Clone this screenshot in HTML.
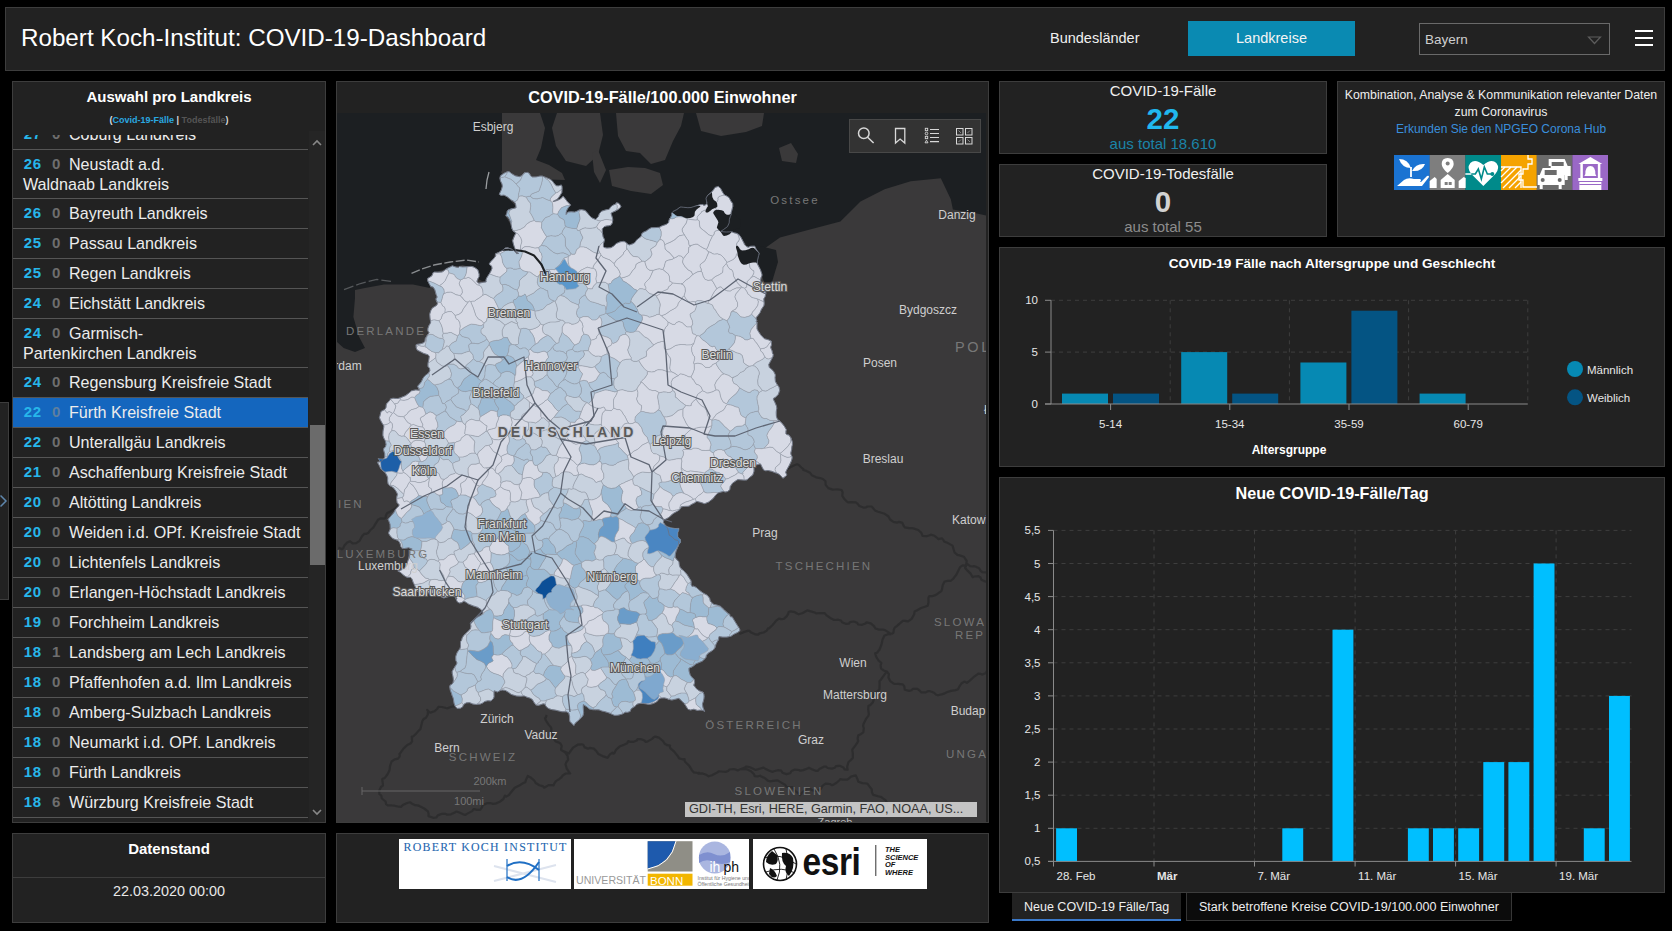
<!DOCTYPE html>
<html><head><meta charset="utf-8">
<style>
*{margin:0;padding:0;box-sizing:border-box}
html,body{width:1672px;height:931px;overflow:hidden;background:#000;font-family:"Liberation Sans",sans-serif;color:#e6e6e6}
.p{position:absolute;background:#222;border:1px solid #3d3d3d}
.a{position:absolute;white-space:nowrap}
.t{position:absolute;left:0;right:0;text-align:center;white-space:nowrap}
/* list */
#list{position:absolute;left:13px;top:134.5px;width:296px;height:687.5px;overflow:hidden}
.row{position:absolute;left:0;width:295px;border-bottom:1px solid #555;height:30px}
.row .n{position:absolute;left:10.8px;top:5.3px;font-weight:bold;color:#27b6ea;font-size:15px;letter-spacing:0.7px}
.row .d{position:absolute;left:39px;top:5.3px;font-weight:bold;color:#6e6e6e;font-size:15px}
.row .nm{position:absolute;left:56px;top:4.8px;color:#ececec;font-size:16.1px;line-height:19px;white-space:nowrap}
</style></head><body>

<!-- header -->
<div class="p" style="left:5px;top:7px;width:1660px;height:64px"></div>
<div class="a" style="left:21px;top:24px;font-size:24.2px;color:#fff">Robert Koch-Institut: COVID-19-Dashboard</div>
<div class="a" style="left:1050px;top:30px;font-size:14.5px;color:#f0f0f0">Bundesländer</div>
<div class="a" style="left:1188px;top:21px;width:167px;height:35px;background:#0a8ab2"></div>
<div class="a" style="left:1188px;top:30px;width:167px;text-align:center;font-size:14.5px;color:#f4f4f4">Landkreise</div>
<div class="a" style="left:1419px;top:23px;width:191px;height:32px;border:1px solid #6a6a6a"></div>
<div class="a" style="left:1425px;top:32px;font-size:13.5px;color:#cfcfcf">Bayern</div>
<svg class="a" style="left:1586px;top:35px" width="17" height="11"><path d="M2.5 2 L14.5 2 L8.5 8.5 Z" fill="none" stroke="#5c5c5c" stroke-width="1.2"/></svg>
<div class="a" style="left:1635px;top:30.2px;width:18px;height:2.2px;background:#fff"></div>
<div class="a" style="left:1635px;top:37.2px;width:18px;height:2.2px;background:#fff"></div>
<div class="a" style="left:1635px;top:44.2px;width:18px;height:2.2px;background:#fff"></div>

<!-- side stub -->
<div class="p" style="left:-1px;top:402px;width:10px;height:198px"></div>
<svg class="a" style="left:0;top:494px" width="8" height="14"><path d="M0.5 1.5 L6 7 L0.5 12.5" fill="none" stroke="#5f87ad" stroke-width="1.5"/></svg>
<!-- left list panel -->
<div class="p" style="left:12px;top:81px;width:314px;height:742px"></div>
<div class="t" style="left:12px;width:314px;top:88px;font-size:15px;font-weight:bold;color:#fff;right:auto">Auswahl pro Landkreis</div>
<div class="t" style="left:12px;width:314px;top:114.5px;font-size:9px;font-weight:bold;color:#ddd;right:auto">(<span style="color:#2aa9e0">Covid-19-Fälle</span> | <span style="color:#555">Todesfälle</span>)</div>
<div id="list">
<div class="row" style="top:-14.5px;height:30px"><div class="n">27</div><div class="d">0</div><div class="nm">Coburg Landkreis</div></div>
<div class="row" style="top:15.5px;height:49px"><div class="n">26</div><div class="d">0</div><div class="nm">Neustadt a.d.</div><div class="nm" style="left:10px;top:25px">Waldnaab Landkreis</div></div>
<div class="row" style="top:64.5px;height:30px"><div class="n">26</div><div class="d">0</div><div class="nm">Bayreuth Landkreis</div></div>
<div class="row" style="top:94.5px;height:30px"><div class="n">25</div><div class="d">0</div><div class="nm">Passau Landkreis</div></div>
<div class="row" style="top:124.5px;height:30px"><div class="n">25</div><div class="d">0</div><div class="nm">Regen Landkreis</div></div>
<div class="row" style="top:154.5px;height:30px"><div class="n">24</div><div class="d">0</div><div class="nm">Eichstätt Landkreis</div></div>
<div class="row" style="top:184.5px;height:49px"><div class="n">24</div><div class="d">0</div><div class="nm">Garmisch-</div><div class="nm" style="left:10px;top:25px">Partenkirchen Landkreis</div></div>
<div class="row" style="top:233.5px;height:30px"><div class="n">24</div><div class="d">0</div><div class="nm">Regensburg Kreisfreie Stadt</div></div>
<div class="row" style="top:263.5px;height:30px;background:#1466be"><div class="n">22</div><div class="d" style="color:#5e7f9f">0</div><div class="nm">Fürth Kreisfreie Stadt</div></div>
<div class="row" style="top:293.5px;height:30px"><div class="n">22</div><div class="d">0</div><div class="nm">Unterallgäu Landkreis</div></div>
<div class="row" style="top:323.5px;height:30px"><div class="n">21</div><div class="d">0</div><div class="nm">Aschaffenburg Kreisfreie Stadt</div></div>
<div class="row" style="top:353.5px;height:30px"><div class="n">20</div><div class="d">0</div><div class="nm">Altötting Landkreis</div></div>
<div class="row" style="top:383.5px;height:30px"><div class="n">20</div><div class="d">0</div><div class="nm">Weiden i.d. OPf. Kreisfreie Stadt</div></div>
<div class="row" style="top:413.5px;height:30px"><div class="n">20</div><div class="d">0</div><div class="nm">Lichtenfels Landkreis</div></div>
<div class="row" style="top:443.5px;height:30px"><div class="n">20</div><div class="d">0</div><div class="nm">Erlangen-Höchstadt Landkreis</div></div>
<div class="row" style="top:473.5px;height:30px"><div class="n">19</div><div class="d">0</div><div class="nm">Forchheim Landkreis</div></div>
<div class="row" style="top:503.5px;height:30px"><div class="n">18</div><div class="d">1</div><div class="nm">Landsberg am Lech Landkreis</div></div>
<div class="row" style="top:533.5px;height:30px"><div class="n">18</div><div class="d">0</div><div class="nm">Pfaffenhofen a.d. Ilm Landkreis</div></div>
<div class="row" style="top:563.5px;height:30px"><div class="n">18</div><div class="d">0</div><div class="nm">Amberg-Sulzbach Landkreis</div></div>
<div class="row" style="top:593.5px;height:30px"><div class="n">18</div><div class="d">0</div><div class="nm">Neumarkt i.d. OPf. Landkreis</div></div>
<div class="row" style="top:623.5px;height:30px"><div class="n">18</div><div class="d">0</div><div class="nm">Fürth Landkreis</div></div>
<div class="row" style="top:653.5px;height:30px"><div class="n">18</div><div class="d">6</div><div class="nm">Würzburg Kreisfreie Stadt</div></div>
<div class="row" style="top:683.5px;height:30px"><div class="n">18</div><div class="d">0</div><div class="nm">Kitzingen Landkreis</div></div>
</div>
<!-- scrollbar -->
<div class="a" style="left:309px;top:131px;width:16px;height:691px;background:#252525"></div>
<div class="a" style="left:310px;top:425px;width:15px;height:140px;background:#6b6b6b"></div>
<svg class="a" style="left:312px;top:139px" width="10" height="8"><path d="M1 6 L5 2 L9 6" fill="none" stroke="#888" stroke-width="1.6"/></svg>
<svg class="a" style="left:312px;top:808px" width="10" height="8"><path d="M1 2 L5 6 L9 2" fill="none" stroke="#888" stroke-width="1.6"/></svg>

<!-- datenstand -->
<div class="p" style="left:12px;top:833px;width:314px;height:90px"></div>
<div class="a" style="left:13px;top:877px;width:312px;height:1px;background:#3d3d3d"></div>
<div class="t" style="left:12px;width:314px;right:auto;top:840px;font-size:15px;font-weight:bold;color:#fff">Datenstand</div>
<div class="t" style="left:12px;width:314px;right:auto;top:882.5px;font-size:14.4px;color:#e8e8e8">22.03.2020 00:00</div>

<!-- map panel -->
<div class="p" style="left:336px;top:81px;width:653px;height:742px"></div>
<div class="t" style="left:336px;width:653px;right:auto;top:87.5px;font-size:16.3px;font-weight:bold;color:#fff">COVID-19-Fälle/100.000 Einwohner</div>
<div class="a" style="left:337px;top:113px;width:649px;height:709px;overflow:hidden;background:#3a393a">
<svg width="649" height="709" viewBox="337 113 649 709" style="display:block">
<rect x="337" y="113" width="649" height="709" fill="#3a393a"/>
<polygon points="337.0,113.0 502.0,113.0 502.0,171.0 501.0,172.0 503.0,175.0 501.0,191.6 509.5,199.8 515.6,206.0 505.4,216.0 515.6,232.4 511.5,240.6 519.7,250.8 505.4,250.8 495.0,252.9 491.0,271.2 487.0,283.5 479.0,279.4 476.8,269.0 462.5,265.0 446.0,269.0 432.0,273.0 429.8,288.0 413.0,284.5 384.0,284.5 365.0,288.0 355.0,290.0 355.0,298.0 353.4,317.0 359.0,336.7 365.0,348.0 355.0,352.0 343.7,348.0 337.0,342.0" fill="#1c1f22"/>
<polygon points="540.0,113.0 986.0,113.0 986.0,215.4 977.0,213.4 952.9,209.4 950.8,199.3 940.8,178.3 910.7,181.3 884.6,189.3 860.5,201.4 840.4,221.4 810.0,229.5 780.0,237.5 760.0,251.6 756.0,248.0 745.0,243.0 700.0,275.0 600.0,275.0 547.7,179.5 565.0,180.0 562.0,173.0 549.0,165.0 536.0,160.0 541.0,148.0 545.0,128.0" fill="#1c1f22"/>
<polyline points="411.5,273.3 421.7,269 434,265 450.3,262 466.6,260 478.9,262" fill="none" stroke="#8a8d90" stroke-width="1.4" stroke-dasharray="9,2.5"/>
<polyline points="344,289.6 360.5,283.5 376.8,279.4 391,281.4" fill="none" stroke="#55585b" stroke-width="1.3" stroke-dasharray="10,3"/>
<polyline points="489,172 487,180 486,189" fill="none" stroke="#9a9da0" stroke-width="1.3"/>
<polygon points="557.0,113.0 600.0,113.0 603.0,135.0 598.0,155.0 586.0,166.0 566.0,161.0 556.0,146.0 552.0,128.0" fill="#3a393a"/>
<polygon points="616.0,113.0 684.0,113.0 681.0,126.0 673.0,141.0 665.0,160.0 651.0,164.0 640.0,153.0 626.0,151.0 618.0,136.0" fill="#3a393a"/>
<polygon points="609.0,170.0 628.0,167.0 645.0,168.0 660.0,173.0 663.0,185.0 651.0,194.0 631.0,191.0 612.0,186.0" fill="#3a393a"/>
<polygon points="696.0,113.0 764.0,113.0 762.0,126.0 746.0,132.0 721.0,136.0 701.0,131.0" fill="#3a393a"/>
<polygon points="779.0,148.0 791.0,143.0 798.0,154.0 796.0,163.0 782.0,161.0" fill="#3a393a"/>
<polygon points="592.0,153.0 598.0,150.0 606.0,170.0 600.0,183.0 594.0,172.0" fill="#3a393a"/>
<polygon points="745.0,243.0 760.0,246.0 776.0,250.0 778.0,262.0 772.0,282.0 764.0,282.0 758.0,264.0" fill="#1c1f22"/>
<g fill="none" stroke="#2b2b2c" stroke-width="2.2" stroke-linejoin="round" opacity="0.8">
<polyline points="781.5,468.7 785.2,470.0 786.8,469.6 789.8,467.5 794.4,465.2 797.0,464.3 798.5,464.7 801.4,467.5 803.4,469.2 803.3,470.0 806.4,470.9 810.1,472.8 811.9,475.3 816.1,477.3 820.1,478.1 820.7,478.2 822.9,479.0 825.5,481.3 825.6,484.8 828.3,488.1 832.7,489.6 834.7,489.5 837.6,489.3 841.6,490.0 842.6,492.3 842.3,495.8 844.6,499.3 847.0,501.6 848.0,502.3 851.2,502.1 855.8,502.3 857.7,503.8 859.4,506.0 863.9,507.7 865.8,507.5 867.4,506.5 871.6,506.5 873.3,508.3 874.9,510.4 878.0,511.7 879.6,512.1 880.6,512.5 884.7,513.8 888.5,516.5 890.1,519.5 893.4,521.8 897.1,522.6 897.7,522.2 899.0,521.9 902.4,522.9 903.3,525.1 904.6,527.3 908.9,528.2 911.4,528.2 913.4,528.4 918.2,530.0 921.4,532.9 922.5,535.8 926.6,536.2 929.7,535.2 930.7,534.6 934.6,535.8 937.3,538.0 938.2,539.1 942.1,538.4 943.5,540.1 944.0,541.5 948.0,543.1 952.5,545.6 953.5,549.0 954.5,552.3 956.8,554.3 957.4,554.9 958.9,555.1 963.8,556.7 966.7,560.9 966.1,565.4 965.1,568.0 967.0,570.1 970.6,573.6 972.5,577.1 974.2,576.5 978.5,576.2 980.5,577.5 981.4,579.8 985.1,581.5 987.1,581.6"/>
<polyline points="739.3,633.2 740.7,633.6 743.1,632.4 747.5,630.9 749.4,630.9 751.2,632.6 755.6,634.4 758.2,634.6 759.5,633.4 763.6,632.5 766.8,630.6 767.7,628.9 767.8,628.6 769.3,628.1 772.6,625.0 776.2,620.6 778.9,618.6 781.1,619.1 783.8,618.9 786.6,616.4 788.2,613.8 788.7,612.0 790.5,611.3 794.9,612.2 797.5,613.8 798.8,614.3 802.8,613.0 806.2,611.0 807.3,610.4 810.7,611.4 814.7,612.5 816.2,613.4 820.1,613.0 824.7,613.2 826.3,615.1 830.2,617.9 834.1,619.9 834.9,620.0 838.1,619.7 841.0,620.5 842.0,622.2 845.7,623.8 849.0,623.6 850.0,622.1 853.8,621.5 857.1,622.7 858.2,624.5 862.1,624.8 865.5,623.5 866.6,622.4 870.8,623.3 874.0,626.1 875.4,628.5 879.1,629.6 883.5,629.7 885.0,630.1 887.4,631.6 891.2,634.1"/>
<polyline points="891.2,634.1 893.4,632.7 893.8,629.9 894.7,627.7 897.1,625.9 900.2,623.2 902.8,620.9 905.0,620.9 908.1,621.3 911.6,618.9 914.1,614.5 914.6,611.6 914.9,611.3 916.8,610.5 920.6,608.2 924.9,606.8 927.7,605.8 928.5,602.4 928.4,597.9 929.3,596.1 932.1,596.2 936.0,594.9 939.5,592.4 941.4,591.1 942.0,589.4 942.7,585.3 944.6,581.5 947.6,580.9 950.9,580.8 953.5,578.5 955.1,576.2 956.3,574.8 957.8,571.7 960.0,567.2 962.7,565.3 965.2,565.6 967.5,564.2 970.2,566.1 973.3,566.5 973.7,566.1 975.4,566.5 979.1,568.2 980.4,570.6 982.3,572.2 986.8,572.3"/>
<polyline points="891.2,634.1 887.8,634.2 884.3,635.8 882.4,640.0 882.0,642.4 881.4,644.7 879.6,649.5 877.0,652.7 875.2,653.4 876.2,656.7 878.5,660.5 880.7,662.3 881.3,663.0 880.6,665.4 881.1,668.7 883.8,670.5 886.8,671.6 888.9,673.9 888.4,677.5 890.2,681.1 893.4,683.4 894.9,684.0 898.0,683.8 902.7,684.3 904.3,686.4 904.8,689.8 909.2,690.9 911.5,690.2 913.0,688.8 917.4,688.8 919.7,690.6 921.2,692.4 925.7,692.4 927.9,691.2 929.5,691.0 934.0,692.7 936.2,694.8 937.9,695.3 942.5,694.1 944.7,693.4 946.7,692.2 951.0,690.9 955.6,690.1 958.1,689.3 959.2,686.9 961.4,683.5 964.3,681.6 965.9,682.2 966.9,682.8 969.8,680.6 974.6,676.3 978.4,673.6 980.3,673.8 982.4,674.6 985.6,673.2 987.8,669.9"/>
<polyline points="886.8,671.6 884.1,675.2 881.0,679.5 879.5,681.3 879.6,684.6 879.4,689.4 877.5,691.3 874.7,693.0 873.0,696.8 873.3,698.5 873.9,699.0 872.9,702.3 870.4,705.1 868.4,706.1 868.2,709.6 868.9,714.1 868.3,715.9 865.9,719.2 863.5,724.0 863.1,726.0 863.8,728.2 863.3,732.4 860.8,734.2 858.3,735.3 857.6,738.9 858.2,741.1 857.8,741.8 855.5,745.3 853.0,748.7 852.2,749.9 852.8,753.1 852.9,757.7 851.1,759.8 848.4,762.2 847.1,767.0 847.6,769.7 844.6,769.3 843.4,767.4 839.7,765.8 836.0,766.1 834.9,767.7 831.8,768.6 827.6,768.0 826.2,766.7 823.8,766.7 819.4,768.9 817.6,770.9 815.7,770.8 811.3,769.0 809.0,767.8 807.5,768.5 803.2,770.1 800.3,770.7 799.0,770.0 794.9,769.6 791.5,771.0 790.2,773.2 786.5,774.1 782.5,772.7 781.3,770.7 777.8,770.2 773.8,771.3 772.5,771.9 768.9,770.5 764.8,768.4 763.5,767.6 759.7,768.7 755.7,769.9 754.3,769.3 750.4,767.4 746.4,766.5 745.0,767.5 741.0,769.1 737.6,770.5 736.6,769.9 733.7,769.0 729.6,769.5 728.1,771.0 725.7,771.9 721.1,771.5 718.7,771.4 716.7,772.8 712.0,775.2 708.6,776.3 706.8,775.1 702.6,773.4 698.4,773.7 699.1,772.8 697.8,773.0 693.9,772.4 691.7,769.9 689.3,765.9 685.3,762.0 684.0,759.6 684.7,759.1 682.5,759.3 679.2,758.4 677.4,755.6 674.2,751.6 670.2,748.1 669.8,746.1 670.0,745.6 667.3,745.2 664.7,743.8 663.0,741.0 658.9,737.6 655.2,736.6 654.1,737.0 651.8,739.1 647.7,741.4 645.8,742.0 644.5,740.6 640.7,739.1 637.6,739.1 636.7,740.6 633.7,741.8 629.8,741.8 628.3,741.1 627.2,743.3 624.0,744.8 619.5,746.6 615.9,750.0 614.3,753.2 613.7,753.6 612.5,752.7 610.1,754.1 607.5,757.8 606.3,757.4 603.4,756.4 598.4,754.1 596.3,751.0 593.8,748.6 589.7,747.9 588.8,748.4 588.0,748.6 584.7,747.4 583.3,744.8 581.5,744.3 577.7,744.7 573.1,747.6 570.2,751.5 569.0,753.5 567.4,752.8 564.7,751.9 567.6,755.8 568.1,759.9 566.6,761.8 565.5,764.1 566.7,768.5 568.9,771.9 570.1,773.4 565.8,773.5 563.0,775.2 561.2,777.5 558.8,779.3 555.9,781.2 554.1,783.8 553.6,785.4 552.3,785.2 548.6,785.1 544.1,787.7 543.6,787.0 543.2,786.4 539.4,785.2 535.7,783.0 534.1,780.3 531.1,777.8 527.8,776.0 525.8,780.3 525.3,782.3 524.5,782.6 522.4,783.6 519.4,785.5 516.7,786.7 514.5,788.0 511.9,791.2 508.8,795.1 506.2,796.6 505.0,795.7 504.7,796.1 503.4,799.0 499.7,801.8 495.4,803.7 493.1,803.9 490.9,803.2 486.9,803.2 483.0,805.1 481.6,807.9 480.2,809.8 477.1,809.9 474.3,809.1 473.6,809.2 472.2,811.1 467.8,813.4 465.1,815.0 463.7,814.4 459.4,812.5 456.2,811.5 454.8,812.6 450.9,814.3 447.1,814.7 445.7,813.9 442.1,813.8 437.8,815.4 436.3,817.5 433.2,817.8 428.5,816.1 428.6,814.0 427.9,811.3 424.2,808.5 420.2,806.5 419.0,805.8 419.2,805.6"/>
<polyline points="456.7,706.9 454.8,706.2 450.1,707.2 447.5,708.3 446.0,708.0 442.0,707.0 438.5,706.8 437.3,708.7 434.5,711.3 430.4,712.6 428.8,711.7 427.2,709.9 428.0,711.0 427.8,714.5 426.0,717.7 423.7,718.9 422.3,721.3 421.1,726.2 420.4,729.2 418.7,730.6 415.9,733.9 413.1,736.5 411.8,736.5 411.9,737.7 412.1,741.3 410.5,743.5 407.2,745.1 403.3,748.8 400.4,752.9 399.4,754.0 399.7,754.2 399.7,756.3 398.0,758.6 394.7,759.4 391.6,761.5 390.0,766.2 389.7,769.4 389.2,771.0 387.4,774.5 384.6,778.1 382.5,778.7 382.2,779.8 382.8,783.1 383.0,785.5 381.1,786.8 379.2,790.8 379.4,794.2 381.1,795.3 381.9,798.5 385.6,801.5 386.1,804.2 387.7,805.4 391.2,805.4 392.2,805.5 394.5,805.7 399.0,806.7 401.2,806.8 402.8,805.1 407.1,803.0 410.3,802.3 411.6,803.5 415.2,805.2 419.2,805.6"/>
<polyline points="546.6,715.0 545.9,717.4 545.0,718.3 545.9,720.5 548.6,724.6 551.0,727.4 551.4,729.1 551.2,731.7 552.4,735.7 554.3,739.5 555.8,741.5 557.6,742.1 560.2,743.3 561.8,746.0 561.1,748.7 561.2,750.1 564.7,751.9"/>
<polyline points="741.0,769.1 745.4,769.0 746.9,769.3 751.0,771.3 754.1,774.2 754.7,776.2 758.1,776.3 760.2,775.7 760.9,776.2 765.1,778.3 767.7,780.6 769.7,781.3 774.9,780.7 777.7,780.4 780.1,781.9 785.0,784.7 786.6,786.8 788.4,787.3 792.2,787.1 792.9,788.1 794.8,790.7 798.8,793.7 800.0,795.1 802.7,791.9 807.3,788.9 809.9,788.5 812.0,790.1 816.7,790.9 820.8,789.0 822.5,785.8 825.6,783.7 830.0,784.0 831.8,785.2 833.1,784.9 836.6,782.7 839.4,780.2 840.2,779.2 842.8,779.6 846.9,779.7 848.9,778.5 851.0,776.6 855.7,775.3 857.4,778.9 858.3,781.7 862.3,783.1 866.8,783.5 867.8,784.2 869.2,786.1 871.7,789.2 872.0,792.4 873.3,794.9 878.1,796.3 881.4,797.1 882.6,798.1 885.4,800.1 887.1,802.9 886.6,805.8 889.0,808.1 893.4,809.6"/>
<polyline points="400.1,505.6 398.6,506.0 395.1,508.6 390.5,511.4 387.0,513.2 385.9,515.4 385.6,517.8 383.9,518.7 380.8,518.3 378.0,519.8 375.3,524.1 373.2,527.7 371.6,529.0 370.2,530.3 368.5,532.7 366.5,533.8 364.3,533.8 362.0,536.2 359.6,540.8 356.2,543.2 352.5,543.4 351.0,542.0 350.1,541.2 347.2,542.6 344.2,545.8 343.1,548.5 341.9,549.1 338.4,547.8"/>
</g>
<g stroke="#9aa1ae" stroke-width="0.55">
<polygon points="578.8,474.8 578.6,474.6 575.4,475.6 573.3,475.2 571.9,473.5 568.9,471.9 564.4,471.7 561.0,473.0 558.9,475.1 555.9,476.4 554.4,477.5 553.0,478.0 552.8,479.3 552.1,482.3 552.1,485.5 553.8,487.3 556.4,487.8 559.2,488.5 562.4,489.2 565.8,489.3 568.4,489.1 569.0,488.5 569.4,488.9 571.7,489.3 573.2,488.8 573.0,486.7 574.6,482.6 577.1,478.0 578.8,474.8" fill="#c8d2df"/>
<polygon points="581.7,443.0 578.3,443.6 575.9,444.2 572.9,443.0 569.0,439.9 566.1,437.1 565.9,437.4 565.4,438.4 563.5,441.5 560.2,445.6 558.1,449.9 557.1,453.3 555.7,455.4 557.0,456.0 558.5,457.2 561.2,458.0 562.9,458.1 565.2,457.9 569.1,458.6 573.3,461.1 576.1,464.1 577.5,465.2 578.9,464.2 581.0,461.9 581.7,457.7 580.8,453.0 579.4,450.2 579.2,448.7 580.3,446.1 581.7,443.0" fill="#d7dae5"/>
<polygon points="458.9,457.0 456.2,454.3 454.4,452.8 453.9,450.5 454.2,446.5 454.7,442.9 454.1,442.3 452.0,442.8 448.5,443.1 446.1,447.0 444.4,449.4 441.7,450.6 438.7,451.3 437.8,452.6 438.6,455.0 441.4,458.5 443.7,459.9 446.2,459.4 448.5,459.7 450.0,461.1 451.0,462.3 452.5,463.5 455.8,461.8 459.3,460.8 459.9,459.4 458.9,457.0" fill="#b3c7da"/>
<polygon points="713.6,204.5 713.5,204.6 711.2,206.8 708.9,208.7 704.5,210.2 701.7,211.6 700.9,213.1 698.7,215.0 697.0,217.3 697.3,219.8 698.8,220.5 699.3,221.0 699.4,224.0 699.9,227.3 701.7,229.0 704.7,231.3 708.7,234.8 712.5,236.2 714.3,234.0 714.3,232.2 715.8,230.9 718.5,230.4 719.9,230.3 721.2,229.9 724.8,228.8 724.9,228.8 725.2,225.2 725.0,220.6 723.6,218.0 721.1,215.6 718.4,211.8 716.5,209.2 715.4,208.6 714.7,207.0 713.6,204.5" fill="#d7dae5"/>
<polygon points="660.7,514.3 662.2,511.7 663.0,508.8 661.5,506.6 658.9,506.6 655.7,506.3 652.5,504.4 649.0,505.6 647.0,505.7 646.6,505.5 644.0,505.9 641.6,507.5 641.4,512.1 640.5,515.1 640.1,516.8 641.4,519.8 643.9,523.1 645.7,524.2 646.8,524.8 650.0,524.6 652.6,523.0 653.7,520.1 656.8,516.9 660.7,514.3" fill="#b3c7da"/>
<polygon points="384.4,469.6 385.7,468.5 387.8,465.5 389.3,461.7 389.1,458.9 387.4,456.7 384.8,457.0 383.2,459.6 381.4,461.1 380.1,461.8 377.4,462.2 379.2,465.4 381.0,469.2 383.0,470.7 383.1,470.3 384.4,469.6" fill="#c8d2df"/>
<polygon points="460.4,295.6 455.9,294.6 453.2,293.0 451.0,292.0 447.4,292.2 444.1,293.5 442.8,295.4 442.0,298.8 440.8,302.4 442.6,305.9 444.4,307.1 445.1,309.1 444.9,311.9 444.9,312.7 448.8,311.6 451.6,311.7 453.2,313.2 455.1,315.5 458.8,314.4 461.8,312.2 463.4,308.8 466.0,305.2 468.3,302.0 466.2,301.7 464.0,300.0 462.3,297.6 461.2,296.8 460.4,295.6" fill="#d7dae5"/>
<polygon points="579.6,418.0 579.6,416.8 580.2,415.0 581.2,412.2 580.4,411.3 578.5,411.1 575.9,411.2 573.4,409.7 570.9,406.4 567.8,403.7 565.1,405.3 562.1,407.4 560.6,409.5 558.9,411.1 556.3,414.1 553.9,417.3 557.1,417.4 561.2,417.1 565.2,418.7 568.2,420.9 570.2,422.3 571.8,422.3 574.8,422.4 575.5,421.9 576.4,420.2 579.6,418.0" fill="#b3c7da"/>
<polygon points="579.2,537.0 583.5,536.8 588.4,538.8 591.9,542.1 594.1,543.9 595.5,542.7 597.6,540.8 598.8,538.4 598.4,534.1 599.7,529.4 602.0,526.7 603.7,525.5 603.5,523.3 602.1,519.6 599.4,519.3 595.4,520.5 591.4,520.8 589.2,521.5 587.8,521.1 584.8,520.5 582.9,520.7 582.9,522.3 583.8,524.7 582.9,527.4 580.7,531.6 579.0,535.4 579.2,537.0" fill="#9dbbd4"/>
<polygon points="640.9,411.5 637.7,414.1 635.2,417.0 634.8,419.7 635.2,422.1 638.1,423.3 640.3,426.2 641.3,427.4 641.7,428.2 642.7,431.8 644.7,435.0 647.1,437.2 648.6,441.8 649.2,443.5 650.0,444.6 652.6,442.4 655.3,440.0 655.8,437.7 657.1,436.0 660.3,435.0 662.5,434.2 662.9,430.1 664.6,426.8 666.2,424.5 666.2,421.8 665.0,418.8 664.1,416.9 663.0,415.6 662.1,414.0 660.9,411.6 659.5,410.0 657.9,410.1 655.9,411.8 653.9,412.9 650.0,413.0 645.8,412.3 643.4,411.5 640.9,411.5" fill="#b3c7da"/>
<polygon points="517.2,289.9 514.2,289.0 511.7,287.6 508.7,285.6 505.1,284.3 502.2,284.7 502.9,287.9 502.7,290.8 499.7,293.1 496.5,295.0 494.9,296.8 493.5,298.5 494.8,300.7 496.7,304.4 498.4,308.3 499.4,310.2 501.7,308.6 503.8,306.0 508.1,303.6 511.7,302.3 513.4,302.5 513.3,300.4 514.4,299.6 515.6,299.4 516.7,298.4 518.6,296.0 518.4,292.6 517.2,289.9" fill="#b3c7da"/>
<polygon points="549.7,629.9 545.4,631.5 542.9,633.6 539.2,635.5 534.3,636.3 531.6,635.9 529.5,635.1 529.1,638.6 529.7,641.3 530.6,643.5 534.0,646.6 537.2,650.3 539.6,651.9 541.0,651.9 541.5,652.7 541.9,654.5 542.9,654.1 544.7,654.0 547.4,652.0 549.6,649.9 550.9,647.9 552.4,646.3 551.8,643.3 550.4,642.1 549.1,639.7 549.1,635.9 550.2,633.3 551.1,631.0 549.7,629.9" fill="#d7dae5"/>
<polygon points="745.1,424.1 747.2,427.6 748.0,429.1 747.8,431.8 747.9,434.7 749.2,435.5 751.5,436.4 753.6,439.5 754.2,442.0 753.5,443.5 753.8,445.2 755.4,448.6 759.2,448.6 761.9,448.7 763.9,448.3 766.2,446.0 768.6,443.2 769.0,440.5 767.7,438.0 766.9,435.2 768.6,431.5 771.9,427.2 774.1,423.5 774.1,421.5 773.2,420.6 770.2,420.4 768.3,419.4 766.6,418.5 764.4,418.5 761.9,417.5 759.8,414.4 758.2,411.1 755.3,411.5 750.3,412.9 747.2,415.3 745.8,417.9 745.5,420.9 745.1,424.1" fill="#b3c7da"/>
<polygon points="550.5,200.8 546.6,199.5 543.9,198.1 542.5,197.5 540.6,198.0 537.1,198.8 533.1,198.5 530.3,196.3 528.8,196.3 526.0,197.0 528.4,201.0 530.3,203.1 530.7,206.2 530.1,210.1 529.7,212.2 530.6,213.5 532.5,216.8 534.2,220.5 535.9,221.7 538.8,221.8 541.9,222.3 543.9,219.6 545.4,217.7 548.3,216.7 550.0,216.1 550.4,215.3 553.2,213.8 552.7,211.3 553.0,207.2 552.4,202.7 550.5,200.8" fill="#b3c7da"/>
<polygon points="723.2,319.1 719.9,316.8 717.1,312.9 715.3,309.7 714.3,308.9 713.6,307.7 712.5,305.1 710.4,303.9 707.7,303.2 706.2,302.7 704.5,301.6 701.0,300.6 697.3,300.6 695.3,301.8 696.3,306.6 694.9,310.7 691.9,312.8 689.9,314.1 690.4,316.6 692.2,320.4 692.7,324.1 691.0,326.9 691.7,328.8 692.1,332.0 693.0,334.0 694.6,334.3 696.8,335.8 699.0,335.9 700.0,336.7 700.0,335.6 702.5,334.0 705.0,331.9 706.5,329.4 710.1,326.7 714.6,324.3 716.9,322.4 718.6,321.1 721.6,320.1 723.2,319.1" fill="#c8d2df"/>
<polygon points="706.5,249.6 708.1,246.4 709.6,242.3 711.2,238.8 712.5,236.2 708.7,234.8 704.7,231.3 701.7,229.0 699.9,227.3 699.4,224.0 699.3,221.0 698.8,220.5 697.3,219.8 695.2,219.9 691.8,219.6 688.4,219.0 686.0,218.1 686.0,217.9 687.2,219.6 686.2,223.1 683.7,226.6 682.0,229.1 682.4,231.6 684.4,234.9 686.7,238.6 688.0,240.3 688.6,241.8 688.8,244.3 689.5,245.9 691.3,245.5 695.0,244.3 697.4,244.3 699.5,245.8 702.9,247.9 706.5,249.6" fill="#d7dae5"/>
<polygon points="711.6,279.9 713.7,277.9 715.7,276.4 719.3,274.7 722.6,272.6 723.0,270.0 723.0,267.5 724.7,265.3 726.4,263.6 726.6,262.7 727.1,262.2 726.2,261.1 724.1,258.1 720.9,254.9 717.5,253.7 714.6,254.0 712.7,253.7 711.1,252.5 708.9,251.7 708.3,253.1 707.3,255.4 706.2,258.3 704.7,260.9 702.1,263.0 700.0,264.7 700.0,266.7 701.2,269.0 701.1,271.2 702.1,272.4 702.5,273.7 703.2,276.4 705.1,279.4 708.1,280.5 711.6,279.9" fill="#d7dae5"/>
<polygon points="572.4,280.3 574.5,279.4 576.4,277.4 576.8,273.8 574.2,270.3 571.4,268.3 569.2,265.7 568.2,261.4 568.2,257.9 568.4,256.4 564.1,258.1 562.0,261.1 559.9,264.6 556.5,267.6 555.2,269.3 554.7,269.6 551.7,269.4 549.0,269.7 551.0,273.4 552.8,276.7 554.4,278.3 555.9,280.2 557.7,282.8 559.7,283.9 561.9,283.8 564.3,285.5 564.9,282.9 567.1,281.2 569.0,280.6 569.8,280.5 572.4,280.3" fill="#d7dae5"/>
<polygon points="424.3,514.2 422.9,517.0 420.9,520.0 418.6,522.8 418.2,525.1 418.7,526.5 419.2,528.5 418.1,529.5 416.1,531.9 414.9,535.1 415.3,537.4 418.5,538.9 422.0,541.4 426.6,541.4 428.9,540.4 431.0,539.3 434.5,538.9 434.0,537.6 433.6,535.0 434.3,532.1 436.1,529.8 438.1,527.5 438.9,524.4 435.4,520.3 431.5,518.0 428.0,517.4 425.5,516.1 424.3,514.2" fill="#b3c7da"/>
<polygon points="560.2,295.5 562.1,294.3 564.3,292.7 565.1,289.6 564.3,285.5 561.9,283.8 559.7,283.9 557.7,282.8 555.9,280.2 554.4,278.3 552.8,276.7 551.0,273.4 549.0,269.7 546.8,269.5 543.5,271.2 541.0,273.2 539.0,275.3 537.7,278.3 537.2,282.3 538.1,285.5 539.6,286.7 540.6,287.8 543.9,289.1 546.2,290.5 547.3,290.6 547.7,291.6 548.1,294.9 549.2,298.3 551.4,299.9 554.6,301.3 555.1,301.4 556.8,299.3 557.5,297.3 560.2,295.5" fill="#b3c7da"/>
<polygon points="501.8,653.9 499.2,654.9 497.1,655.0 493.7,654.4 491.5,657.0 492.2,659.2 493.2,660.7 491.7,661.7 488.5,663.2 486.3,666.3 487.5,668.5 490.1,671.5 493.8,673.4 497.7,674.6 500.8,676.0 503.0,677.6 503.3,673.9 505.7,670.7 507.6,668.7 508.5,668.0 511.8,668.0 512.1,665.2 511.8,663.7 510.0,660.4 507.1,656.9 504.1,655.6 501.8,653.9" fill="#d7dae5"/>
<polygon points="514.6,344.9 517.7,344.5 518.6,343.4 518.4,340.9 518.9,337.0 520.1,332.7 521.0,329.1 519.8,328.8 519.0,328.5 518.2,326.5 517.2,323.7 513.9,322.5 511.9,321.6 511.0,321.7 508.7,323.0 505.0,325.0 503.3,327.7 502.1,330.5 502.2,334.3 503.3,337.7 505.7,337.6 507.3,337.6 508.6,340.2 510.1,342.9 512.2,344.5 514.6,344.9" fill="#c8d2df"/>
<polygon points="403.7,494.2 403.6,495.7 402.3,497.5 403.4,500.3 404.2,501.8 405.2,501.3 407.0,500.9 409.9,502.4 411.9,500.6 414.9,498.8 417.0,497.2 418.8,495.6 417.9,493.2 415.8,489.4 412.9,485.3 410.4,483.5 409.4,482.3 408.2,483.9 407.0,486.6 404.5,489.8 404.0,492.6 403.7,494.2" fill="#d7dae5"/>
<polygon points="647.4,371.2 644.6,368.9 641.6,365.1 639.4,361.6 638.6,360.6 636.4,361.4 633.8,361.3 631.8,360.4 631.0,359.1 629.7,359.1 626.3,359.3 622.6,360.2 620.5,362.3 619.0,365.1 617.4,368.0 616.8,371.1 617.5,374.0 617.3,376.4 614.5,378.8 613.8,381.0 613.7,384.9 614.6,388.1 616.1,389.3 617.4,390.7 617.5,390.8 620.7,390.0 622.9,389.8 624.4,390.4 627.7,391.3 632.0,391.6 634.9,390.8 636.9,389.0 638.4,386.2 640.2,384.0 640.8,382.6 640.9,381.9 641.9,380.8 644.9,378.0 647.4,374.2 647.4,371.2" fill="#c8d2df"/>
<polygon points="763.9,448.3 766.4,448.0 769.7,447.2 772.6,447.5 774.4,449.0 775.5,450.5 777.1,451.8 780.0,453.4 781.5,452.4 782.6,451.6 784.2,449.9 787.6,446.8 790.6,442.4 790.9,437.8 788.8,434.9 786.9,434.7 785.9,433.7 785.9,431.2 786.3,429.7 785.9,429.0 784.3,426.2 781.4,422.6 779.7,421.1 776.4,420.6 773.2,420.6 774.1,421.5 774.1,423.5 771.9,427.2 768.6,431.5 766.9,435.2 767.7,438.0 769.0,440.5 768.6,443.2 766.2,446.0 763.9,448.3" fill="#d7dae5"/>
<polygon points="744.5,288.3 746.7,287.1 746.9,284.7 747.3,281.5 750.6,278.2 752.5,276.0 754.0,272.9 753.9,270.8 752.1,269.9 750.0,267.6 749.3,263.4 750.1,260.0 751.5,257.8 748.1,258.2 745.7,256.8 743.7,254.5 741.0,252.9 737.8,252.2 736.4,254.4 735.7,257.0 733.1,259.5 729.3,261.4 727.1,262.2 726.6,262.7 726.4,263.6 727.9,266.8 729.9,269.2 731.7,269.8 732.9,271.9 733.4,275.2 733.8,276.8 735.0,278.7 737.3,282.8 740.3,286.0 743.1,287.8 744.5,288.3" fill="#d7dae5"/>
<polygon points="463.5,278.5 466.3,278.2 468.3,277.4 471.0,278.7 474.4,282.1 477.2,284.9 479.2,285.3 479.0,284.3 480.4,283.0 478.0,283.1 476.9,281.3 477.9,278.5 479.0,276.9 479.1,274.3 477.8,269.8 475.0,267.8 472.7,266.6 470.3,266.4 467.0,266.8 466.7,269.3 466.5,271.1 466.2,272.9 465.4,275.5 463.5,278.5" fill="#d7dae5"/>
<polygon points="636.9,389.0 634.9,390.8 632.0,391.6 627.7,391.3 624.4,390.4 622.9,389.8 620.7,390.0 617.5,390.8 616.6,393.9 615.3,396.5 614.1,398.1 613.5,400.0 613.5,403.6 613.7,408.2 617.0,409.6 619.9,409.6 622.0,411.8 623.4,414.4 624.6,415.8 626.1,418.7 628.1,422.9 629.9,423.8 632.8,423.4 635.2,422.1 634.8,419.7 635.2,417.0 637.7,414.1 640.9,411.5 641.6,407.5 641.5,405.3 640.1,404.7 638.1,402.5 636.8,399.6 636.8,398.1 637.7,396.3 638.0,392.5 636.9,389.0" fill="#d7dae5"/>
<polygon points="480.3,564.4 480.6,562.5 479.9,561.9 478.2,559.9 476.0,556.4 474.1,553.8 473.4,553.8 471.3,553.9 468.6,554.7 467.7,556.5 466.4,559.2 462.8,562.1 464.3,565.3 465.3,567.4 466.7,568.0 468.7,570.1 471.1,573.4 473.4,575.2 474.7,575.6 475.4,576.4 474.7,574.9 475.5,573.0 477.3,570.4 478.8,567.4 480.3,564.4" fill="#d7dae5"/>
<polygon points="500.1,277.3 503.8,274.0 506.7,271.6 507.0,269.9 506.8,268.4 504.7,266.4 503.1,263.4 502.5,261.9 502.4,260.5 501.8,257.1 500.1,253.8 497.9,253.8 496.2,253.6 495.5,253.8 495.8,256.0 493.8,258.4 491.0,261.4 489.3,263.8 489.9,265.0 491.5,265.9 492.1,268.2 491.1,270.9 489.4,273.8 493.3,275.4 496.5,276.5 498.4,277.0 500.1,277.3" fill="#d7dae5"/>
<polygon points="614.3,633.5 613.0,633.8 610.6,633.7 607.9,633.2 605.9,634.0 604.8,635.0 603.6,636.9 602.8,639.1 602.7,641.8 603.0,644.2 602.7,646.3 600.8,648.6 601.2,649.6 601.9,652.7 603.6,655.1 606.9,654.7 611.3,654.0 613.7,652.6 617.4,650.7 620.8,649.3 622.4,646.6 621.3,642.2 620.0,637.8 617.0,637.0 615.1,636.0 614.3,633.5" fill="#9dbbd4"/>
<polygon points="501.0,689.3 502.2,687.0 503.9,684.2 504.9,682.4 504.6,680.8 503.0,677.6 500.8,676.0 497.7,674.6 493.8,673.4 490.1,671.5 487.5,668.5 486.3,666.3 485.9,666.7 484.3,670.3 481.7,673.9 480.6,677.0 481.3,679.2 480.6,680.6 477.8,681.7 476.7,683.1 475.5,684.7 475.5,687.4 476.3,690.6 478.1,692.5 482.1,691.1 485.9,689.5 488.5,689.1 490.8,690.3 494.0,692.4 494.2,690.8 496.9,691.8 497.7,692.0 499.0,691.1 501.0,689.3" fill="#b3c7da"/>
<polygon points="555.7,193.0 551.8,196.5 550.0,199.2 550.6,200.5 550.5,200.8 552.4,202.7 553.0,207.2 552.7,211.3 553.2,213.8 555.6,214.1 557.6,214.3 559.0,211.0 561.5,207.8 565.8,205.9 568.0,205.4 569.9,205.7 570.6,205.1 569.3,203.5 567.5,201.9 565.3,198.9 563.1,196.2 561.9,197.7 559.6,199.4 555.9,200.9 552.9,201.5 555.0,200.5 558.0,198.5 559.9,195.7 561.8,192.6 562.1,189.1 559.9,190.5 558.2,191.9 555.7,193.0" fill="#d7dae5"/>
<polygon points="522.3,479.0 521.4,481.6 520.3,483.7 519.1,485.1 519.0,486.4 520.1,489.2 521.4,491.6 521.8,492.9 521.3,495.1 520.5,499.2 523.2,499.8 526.6,499.8 529.8,499.0 531.1,499.0 532.6,498.3 535.9,497.8 539.1,497.3 540.4,496.3 539.4,494.0 537.1,490.2 535.0,487.8 534.2,485.0 534.3,480.0 532.3,478.3 530.3,477.4 527.4,477.5 524.2,478.2 522.3,479.0" fill="#d7dae5"/>
<polygon points="512.8,668.8 513.9,672.4 516.0,673.6 518.9,674.1 522.3,676.0 525.4,677.1 526.4,675.4 528.8,674.4 530.1,673.7 530.7,672.8 533.6,671.3 535.4,666.5 536.7,663.5 533.2,661.8 529.1,659.0 525.5,656.6 522.6,656.6 522.0,659.7 519.5,663.1 517.6,666.0 516.2,667.9 512.8,668.8" fill="#c8d2df"/>
<polygon points="661.7,555.3 659.5,552.7 658.1,550.7 657.6,549.8 656.2,549.9 655.3,549.3 654.2,548.2 652.5,547.7 650.4,547.1 648.5,547.7 646.9,548.2 644.8,549.8 642.8,552.8 642.7,556.2 643.7,559.2 644.8,559.7 646.3,561.9 648.8,565.1 651.7,567.0 653.9,566.6 655.9,563.1 658.9,559.7 661.6,556.9 661.7,555.3" fill="#b3c7da"/>
<polygon points="581.1,562.9 577.2,564.2 573.9,565.2 572.5,567.8 571.6,571.7 570.8,575.4 570.5,577.6 570.7,578.2 569.4,579.0 569.2,581.3 569.2,584.1 571.3,586.6 572.7,587.5 574.8,588.3 576.6,587.4 578.5,586.3 579.4,583.8 580.7,582.0 583.1,580.2 585.9,577.8 586.8,574.7 584.7,570.4 582.8,568.2 581.8,567.3 581.6,564.9 581.4,562.8 581.1,562.9" fill="#9dbbd4"/>
<polygon points="598.5,576.1 599.3,579.9 598.5,583.8 597.5,585.9 597.4,588.3 598.7,591.8 601.5,590.9 603.3,590.2 603.9,590.0 605.5,590.1 606.9,588.2 609.0,585.8 610.6,583.2 612.3,580.8 614.7,578.9 616.3,577.1 614.2,576.8 610.8,575.5 607.7,572.1 605.7,569.6 604.1,568.5 602.0,569.9 599.3,571.4 598.8,573.4 598.5,576.1" fill="#c8d2df"/>
<polygon points="530.8,559.4 530.5,557.2 529.1,555.9 528.6,554.5 530.1,552.1 528.4,547.9 526.9,544.9 525.2,543.9 523.1,542.3 520.7,539.7 520.8,543.2 519.4,546.5 515.9,549.2 513.3,550.9 511.9,551.6 509.3,551.8 508.4,552.5 508.4,553.2 508.8,553.5 511.9,555.3 515.2,558.1 517.7,560.2 520.0,560.4 523.4,559.1 527.6,558.4 530.8,559.4" fill="#9dbbd4"/>
<polygon points="758.2,411.1 758.8,409.3 758.7,407.3 757.8,403.4 757.0,398.9 757.2,396.2 758.2,394.8 759.0,392.6 757.4,390.3 754.5,389.7 751.5,390.9 750.1,392.5 748.0,392.3 743.8,390.3 739.5,387.8 738.5,390.3 736.1,393.6 731.8,397.1 728.8,400.1 727.7,402.3 726.3,403.7 727.6,404.5 732.1,405.3 735.8,406.9 737.9,407.3 738.9,407.9 739.6,411.2 740.9,415.1 743.0,416.7 745.8,417.9 747.2,415.3 750.3,412.9 755.3,411.5 758.2,411.1" fill="#b3c7da"/>
<polygon points="527.0,575.1 528.3,577.7 528.3,578.8 527.3,580.7 526.4,583.6 526.5,585.7 527.8,587.0 530.1,588.2 532.4,590.3 534.7,592.2 537.1,593.4 540.8,593.2 544.1,591.9 544.1,590.5 543.8,589.3 544.9,588.0 546.2,585.2 548.4,581.4 550.1,578.1 550.6,576.0 550.0,574.4 547.1,571.5 543.9,569.1 540.8,569.3 538.2,569.4 534.8,569.5 532.1,568.6 531.0,567.0 530.1,565.7 527.9,568.0 526.5,571.4 527.0,575.1" fill="#9dbbd4"/>
<polygon points="551.1,631.0 550.2,633.3 549.1,635.9 549.1,639.7 550.4,642.1 551.8,643.3 552.4,646.3 555.8,647.8 559.1,648.2 561.2,647.3 563.9,646.0 568.0,645.3 571.4,645.7 570.6,644.4 568.6,642.0 567.2,637.8 568.0,633.7 565.6,632.0 564.0,631.0 562.9,629.4 562.1,627.8 560.9,627.6 558.0,629.6 555.1,630.8 553.9,631.0 551.1,631.0" fill="#9dbbd4"/>
<polygon points="648.6,441.8 647.1,437.2 644.7,435.0 642.7,431.8 641.7,428.2 641.3,427.4 640.3,426.2 638.1,423.3 635.2,422.1 632.8,423.4 629.9,423.8 628.1,422.9 628.6,423.0 627.6,423.1 624.7,423.8 622.7,425.7 620.9,428.7 617.1,432.0 613.8,434.9 614.5,437.3 616.3,440.2 618.0,442.1 618.5,442.9 618.7,443.4 618.4,445.6 618.5,447.0 620.1,448.0 623.1,451.4 627.2,455.6 630.3,454.5 631.5,453.3 633.3,451.6 637.5,449.4 640.3,447.1 642.3,445.0 646.2,443.2 648.6,441.8" fill="#d7dae5"/>
<polygon points="681.5,458.9 683.3,455.4 683.6,452.2 682.7,450.3 683.3,449.7 686.5,449.3 686.9,446.8 686.4,442.6 682.1,440.2 678.9,439.5 677.1,439.5 675.2,438.8 672.1,438.3 668.3,438.1 665.0,437.0 662.5,434.2 660.3,435.0 657.1,436.0 655.8,437.7 655.3,440.0 652.6,442.4 650.0,444.6 650.4,446.5 650.6,448.3 651.6,451.6 653.7,453.7 656.8,454.1 659.9,456.0 663.8,457.0 666.4,458.7 667.4,460.0 669.4,460.3 673.0,459.7 676.2,459.0 678.4,458.7 681.5,458.9" fill="#c8d2df"/>
<polygon points="756.9,298.7 758.3,301.3 757.7,305.3 755.0,309.2 752.4,312.1 751.5,314.3 753.6,316.2 756.1,319.0 756.3,317.4 758.1,315.2 760.0,312.7 761.3,309.5 762.6,307.5 763.7,306.1 764.2,304.2 764.1,301.9 761.3,300.6 758.5,299.3 756.9,298.7" fill="#d7dae5"/>
<polygon points="508.4,553.2 508.4,552.5 509.3,551.8 508.9,548.9 508.9,546.1 508.3,545.5 506.3,544.2 503.2,541.3 499.7,539.4 497.0,538.4 495.4,540.3 494.7,541.1 492.6,541.0 492.2,541.9 492.0,542.4 491.3,543.9 489.5,546.8 489.7,550.3 491.1,552.4 493.6,553.4 496.8,554.6 501.3,555.1 504.9,554.6 506.5,553.5 508.4,553.2" fill="#d7dae5"/>
<polygon points="509.3,551.8 511.9,551.6 513.3,550.9 515.9,549.2 519.4,546.5 520.8,543.2 520.7,539.7 519.8,537.8 519.4,536.7 517.6,537.1 516.6,535.7 516.3,533.3 516.0,531.6 515.2,530.4 511.5,529.5 507.1,529.4 504.5,530.3 502.1,532.0 499.3,535.4 497.0,538.4 499.7,539.4 503.2,541.3 506.3,544.2 508.3,545.5 508.9,546.1 508.9,548.9 509.3,551.8" fill="#9dbbd4"/>
<polygon points="564.1,615.9 564.9,613.9 565.2,612.5 564.3,609.7 562.4,606.4 559.2,608.3 554.7,609.7 552.1,609.9 549.2,609.5 547.0,611.0 545.0,612.2 543.5,613.5 543.0,615.2 543.2,618.4 544.7,620.7 547.0,622.4 548.9,625.7 549.7,629.9 551.1,631.0 553.9,631.0 555.1,630.8 558.0,629.6 560.9,627.6 560.5,625.7 559.4,624.1 559.7,621.9 561.8,619.1 564.1,615.9" fill="#9dbbd4"/>
<polygon points="520.6,249.8 520.6,246.1 521.5,243.0 521.9,241.3 520.9,237.9 518.2,234.0 515.3,232.4 513.4,230.5 511.9,228.5 513.3,231.3 515.7,232.6 515.7,233.5 514.8,235.3 513.7,237.9 512.7,240.8 513.5,244.3 514.1,246.2 515.0,248.6 516.5,251.9 518.6,251.2 520.6,249.8" fill="#d7dae5"/>
<polygon points="500.1,253.8 504.2,251.5 506.8,249.5 508.4,248.7 511.8,249.3 507.8,247.8 505.2,248.1 502.9,250.2 498.8,252.3 496.2,253.6 497.9,253.8 500.1,253.8" fill="#d7dae5"/>
<polygon points="689.1,701.1 688.6,698.1 687.3,694.3 685.5,693.0 681.4,692.9 677.1,694.2 674.5,695.7 671.3,696.1 670.1,698.1 668.7,699.4 672.2,700.0 676.0,699.0 678.6,698.3 680.1,699.2 681.7,701.1 683.9,702.9 684.6,703.9 687.8,703.1 689.1,701.1" fill="#b3c7da"/>
<polygon points="440.9,434.8 444.6,431.8 446.9,429.1 450.4,426.7 454.6,424.7 456.0,422.9 456.6,421.1 452.9,418.8 449.7,416.7 447.5,413.5 446.4,411.8 445.8,412.0 445.2,410.8 441.9,412.6 439.6,414.0 438.3,414.8 436.2,415.4 435.6,418.8 436.4,420.3 437.5,423.1 437.8,426.5 436.7,428.3 435.6,430.5 437.6,433.1 440.9,434.8" fill="#b3c7da"/>
<polygon points="471.1,403.7 470.2,400.0 469.6,397.9 470.0,396.1 471.0,393.3 471.6,390.6 469.2,390.7 465.5,391.6 461.4,390.9 458.0,388.6 458.8,390.8 458.3,393.2 455.2,395.4 451.8,397.4 450.8,399.6 453.0,403.1 456.4,406.9 460.3,408.5 463.8,409.4 466.4,411.3 468.9,408.9 469.4,406.2 471.1,403.7" fill="#b3c7da"/>
<polygon points="583.9,334.0 581.4,336.6 580.5,339.9 578.9,343.1 574.7,345.1 573.2,347.0 572.4,349.2 574.7,351.6 577.8,352.1 580.9,350.9 583.3,351.1 583.6,350.8 585.4,350.8 588.5,350.7 588.9,347.8 589.8,345.7 590.7,343.4 591.0,340.3 589.6,337.3 588.4,335.3 586.6,334.6 583.9,334.0" fill="#b3c7da"/>
<polygon points="673.0,496.3 674.8,495.4 676.0,494.1 678.8,493.0 681.6,492.6 682.7,493.0 684.4,493.6 682.4,490.8 680.6,486.5 679.8,483.2 680.3,481.0 681.5,477.6 682.2,473.7 681.5,471.8 678.2,473.7 676.5,476.7 672.9,479.6 668.0,481.4 665.2,481.9 662.0,481.9 659.6,482.7 658.7,483.8 659.7,486.3 663.4,489.5 667.4,491.5 670.8,493.3 673.0,496.3" fill="#b3c7da"/>
<polygon points="435.6,430.5 436.7,428.3 437.8,426.5 437.5,423.1 436.4,420.3 435.6,418.8 436.2,415.4 433.0,412.8 430.0,411.8 427.9,412.9 425.8,414.1 423.5,416.1 421.0,417.3 420.2,418.9 421.2,421.4 422.7,424.4 422.5,427.0 424.1,428.5 425.0,430.7 425.6,433.7 426.3,435.4 427.3,433.1 429.4,431.1 432.5,430.0 434.4,430.0 435.6,430.5" fill="#d7dae5"/>
<polygon points="741.1,287.8 736.7,287.8 732.6,289.5 730.3,291.0 727.0,290.8 723.1,288.9 721.2,287.0 720.0,286.8 716.8,288.6 714.2,291.8 712.2,295.2 710.7,298.5 708.8,301.2 707.7,303.2 710.4,303.9 712.5,305.1 713.6,307.7 714.3,308.9 715.3,309.7 717.1,312.9 719.9,316.8 723.2,319.1 725.0,319.9 727.0,320.8 729.1,318.0 730.6,314.8 731.1,312.1 732.7,310.7 735.6,309.2 737.6,306.3 737.5,302.5 735.9,299.4 734.9,296.8 736.1,293.7 739.0,290.3 741.1,287.8" fill="#d7dae5"/>
<polygon points="397.0,528.3 399.9,526.6 400.4,525.7 399.9,525.1 400.5,523.9 402.0,521.7 401.4,518.4 399.6,517.2 397.8,515.6 396.5,512.7 395.4,509.6 393.9,512.6 391.4,515.5 389.2,518.0 388.2,519.4 388.9,521.0 390.1,524.4 390.3,528.9 391.2,528.4 393.3,527.8 397.0,528.3" fill="#9dbbd4"/>
<polygon points="650.3,534.5 650.2,532.8 649.9,529.1 648.5,525.7 645.7,524.2 643.9,523.1 641.4,522.8 638.2,523.8 637.1,525.9 635.7,528.0 633.9,532.1 631.1,534.7 629.6,537.4 630.4,540.9 632.4,543.5 634.2,542.8 637.7,541.3 642.3,540.5 645.5,541.5 647.4,543.8 649.9,545.8 650.4,543.2 650.4,539.9 650.2,536.7 650.3,534.5" fill="#9dbbd4"/>
<polygon points="465.4,424.8 464.1,424.0 462.2,421.7 459.7,421.6 456.6,421.1 456.0,422.9 454.6,424.7 450.4,426.7 446.9,429.1 444.6,431.8 440.9,434.8 443.2,436.8 446.3,439.0 448.5,443.1 452.0,442.8 454.1,442.3 454.7,442.9 456.6,441.8 459.8,440.8 461.0,439.7 461.2,438.3 463.4,436.6 465.9,434.7 464.8,433.6 465.2,429.9 465.9,426.6 465.4,424.8" fill="#d7dae5"/>
<polygon points="692.8,274.5 691.3,271.5 688.3,270.0 685.0,266.5 682.9,263.1 682.7,261.6 683.3,258.4 681.4,256.0 678.4,255.7 676.1,257.2 674.2,258.1 672.2,259.3 668.3,260.1 665.6,261.3 664.9,263.5 664.2,266.5 662.8,269.5 666.1,272.3 668.3,274.0 669.4,276.7 669.6,280.1 669.8,281.5 670.7,281.6 672.5,283.0 674.4,283.3 677.0,283.5 680.9,283.9 682.7,283.6 683.5,282.7 685.2,280.8 689.3,277.9 692.8,274.5" fill="#d7dae5"/>
<polygon points="629.7,581.3 626.9,582.9 624.9,585.1 624.9,587.3 626.3,589.0 627.4,590.7 628.9,593.1 629.5,596.8 629.7,599.7 630.1,600.8 633.9,598.5 638.1,595.8 640.5,593.6 643.4,592.7 647.8,593.2 645.6,591.4 642.6,589.7 640.3,585.9 639.6,583.0 640.2,581.2 638.4,580.3 636.0,579.2 633.7,581.0 632.5,581.6 629.7,581.3" fill="#9dbbd4"/>
<polygon points="626.1,679.0 626.0,679.1 627.8,682.6 629.1,686.5 630.3,688.4 631.8,689.9 633.7,692.6 634.8,691.4 636.5,690.1 638.2,686.5 639.1,684.0 641.7,682.6 645.8,681.6 647.7,680.6 647.6,679.0 645.4,676.3 643.6,672.0 642.7,668.6 642.5,667.0 641.2,667.2 638.2,667.8 634.4,671.6 633.1,675.2 632.6,677.6 630.7,678.8 628.9,678.9 628.2,678.7 626.1,679.0" fill="#b3c7da"/>
<polygon points="473.4,575.2 471.1,573.4 468.7,570.1 466.7,568.0 465.3,567.4 464.3,565.3 462.8,562.1 460.2,562.0 458.5,561.8 457.5,564.0 454.3,566.0 450.4,567.9 449.5,569.7 450.1,571.8 449.0,574.3 447.2,577.4 449.7,576.2 453.2,576.8 455.9,578.9 457.9,581.2 460.5,582.1 464.0,581.5 467.6,579.3 468.9,577.4 471.0,576.0 473.4,575.2" fill="#c8d2df"/>
<polygon points="643.7,559.2 641.9,561.1 638.1,563.3 636.9,564.8 635.5,566.4 635.2,569.8 636.0,573.3 636.6,575.9 636.0,579.2 638.4,580.3 640.2,581.2 642.1,579.2 645.2,578.3 649.6,578.2 651.7,577.9 653.7,576.9 657.3,575.1 655.4,574.2 654.0,571.4 653.6,568.5 653.9,566.6 651.7,567.0 648.8,565.1 646.3,561.9 644.8,559.7 643.7,559.2" fill="#d7dae5"/>
<polygon points="780.5,454.0 780.6,457.1 780.8,460.7 780.0,463.4 777.9,465.3 775.6,467.3 774.9,469.8 776.0,471.9 777.2,473.3 778.9,474.1 780.8,475.8 782.9,478.2 785.6,476.3 786.9,475.0 786.3,473.9 785.6,472.2 786.9,469.6 788.9,466.0 791.1,461.7 792.2,458.1 791.9,456.1 789.7,457.1 787.1,457.3 783.9,456.0 780.5,454.0" fill="#d7dae5"/>
<polygon points="534.2,220.5 532.5,216.8 530.6,213.5 529.7,212.2 530.1,210.1 530.7,206.2 530.3,203.1 528.4,201.0 526.0,197.0 522.2,195.8 519.6,196.0 518.4,197.2 517.4,200.1 514.9,201.7 514.2,202.0 515.3,203.1 515.9,205.3 516.1,207.7 514.9,208.2 512.1,208.7 509.4,210.8 508.8,213.4 510.3,217.6 511.7,221.6 511.0,223.3 511.2,224.8 511.9,228.5 513.4,230.5 515.6,230.7 520.2,229.5 524.5,227.0 526.6,224.2 530.0,221.9 533.4,220.8 534.2,220.5" fill="#c8d2df"/>
<polygon points="605.5,590.1 603.9,590.0 603.3,590.2 601.5,590.9 598.7,591.8 598.2,594.1 598.4,595.7 598.5,597.0 596.8,598.5 594.4,601.8 593.0,606.1 595.0,607.7 597.7,608.0 600.7,609.9 603.3,612.5 605.6,611.3 607.3,610.9 610.6,610.7 614.0,610.2 615.4,609.1 613.7,607.2 613.6,604.5 615.6,601.6 618.2,599.3 616.0,599.1 612.7,596.4 608.9,592.5 605.5,590.1" fill="#b3c7da"/>
<polygon points="435.3,352.5 435.9,354.3 435.6,357.8 436.2,360.8 437.3,362.5 439.4,364.0 442.0,365.9 444.7,366.5 447.6,365.7 448.6,364.2 450.2,362.5 453.1,360.4 454.7,357.7 454.4,355.3 453.8,353.4 450.8,350.8 448.9,346.6 446.9,345.8 446.0,346.6 444.6,348.3 442.2,349.4 439.1,351.9 438.8,352.8 437.5,352.6 435.3,352.5" fill="#c8d2df"/>
<polygon points="479.5,463.1 479.2,459.8 477.7,455.6 476.5,454.2 475.1,453.1 471.6,453.1 469.1,454.0 467.2,455.6 463.1,456.9 458.9,457.0 459.9,459.4 459.3,460.8 455.8,461.8 452.5,463.5 453.2,467.7 455.6,472.7 458.5,474.4 461.7,475.1 464.9,476.0 467.4,477.2 468.6,476.3 468.1,472.0 468.2,468.1 470.0,465.5 471.5,464.4 472.8,464.3 476.0,464.2 479.5,463.1" fill="#c8d2df"/>
<polygon points="595.3,652.7 598.0,650.7 600.8,648.6 602.7,646.3 603.0,644.2 602.7,641.8 602.8,639.1 603.6,636.9 604.8,635.0 602.7,635.3 599.3,635.7 596.2,635.8 594.2,635.4 592.0,634.8 588.9,633.9 585.9,632.5 584.1,633.7 583.7,634.9 585.0,638.0 586.7,641.6 589.6,643.4 592.0,645.4 593.6,648.8 594.5,651.8 595.3,652.7" fill="#c8d2df"/>
<polygon points="493.2,383.9 495.8,386.0 499.0,387.8 501.4,391.5 502.3,394.9 503.7,393.1 505.9,390.4 508.9,388.5 509.8,387.7 509.9,387.8 512.1,387.9 514.1,387.5 513.9,385.2 514.5,382.0 514.7,378.4 515.1,376.1 514.6,375.1 513.0,373.4 509.9,371.7 506.3,371.3 503.5,372.3 501.0,373.5 500.6,376.0 498.2,378.3 495.3,380.4 493.7,382.4 493.2,383.9" fill="#b3c7da"/>
<polygon points="709.8,469.0 707.1,470.9 705.1,472.3 704.7,473.2 705.9,475.8 705.0,479.1 702.7,481.4 700.8,482.3 700.7,483.7 702.2,487.0 703.8,491.1 704.9,492.5 707.0,493.1 710.4,492.9 713.3,492.5 715.4,492.5 718.4,492.7 722.1,491.7 724.0,491.4 722.3,489.0 720.8,486.5 721.3,484.6 723.6,482.5 725.9,479.1 722.7,475.0 719.1,472.6 716.0,471.9 713.8,470.6 712.1,469.1 709.8,469.0" fill="#b3c7da"/>
<polygon points="605.5,410.2 608.9,410.5 611.4,410.7 612.0,410.0 613.7,408.2 613.5,403.6 613.5,400.0 614.1,398.1 615.3,396.5 616.6,393.9 617.5,390.8 617.4,390.7 615.6,391.7 614.5,391.8 611.3,390.9 607.4,390.0 605.1,389.8 602.3,390.7 597.8,392.2 594.6,393.3 593.3,397.9 591.1,401.2 589.0,402.8 588.7,404.0 592.5,406.6 597.0,408.4 600.9,408.2 603.3,407.1 604.5,407.8 605.5,410.2" fill="#d7dae5"/>
<polygon points="579.9,246.9 580.6,242.4 582.2,239.1 583.0,238.0 582.2,236.1 580.5,232.7 579.8,230.0 578.4,230.5 577.5,230.2 576.7,228.5 574.0,228.6 569.4,227.7 565.7,226.6 564.7,227.4 564.0,228.6 562.7,230.6 561.7,233.4 564.0,236.1 565.1,237.9 565.3,241.4 565.4,245.7 566.5,247.9 568.5,249.9 570.7,253.5 572.2,254.4 574.9,254.2 575.7,252.6 576.6,249.8 579.9,246.9" fill="#b3c7da"/>
<polygon points="501.0,373.5 503.5,372.3 506.3,371.3 509.9,371.7 513.0,373.4 514.6,375.1 515.1,376.1 515.7,374.5 515.9,372.3 515.9,369.7 516.1,367.7 516.8,366.4 516.4,365.0 515.5,361.6 513.5,358.0 510.7,356.3 507.2,355.2 505.2,356.8 504.3,358.5 502.6,360.0 500.4,362.0 497.6,363.1 495.8,364.0 495.3,365.5 496.6,368.3 498.7,371.5 501.0,373.5" fill="#9dbbd4"/>
<polygon points="429.6,579.6 428.0,578.6 425.5,578.1 422.5,575.3 420.3,572.4 419.5,570.8 418.6,570.4 417.3,569.1 414.3,567.7 411.5,569.6 410.7,571.5 410.6,573.4 409.2,575.3 407.0,577.3 407.8,577.5 410.4,577.3 412.0,579.0 412.8,581.5 413.5,582.9 414.5,585.0 415.6,584.5 418.8,584.1 423.4,583.1 426.1,581.4 429.6,579.6" fill="#d7dae5"/>
<polygon points="599.2,316.7 599.9,315.6 602.4,314.9 604.3,314.3 605.9,313.2 606.0,309.8 605.2,306.2 604.3,305.2 602.2,305.3 598.5,303.8 594.3,302.4 590.5,301.5 587.5,299.0 585.2,294.8 581.9,296.8 579.5,299.5 579.5,302.4 578.3,304.9 579.0,307.3 578.4,308.0 577.1,309.6 576.4,313.2 577.3,316.4 579.7,318.3 583.5,316.6 588.1,316.7 590.4,318.4 592.1,320.0 595.4,320.1 598.0,318.6 599.2,316.7" fill="#b3c7da"/>
<polygon points="555.7,455.4 553.0,455.4 550.8,454.5 550.7,454.4 549.3,454.5 546.4,455.7 544.8,458.3 542.3,461.8 537.4,465.2 537.6,467.7 538.7,470.9 540.8,472.2 543.1,472.5 546.9,472.4 549.9,474.1 551.3,476.4 553.0,478.0 554.4,477.5 555.9,476.4 554.9,472.6 554.1,467.7 554.8,464.4 556.7,462.8 558.2,460.5 558.5,457.2 557.0,456.0 555.7,455.4" fill="#c8d2df"/>
<polygon points="447.4,521.3 449.9,522.0 452.0,524.9 453.3,527.6 453.9,529.2 457.0,529.8 461.5,530.5 464.4,530.4 465.9,529.6 466.8,526.8 466.5,525.0 465.8,522.0 465.8,517.1 466.6,513.1 466.1,512.9 463.2,514.1 459.1,513.7 456.0,511.7 454.5,509.5 453.1,508.7 450.3,512.4 447.1,516.8 446.1,519.9 447.4,521.3" fill="#b3c7da"/>
<polygon points="751.5,257.8 755.6,255.2 757.5,253.4 758.8,252.7 757.6,251.4 755.9,248.8 754.7,246.2 750.7,246.3 748.2,247.3 746.5,246.6 744.5,244.6 743.9,242.9 743.0,241.3 741.4,238.1 739.0,234.6 736.2,233.2 738.4,235.6 739.3,239.0 738.5,241.4 737.1,242.3 736.5,244.6 737.0,248.7 737.8,252.2 741.0,252.9 743.7,254.5 745.7,256.8 748.1,258.2 751.5,257.8" fill="#d7dae5"/>
<polygon points="668.0,322.1 672.5,324.4 674.9,324.5 676.2,322.7 678.9,321.6 682.3,322.7 684.8,325.2 687.0,327.0 691.0,326.9 692.7,324.1 692.2,320.4 690.4,316.6 689.9,314.1 691.9,312.8 694.9,310.7 696.3,306.6 695.3,301.8 692.8,301.5 690.3,301.9 688.0,301.1 685.8,298.4 684.1,295.7 682.3,297.2 681.9,299.0 679.8,301.1 678.1,303.4 677.6,305.8 675.1,308.2 670.7,310.5 667.9,312.6 665.3,314.3 661.3,315.8 663.1,317.4 665.5,319.2 668.0,322.1" fill="#d7dae5"/>
<polygon points="422.9,407.5 423.2,404.8 423.5,401.8 426.2,399.2 428.6,397.4 430.4,396.5 434.4,396.0 438.8,395.4 438.7,391.8 437.1,387.7 434.9,385.0 432.8,383.8 431.1,382.2 429.3,380.4 427.4,379.3 424.6,382.5 424.0,385.5 422.9,387.6 420.2,388.4 418.8,388.3 420.0,391.1 419.2,393.4 416.6,394.9 414.5,397.4 415.7,400.7 417.4,404.2 419.2,406.5 421.1,407.1 422.9,407.5" fill="#9dbbd4"/>
<polygon points="661.2,669.3 658.4,669.9 655.6,671.1 654.8,673.1 654.7,675.7 652.9,678.4 655.6,680.8 657.4,683.6 658.5,684.5 659.1,685.2 661.1,684.6 663.2,685.6 666.9,687.0 669.2,684.0 670.4,681.3 671.3,679.2 672.5,677.7 673.3,676.5 670.4,677.0 667.4,675.3 665.1,672.4 663.3,670.2 661.2,669.3" fill="#d7dae5"/>
<polygon points="410.7,444.0 411.2,446.7 412.4,450.5 414.6,452.4 417.3,454.5 419.5,458.4 420.3,461.2 421.1,461.8 422.9,461.4 425.9,459.7 427.5,457.1 428.3,454.3 431.0,452.2 427.8,450.8 425.9,447.9 425.5,445.6 425.8,445.5 425.7,444.2 424.3,441.3 423.2,441.2 420.7,440.5 416.4,440.2 413.5,441.1 411.1,443.4 410.7,444.0" fill="#d7dae5"/>
<polygon points="581.1,562.9 581.4,562.8 583.9,561.3 585.5,560.4 588.6,560.4 591.3,560.9 591.9,561.3 593.4,560.7 596.4,559.0 594.7,554.6 594.0,552.6 594.8,550.6 596.0,547.3 595.9,545.2 594.1,543.9 591.9,542.1 588.4,538.8 583.5,536.8 579.2,537.0 578.5,538.4 577.8,539.9 575.8,541.2 576.6,542.9 576.2,547.0 575.1,551.1 575.0,553.5 576.8,556.4 579.5,560.2 581.4,562.1 581.1,562.9" fill="#9dbbd4"/>
<polygon points="390.1,485.2 391.3,482.2 394.3,478.5 396.8,475.1 397.2,473.2 396.4,472.6 393.7,471.7 391.6,470.4 389.4,469.3 386.9,469.0 384.4,469.6 383.1,470.3 383.0,470.7 385.0,472.2 386.7,475.3 387.6,477.3 387.7,478.1 387.5,480.3 388.0,483.6 389.6,485.7 390.1,485.2" fill="#c8d2df"/>
<polygon points="599.8,253.0 600.6,253.7 600.9,255.1 601.8,255.7 602.9,257.2 605.7,258.4 609.4,259.8 612.3,262.0 614.1,263.8 616.6,260.0 620.9,256.7 623.4,254.1 623.8,252.4 625.0,251.0 626.5,249.6 626.6,248.1 626.5,246.3 627.0,243.8 625.8,242.2 623.5,241.3 619.5,242.0 616.0,243.8 613.9,245.9 611.0,247.7 606.9,248.1 604.4,247.5 603.4,246.8 603.4,244.0 604.1,241.2 601.1,243.9 598.4,247.0 598.5,250.0 599.8,253.0" fill="#d7dae5"/>
<polygon points="467.5,648.7 468.5,645.8 468.4,644.2 467.3,642.8 466.4,639.6 466.9,635.2 465.5,634.4 464.3,634.7 462.2,637.9 461.6,640.2 460.5,641.8 460.5,644.1 460.5,646.5 460.2,648.2 459.3,649.5 460.6,649.7 462.8,649.4 465.8,649.0 467.5,648.7" fill="#c8d2df"/>
<polygon points="574.1,606.2 575.5,602.3 577.1,598.7 577.2,596.0 575.9,592.5 574.8,588.3 572.7,587.5 571.3,586.6 569.2,584.1 565.7,585.3 563.5,587.4 563.3,590.3 562.1,593.4 562.9,595.2 562.0,597.9 560.5,601.0 560.3,602.6 562.1,604.6 563.1,603.1 565.8,602.9 568.1,603.9 568.8,605.4 570.5,606.4 574.1,606.2" fill="#b3c7da"/>
<polygon points="674.7,653.6 676.1,651.9 678.3,649.7 681.6,646.8 683.6,643.5 683.3,640.6 680.9,637.5 678.3,636.7 676.0,635.8 674.1,633.7 672.6,632.7 671.4,632.8 667.4,633.4 665.7,633.4 662.7,633.5 658.8,634.7 657.2,637.2 657.8,639.5 659.0,640.9 661.3,642.9 662.7,645.9 663.4,647.4 663.9,649.6 664.9,653.6 667.9,655.0 671.8,654.9 674.7,653.6" fill="#6a9cc9"/>
<polygon points="548.5,492.6 545.3,492.9 541.8,494.6 540.4,496.3 539.1,497.3 535.9,497.8 532.6,498.3 531.1,499.0 532.0,502.6 533.7,506.7 536.2,508.5 538.9,509.6 541.4,512.1 543.5,514.0 547.7,510.9 549.4,508.8 552.5,507.8 555.3,507.6 552.4,503.9 550.2,500.8 549.2,499.4 549.0,496.6 548.5,492.6" fill="#c8d2df"/>
<polygon points="707.9,638.0 708.8,637.5 709.9,634.6 712.5,632.2 715.6,630.0 717.1,627.9 714.3,625.4 710.8,624.1 708.2,623.5 707.0,620.1 706.9,616.7 702.8,616.7 700.1,616.3 698.9,616.4 695.8,617.4 693.1,618.7 692.5,620.5 693.6,623.5 694.3,627.6 694.6,628.5 696.2,629.2 697.0,628.7 697.9,629.1 699.8,631.7 702.5,635.1 705.5,637.0 707.9,638.0" fill="#d7dae5"/>
<polygon points="658.0,596.8 657.9,597.1 657.8,599.4 658.6,601.8 660.9,602.8 664.2,605.4 665.7,606.4 668.3,607.5 671.8,607.7 673.3,606.7 673.2,603.7 674.8,600.5 677.5,597.5 679.9,595.0 677.9,593.5 674.4,590.4 670.4,589.0 666.5,589.9 664.5,589.8 662.6,589.1 659.4,588.7 658.5,591.8 658.9,594.6 658.0,596.8" fill="#b3c7da"/>
<polygon points="510.4,416.4 511.5,419.6 512.1,422.2 511.4,425.9 509.9,430.2 509.0,432.5 509.5,433.4 510.7,435.2 512.7,438.1 516.4,440.1 519.9,440.0 522.5,438.4 522.5,436.5 524.3,434.2 526.7,431.7 528.4,429.1 528.7,424.7 528.1,422.1 526.3,421.6 524.4,420.8 522.5,419.2 520.5,419.3 517.4,419.7 514.6,419.5 512.8,418.3 510.4,416.4" fill="#d7dae5"/>
<polygon points="533.7,532.9 534.9,531.1 535.1,528.5 534.5,525.3 531.6,521.9 529.2,519.9 527.5,518.2 526.2,515.5 524.9,513.6 521.4,515.5 519.3,517.7 517.9,519.6 515.0,520.8 514.7,523.5 515.2,526.6 515.8,529.1 515.2,530.4 516.0,531.6 516.3,533.3 516.6,535.7 517.6,537.1 519.4,536.7 522.4,535.0 524.3,533.8 525.8,533.3 529.5,533.2 533.7,532.9" fill="#9dbbd4"/>
<polygon points="478.1,692.5 476.3,690.6 475.5,687.4 475.5,684.7 474.0,685.6 472.0,686.5 468.8,687.7 467.4,689.3 467.0,691.2 464.7,692.9 462.1,694.3 461.1,695.1 462.2,698.8 461.9,702.8 462.5,703.6 462.8,703.8 463.3,705.1 464.4,703.8 466.4,702.8 469.4,702.6 471.1,703.2 472.8,704.0 476.1,704.5 478.8,702.9 480.7,700.3 480.5,697.4 478.9,695.1 478.1,692.5" fill="#c8d2df"/>
<polygon points="744.1,480.1 746.6,480.0 747.8,479.1 749.7,477.3 752.8,474.9 754.0,470.9 754.0,467.3 756.3,465.0 759.8,464.0 758.5,462.6 757.1,461.8 755.7,460.4 751.7,462.0 749.5,464.4 747.6,467.4 744.5,470.4 742.7,472.6 743.0,473.9 742.3,474.1 743.8,476.2 744.1,480.1" fill="#d7dae5"/>
<polygon points="759.0,392.6 758.2,394.8 757.2,396.2 757.0,398.9 757.8,403.4 758.7,407.3 758.8,409.3 758.2,411.1 759.8,414.4 761.9,417.5 764.4,418.5 766.6,418.5 768.3,419.4 770.2,420.4 773.2,420.6 776.4,420.6 779.7,421.1 777.3,419.3 776.2,415.5 776.3,410.9 776.8,408.1 776.4,405.9 774.8,402.2 773.4,399.4 773.5,398.3 775.5,397.3 778.2,394.5 779.7,390.4 779.0,387.1 777.4,384.9 776.4,385.4 773.9,386.9 770.0,388.8 767.4,390.5 765.6,391.1 762.3,390.4 760.3,391.7 759.0,392.6" fill="#c8d2df"/>
<polygon points="632.6,479.1 632.8,481.1 633.3,483.8 634.6,485.3 636.8,485.6 639.6,487.2 642.5,488.6 646.0,490.5 649.4,491.9 651.5,492.8 652.5,493.7 654.0,494.5 657.0,491.0 659.3,488.0 659.7,486.3 658.7,483.8 659.6,482.7 662.0,481.9 661.1,478.9 660.1,475.4 658.3,474.5 655.6,473.3 652.7,470.1 651.2,472.0 649.3,472.6 645.4,472.3 642.7,471.9 641.3,472.3 638.1,473.6 634.9,475.5 633.8,477.1 632.6,479.1" fill="#c8d2df"/>
<polygon points="664.0,341.4 664.1,344.0 664.0,347.1 664.5,348.9 665.9,349.7 670.1,349.0 672.8,347.3 675.7,345.5 680.8,344.5 684.4,344.6 686.6,345.1 690.6,344.9 693.8,343.5 694.8,340.8 695.4,338.2 696.8,335.8 694.6,334.3 693.0,334.0 692.1,332.0 691.7,328.8 691.0,326.9 687.0,327.0 684.8,325.2 682.3,322.7 678.9,321.6 676.2,322.7 674.9,324.5 672.5,324.4 668.0,322.1 667.8,324.9 667.0,326.1 665.8,327.0 664.4,329.7 663.7,334.0 663.9,337.7 664.5,339.8 664.0,341.4" fill="#d7dae5"/>
<polygon points="448.8,594.0 447.9,590.9 446.1,589.6 444.8,588.6 444.9,585.5 445.9,581.6 446.5,579.1 446.0,580.1 444.8,579.9 441.8,580.6 438.9,580.3 437.2,579.6 434.6,579.3 430.3,579.8 429.1,583.0 428.9,584.6 430.5,586.1 432.9,589.9 434.4,594.3 434.7,594.4 435.8,594.5 438.3,595.4 441.3,596.8 443.3,597.8 445.2,597.6 446.9,595.8 448.8,594.0" fill="#d7dae5"/>
<polygon points="586.5,685.2 584.6,686.2 582.3,687.8 581.3,690.0 581.9,692.7 583.7,695.6 584.2,699.4 583.9,700.9 585.6,702.0 588.6,705.1 592.9,707.9 596.0,706.3 597.8,703.5 600.8,700.1 604.7,696.9 606.3,694.7 605.2,691.4 603.1,690.1 600.8,689.6 599.1,687.5 598.3,685.4 595.5,686.6 591.2,687.3 587.8,686.7 586.5,685.2" fill="#c8d2df"/>
<polygon points="578.0,709.1 575.7,709.8 572.4,710.1 570.2,709.8 569.0,709.3 565.9,709.2 564.9,711.8 566.3,711.7 568.8,712.9 569.6,716.5 569.6,719.9 570.0,721.5 571.9,723.4 573.9,725.5 575.4,722.9 579.3,719.7 580.3,717.2 580.7,715.5 579.8,712.9 578.0,709.1" fill="#b3c7da"/>
<polygon points="402.9,470.9 401.6,468.3 401.3,464.0 401.1,460.8 400.1,458.9 398.1,455.8 395.9,452.1 394.4,450.4 392.9,450.5 389.5,451.4 387.5,453.9 387.4,456.7 389.1,458.9 389.3,461.7 387.8,465.5 385.7,468.5 384.4,469.6 386.9,469.0 389.4,469.3 391.6,470.4 393.7,471.7 396.4,472.6 399.1,473.2 402.2,473.3 403.6,472.5 402.9,470.9" fill="#d7dae5"/>
<polygon points="548.7,539.3 551.3,543.3 553.7,545.2 555.1,547.9 555.5,551.3 555.8,552.7 556.9,553.3 559.1,551.5 562.8,549.6 565.1,547.6 566.9,545.9 570.1,544.4 572.7,543.4 572.9,542.5 573.5,541.6 570.9,539.4 569.1,535.6 567.6,533.3 565.9,532.3 563.5,530.6 560.7,529.2 558.0,529.6 556.0,530.8 554.5,532.2 552.2,534.2 549.7,536.7 548.7,539.3" fill="#b3c7da"/>
<polygon points="472.7,497.2 475.4,499.5 477.6,503.1 479.2,505.3 480.6,505.2 482.0,502.7 485.3,500.5 488.0,499.5 489.6,499.8 490.2,497.9 492.6,497.4 495.2,496.6 496.2,494.4 495.1,491.1 492.7,488.6 490.1,487.3 487.2,486.5 484.6,485.2 482.9,484.3 481.6,484.6 479.6,486.0 477.8,487.7 477.1,489.4 477.8,491.4 478.2,493.4 476.2,495.3 472.7,497.2" fill="#b3c7da"/>
<polygon points="497.1,411.7 498.8,409.0 498.4,407.9 496.4,405.3 494.7,401.8 494.8,399.3 492.5,398.7 489.7,398.1 485.0,398.0 481.4,398.5 480.6,401.3 479.8,403.8 478.4,406.0 477.8,408.1 479.1,410.5 479.7,414.3 480.2,416.9 484.4,414.4 488.9,411.7 491.0,410.4 493.3,410.7 497.1,411.7" fill="#9dbbd4"/>
<polygon points="428.8,478.7 426.6,475.6 423.3,472.1 420.2,470.5 418.6,467.6 418.7,463.4 419.3,461.4 415.2,461.0 412.2,461.9 410.3,464.5 406.2,467.9 402.9,470.9 403.6,472.5 406.3,474.1 408.6,476.5 409.9,477.7 410.3,477.5 410.2,478.6 410.4,481.3 414.7,481.6 417.7,482.5 420.2,482.6 424.9,481.4 428.8,478.7" fill="#d7dae5"/>
<polygon points="420.1,550.6 421.1,548.6 421.7,545.2 422.0,541.4 418.5,538.9 415.3,537.4 413.3,536.8 411.8,536.6 408.9,537.2 406.2,538.4 405.1,539.6 403.4,540.0 399.6,539.8 401.6,542.5 402.7,546.3 402.2,548.3 404.5,548.5 407.1,548.0 408.6,547.7 409.7,548.2 412.2,549.1 410.1,550.4 409.9,551.3 410.8,550.6 413.5,550.6 417.3,550.7 420.1,550.6" fill="#9dbbd4"/>
<polygon points="469.6,351.1 466.3,351.9 463.4,353.0 461.6,353.7 458.4,353.7 453.8,353.4 454.4,355.3 454.7,357.7 453.1,360.4 450.2,362.5 448.6,364.2 453.3,364.2 456.7,365.9 458.2,368.0 460.6,369.0 464.0,368.4 465.9,367.1 465.8,365.8 467.7,364.0 470.9,361.5 473.5,358.7 473.0,354.9 471.7,353.3 469.6,351.1" fill="#c8d2df"/>
<polygon points="713.6,204.5 714.7,207.0 715.4,208.6 716.5,209.2 718.4,211.8 721.1,215.6 723.6,218.0 725.0,220.6 725.2,225.2 724.9,228.8 728.2,225.8 729.3,222.2 729.5,218.8 730.5,216.1 731.4,214.1 730.9,213.2 731.8,210.3 732.8,206.2 732.6,203.5 731.0,201.3 729.1,197.7 727.2,196.3 725.7,195.6 724.3,194.9 722.0,195.5 719.1,196.4 717.8,198.0 718.0,199.9 716.6,202.2 713.6,204.5" fill="#d7dae5"/>
<polygon points="684.1,295.7 685.8,298.4 688.0,301.1 690.3,301.9 692.8,301.5 695.3,301.8 697.3,300.6 701.0,300.6 704.5,301.6 706.2,302.7 707.7,303.2 708.8,301.2 710.7,298.5 712.2,295.2 714.2,291.8 716.8,288.6 715.5,286.2 713.3,282.2 711.6,279.9 708.1,280.5 705.1,279.4 703.2,276.4 702.5,273.7 702.1,272.4 701.1,271.2 697.5,271.8 694.7,273.3 692.8,274.5 689.3,277.9 685.2,280.8 683.5,282.7 682.7,283.6 680.9,283.9 683.4,284.9 685.0,287.7 685.3,291.3 684.7,293.5 684.1,295.7" fill="#d7dae5"/>
<polygon points="478.8,630.0 480.1,631.4 481.5,632.7 484.2,632.9 488.0,632.2 491.0,631.8 492.4,630.9 492.7,628.9 492.7,625.4 492.9,621.5 493.3,618.8 493.9,617.7 494.0,615.9 493.0,613.1 491.8,610.4 490.3,609.3 487.3,610.3 484.4,612.1 483.4,614.0 481.4,615.0 477.3,617.1 474.5,618.9 473.5,620.3 474.7,623.3 476.5,626.9 478.1,628.9 478.8,630.0" fill="#9dbbd4"/>
<polygon points="501.0,483.6 502.9,481.8 506.3,480.9 510.4,481.4 512.4,482.9 514.0,484.3 517.4,484.8 520.3,483.7 521.4,481.6 522.3,479.0 522.3,475.0 520.8,474.1 519.1,473.8 517.0,472.0 514.4,468.5 511.6,465.5 507.5,465.7 504.7,466.9 503.3,469.1 500.9,471.7 497.9,473.8 499.6,475.2 500.8,477.7 500.9,480.6 500.5,482.0 501.0,483.6" fill="#c8d2df"/>
<polygon points="497.4,590.9 496.0,592.8 494.7,593.6 494.6,594.2 493.2,595.1 489.4,596.9 486.5,599.5 486.1,602.2 487.1,606.0 488.9,608.5 490.3,609.3 491.8,610.4 493.0,613.1 494.0,615.9 497.0,616.2 501.4,615.5 503.5,613.5 504.2,610.3 506.7,606.7 508.5,603.7 508.8,602.0 508.8,598.7 510.1,597.5 511.3,596.2 511.3,593.2 507.8,590.9 504.1,590.5 500.8,590.4 498.9,591.2 497.4,590.9" fill="#c8d2df"/>
<polygon points="472.2,533.3 470.4,531.2 468.6,530.9 467.0,530.6 465.9,529.6 464.4,530.4 461.5,530.5 457.0,529.8 453.9,529.2 452.9,531.3 451.9,534.6 451.0,538.1 454.3,540.7 457.2,542.3 458.8,545.2 459.3,549.0 461.3,549.6 462.3,548.8 465.3,546.7 468.7,544.1 470.5,542.1 472.7,541.2 472.5,539.5 472.1,537.8 471.9,535.6 472.2,533.3" fill="#9dbbd4"/>
<polygon points="512.0,575.1 509.2,573.0 507.1,569.6 506.3,567.2 506.7,566.0 503.3,567.7 501.4,569.5 500.2,570.5 497.4,570.3 493.7,569.2 493.3,571.1 494.5,572.7 495.5,574.2 495.0,576.2 492.8,579.2 493.9,583.5 494.6,586.3 495.6,588.0 497.4,590.9 498.9,591.2 500.8,590.4 502.2,586.7 505.1,582.5 507.4,578.7 508.8,576.3 510.4,575.3 512.0,575.1" fill="#b3c7da"/>
<polygon points="512.2,344.5 510.1,342.9 508.6,340.2 507.3,337.6 505.7,337.6 503.3,337.7 501.3,339.3 499.1,340.0 498.4,340.2 496.5,340.3 492.5,341.0 489.3,342.5 489.0,344.7 490.3,346.6 492.2,350.8 494.6,354.1 497.4,355.6 500.2,357.5 502.6,360.0 504.3,358.5 505.2,356.8 507.2,355.2 508.6,351.4 509.0,347.8 509.3,345.4 512.2,344.5" fill="#9dbbd4"/>
<polygon points="479.3,361.5 476.5,361.2 474.9,360.0 473.5,358.7 470.9,361.5 467.7,364.0 465.8,365.8 465.9,367.1 468.1,367.7 470.4,370.4 471.6,373.7 473.9,374.6 476.0,376.4 478.9,379.3 481.6,381.3 484.1,378.0 485.0,375.0 485.0,372.6 485.3,370.2 485.9,366.4 484.3,364.5 482.7,362.9 481.1,362.3 479.3,361.5" fill="#b3c7da"/>
<polygon points="535.7,387.1 534.5,384.8 534.3,381.1 532.5,378.2 530.1,376.7 526.5,376.8 524.3,377.9 521.5,379.6 517.4,381.2 514.5,382.0 513.9,385.2 514.1,387.5 516.6,389.1 519.6,391.3 521.9,394.3 523.0,395.0 523.3,395.4 523.7,397.8 524.5,398.1 525.4,398.5 527.7,397.1 531.1,395.4 533.2,393.4 533.8,391.2 534.6,389.1 535.7,387.1" fill="#c8d2df"/>
<polygon points="455.6,472.7 454.8,473.5 451.8,474.2 449.3,475.3 447.9,477.1 444.2,479.4 442.8,480.8 442.1,483.6 442.8,487.7 447.3,488.1 452.0,487.7 455.6,489.5 457.6,493.2 458.5,495.9 460.4,495.1 461.4,492.3 461.3,488.8 460.6,485.5 460.8,483.5 462.6,482.4 465.5,480.6 467.4,477.2 464.9,476.0 461.7,475.1 458.5,474.4 455.6,472.7" fill="#d7dae5"/>
<polygon points="578.6,474.6 578.8,474.8 581.2,474.1 582.7,474.6 584.8,476.0 588.2,477.3 591.9,478.5 594.3,480.2 595.3,482.0 596.4,482.5 598.6,481.5 601.2,480.9 602.5,479.8 603.9,477.7 603.8,473.9 602.4,471.2 601.3,468.5 602.0,464.0 600.6,461.5 599.1,461.3 596.5,463.6 593.7,464.8 589.3,464.6 585.9,463.6 584.4,463.0 581.9,463.4 578.5,464.8 576.9,467.6 577.2,470.5 578.4,472.8 578.6,474.6" fill="#d7dae5"/>
<polygon points="687.3,682.6 690.9,682.6 692.1,681.4 693.9,679.0 692.0,677.5 690.1,674.8 689.0,670.9 688.9,668.2 692.0,667.0 693.9,665.6 693.7,665.4 693.0,664.9 690.2,664.4 685.8,662.1 682.3,659.8 681.0,659.0 680.0,661.6 676.7,665.8 673.6,670.4 673.0,674.0 673.7,676.0 676.0,675.5 678.4,677.0 681.2,679.3 684.4,680.8 687.3,682.6" fill="#9dbbd4"/>
<polygon points="626.6,248.1 628.0,250.1 630.2,253.4 632.9,256.3 635.8,256.7 638.4,257.1 640.5,259.4 642.2,261.3 643.9,261.3 644.9,261.7 647.3,260.0 650.6,257.3 652.1,254.1 651.1,251.1 650.7,249.1 652.9,247.7 655.8,245.7 657.5,242.2 656.4,242.0 653.7,241.0 649.6,239.9 645.9,238.9 643.5,237.4 641.5,235.8 640.4,237.1 638.5,238.5 636.2,240.5 635.0,242.4 632.9,243.8 629.2,245.0 627.0,243.8 626.5,246.3 626.6,248.1" fill="#c8d2df"/>
<polygon points="657.0,295.7 654.4,294.9 651.9,294.1 649.9,293.6 648.1,292.3 645.9,289.7 642.6,288.7 639.8,288.6 638.7,289.4 637.3,290.7 634.5,294.2 631.8,298.1 630.7,301.3 632.5,302.8 634.9,305.5 636.6,308.5 637.2,309.0 637.5,310.3 638.7,313.5 641.3,315.2 644.0,315.2 647.4,316.1 648.9,317.1 649.7,317.3 652.5,316.5 655.5,315.4 657.0,314.5 659.3,314.4 659.4,309.6 660.2,306.1 660.3,304.1 659.1,300.8 657.5,297.7 656.6,297.1 657.0,295.7" fill="#c8d2df"/>
<polygon points="681.5,458.9 681.8,461.3 681.4,463.7 681.3,467.7 683.8,470.2 686.8,471.5 688.9,471.4 690.4,471.0 692.8,471.3 696.8,471.8 701.4,472.4 704.7,473.2 705.1,472.3 707.1,470.9 709.8,469.0 710.2,467.1 711.3,464.6 713.0,461.4 714.3,458.7 714.3,456.4 713.4,453.1 711.5,451.9 709.8,450.2 705.6,450.5 701.9,450.3 700.3,449.6 698.9,448.7 696.2,448.1 693.6,448.1 692.2,448.9 690.3,449.6 686.5,449.3 683.3,449.7 682.7,450.3 683.6,452.2 683.3,455.4 681.5,458.9" fill="#d7dae5"/>
<polygon points="528.4,350.4 529.2,353.1 529.2,354.7 528.2,356.8 528.9,360.2 529.9,364.1 534.5,365.0 537.7,364.5 539.5,363.1 542.0,362.0 545.3,362.3 547.1,358.9 548.5,357.6 548.3,356.2 547.0,352.5 544.1,351.0 541.4,351.7 537.9,352.8 533.6,352.0 530.3,349.2 529.1,350.0 528.4,350.4" fill="#d7dae5"/>
<polygon points="673.0,561.1 672.7,564.0 671.1,566.0 669.4,567.4 668.6,570.0 669.1,573.9 672.3,575.3 676.0,575.1 679.6,575.2 681.0,574.7 680.9,572.1 680.5,570.2 681.7,569.2 679.9,567.3 679.1,564.1 678.9,561.6 678.3,561.1 677.0,559.9 675.1,557.3 675.1,556.3 673.6,558.3 673.6,560.0 673.0,561.1" fill="#c8d2df"/>
<polygon points="723.8,627.0 726.0,628.0 728.8,629.7 731.9,631.6 735.2,630.0 737.4,628.4 738.6,627.3 735.9,623.0 733.3,618.7 732.3,616.9 730.5,616.8 729.9,615.6 729.8,614.4 729.1,614.1 726.6,615.8 723.8,619.5 722.8,624.0 723.8,627.0" fill="#b3c7da"/>
<polygon points="628.2,459.4 628.8,463.0 628.5,467.5 628.7,469.5 630.2,471.2 632.4,474.7 633.8,477.1 634.9,475.5 638.1,473.6 641.3,472.3 642.7,471.9 645.4,472.3 649.3,472.6 651.2,472.0 652.7,470.1 654.0,466.2 656.8,463.6 658.9,461.6 659.6,459.1 659.9,456.0 656.8,454.1 653.7,453.7 651.6,451.6 650.6,448.3 650.4,446.5 650.0,444.6 649.2,443.5 648.6,441.8 646.2,443.2 642.3,445.0 640.3,447.1 637.5,449.4 633.3,451.6 631.5,453.3 630.3,454.5 627.2,455.6 627.8,457.7 628.2,459.4" fill="#d7dae5"/>
<polygon points="696.0,399.2 698.4,402.7 701.6,405.9 704.5,407.6 706.5,410.7 707.4,414.5 707.7,415.8 708.2,416.5 709.5,418.8 711.7,420.2 713.6,418.1 715.0,416.3 716.1,414.5 719.2,412.5 723.3,410.3 725.0,408.1 725.7,406.1 727.6,404.5 726.3,403.7 723.3,402.1 721.4,398.7 720.6,396.3 720.3,395.0 719.9,392.6 718.6,390.1 716.1,389.8 712.8,391.6 709.0,392.8 706.8,392.9 705.4,391.9 702.6,390.7 700.0,392.4 697.7,394.2 696.6,396.4 696.0,399.2" fill="#d7dae5"/>
<polygon points="543.5,271.2 543.0,269.3 541.3,266.2 540.1,263.6 540.3,262.8 541.5,260.8 542.2,256.7 541.4,253.4 539.7,251.2 538.7,247.6 535.0,248.0 532.7,247.4 529.3,246.6 524.9,246.6 522.6,248.0 521.3,250.0 521.9,251.9 522.2,253.6 521.4,256.5 520.0,259.5 518.9,261.6 519.1,264.2 520.2,268.4 523.2,270.8 526.0,271.6 528.0,272.0 530.1,272.1 533.0,274.2 536.3,276.4 537.8,276.8 539.0,275.3 541.0,273.2 543.5,271.2" fill="#d7dae5"/>
<polygon points="556.6,343.4 559.0,342.8 559.1,341.2 559.4,338.7 561.1,335.4 562.3,332.0 562.3,327.2 563.7,324.6 565.5,323.0 564.3,321.6 562.7,320.2 560.6,320.0 559.0,321.4 555.3,321.9 552.0,321.9 550.4,322.0 547.4,322.9 543.5,324.8 542.8,326.6 542.3,328.8 543.0,332.3 545.2,334.5 547.9,335.3 550.9,337.2 554.0,340.9 556.6,343.4" fill="#c8d2df"/>
<polygon points="670.2,510.3 672.5,511.1 675.7,510.2 678.9,509.6 680.1,507.1 680.6,504.9 682.9,503.4 684.7,502.6 685.8,502.0 689.3,501.0 693.8,499.2 691.2,497.1 687.8,495.0 684.4,493.6 682.7,493.0 681.6,492.6 678.8,493.0 676.0,494.1 674.8,495.4 673.0,496.3 670.8,500.2 668.9,502.8 668.8,506.0 670.2,510.3" fill="#d7dae5"/>
<polygon points="455.1,315.5 453.2,313.2 451.6,311.7 448.8,311.6 444.9,312.7 442.4,314.5 441.8,316.5 441.1,318.7 439.0,320.8 441.1,324.7 442.3,328.2 442.6,329.7 442.6,330.9 443.2,333.4 447.4,333.2 449.9,332.5 451.0,332.5 453.6,333.9 457.6,335.9 458.8,335.0 459.5,333.6 459.9,330.6 459.9,328.3 460.3,326.4 459.8,322.6 458.2,319.9 456.2,318.7 455.1,315.5" fill="#d7dae5"/>
<polygon points="711.8,425.4 710.9,428.5 708.7,433.0 707.0,436.3 707.1,437.6 708.8,439.4 710.5,442.5 711.0,445.0 710.4,446.8 709.8,450.2 711.5,451.9 713.4,453.1 715.0,450.9 718.0,449.7 721.3,449.6 722.6,450.2 724.1,450.4 726.2,449.4 728.6,448.4 730.6,447.5 731.2,444.9 730.2,440.5 728.6,436.9 728.4,434.4 730.2,431.3 728.2,429.4 726.4,427.8 724.7,426.5 722.4,423.8 719.1,420.5 715.2,419.4 711.8,420.2 711.8,422.6 711.8,425.4" fill="#b3c7da"/>
<polygon points="585.2,294.8 586.2,291.5 587.3,290.0 587.8,288.4 585.7,284.9 583.9,282.9 581.9,283.3 579.1,283.2 575.7,281.6 572.4,280.3 569.8,280.5 569.0,280.6 567.1,281.2 564.9,282.9 564.3,285.5 565.1,289.6 564.3,292.7 562.1,294.3 560.2,295.5 564.2,296.4 567.8,299.0 570.2,301.3 572.3,302.5 575.1,303.6 578.3,304.9 579.5,302.4 579.5,299.5 581.9,296.8 585.2,294.8" fill="#b3c7da"/>
<polygon points="579.1,382.1 579.9,381.2 580.3,379.3 581.6,376.4 582.6,374.1 582.1,373.1 580.3,371.2 578.4,367.2 575.8,367.8 572.4,368.5 570.2,368.5 569.2,367.2 567.0,365.2 565.9,367.5 565.8,368.4 566.6,369.6 566.8,372.4 565.3,376.6 562.6,380.7 564.9,379.7 565.8,379.7 567.1,381.0 570.3,382.8 574.1,384.1 576.8,383.7 579.1,382.1" fill="#b3c7da"/>
<polygon points="738.8,472.8 742.3,474.1 743.0,473.9 742.7,472.6 744.5,470.4 747.6,467.4 749.5,464.4 751.7,462.0 755.7,460.4 757.4,457.9 757.1,455.4 755.4,453.5 754.4,451.5 755.4,448.6 753.8,445.2 753.5,443.5 752.5,445.7 749.7,448.2 746.0,449.7 743.6,449.5 741.1,448.1 736.8,446.7 732.8,446.3 730.9,447.1 728.6,448.4 726.2,449.4 724.1,450.4 725.6,453.3 728.1,456.0 730.9,457.0 732.9,459.2 733.7,462.8 734.1,464.8 734.9,466.2 736.6,469.5 738.8,472.8" fill="#b3c7da"/>
<polygon points="493.7,569.2 492.5,565.8 491.6,564.2 490.4,562.5 488.7,562.4 486.2,563.0 482.7,563.8 480.3,564.4 478.8,567.4 477.3,570.4 475.5,573.0 474.7,574.9 475.4,576.4 476.9,579.2 478.3,582.4 481.7,582.6 485.6,581.3 488.2,579.5 490.1,578.6 492.8,579.2 495.0,576.2 495.5,574.2 494.5,572.7 493.3,571.1 493.7,569.2" fill="#d7dae5"/>
<polygon points="581.7,443.0 584.2,441.8 586.3,440.6 585.0,437.7 582.7,435.1 581.6,431.1 582.5,426.8 584.4,424.7 585.3,423.6 584.4,421.0 581.9,419.0 579.6,418.0 576.4,420.2 575.5,421.9 574.8,422.4 571.8,422.3 570.2,422.3 570.3,424.6 568.9,428.3 566.9,432.2 565.5,434.7 565.3,435.8 566.1,437.1 569.0,439.9 572.9,443.0 575.9,444.2 578.3,443.6 581.7,443.0" fill="#d7dae5"/>
<polygon points="498.8,417.2 497.9,420.4 496.5,423.6 496.1,426.2 495.6,427.9 492.4,428.8 488.5,429.7 487.2,431.3 488.7,433.7 491.4,438.3 494.1,439.6 498.9,439.9 502.3,438.5 504.3,436.2 507.7,434.8 508.9,433.9 509.5,433.4 509.0,432.5 509.9,430.2 511.4,425.9 512.1,422.2 511.5,419.6 510.4,416.4 510.4,416.3 506.8,415.0 502.9,414.8 500.3,415.7 498.8,417.2" fill="#d7dae5"/>
<polygon points="528.1,422.1 528.7,424.7 528.4,429.1 530.1,431.2 532.3,432.5 535.2,433.9 537.9,435.8 539.9,436.7 540.0,433.7 541.8,431.3 545.4,430.1 547.8,429.7 548.9,426.6 549.3,424.1 548.9,421.9 546.4,420.3 544.8,418.6 543.5,417.7 541.7,418.1 538.9,420.8 536.4,422.5 535.6,423.0 534.0,422.5 530.6,422.0 528.1,422.1" fill="#c8d2df"/>
<polygon points="537.4,465.2 534.9,465.3 533.6,463.8 532.7,460.6 531.3,460.6 529.2,460.7 526.1,463.4 524.3,465.5 523.9,467.0 523.6,468.6 522.9,471.2 522.3,475.0 522.3,479.0 524.2,478.2 527.4,477.5 530.3,477.4 532.3,478.3 534.3,480.0 538.1,478.2 541.5,476.3 542.5,474.4 543.1,472.5 540.8,472.2 538.7,470.9 537.6,467.7 537.4,465.2" fill="#d7dae5"/>
<polygon points="499.0,691.1 499.9,690.6 502.5,690.0 505.5,690.5 508.6,692.4 511.3,694.4 513.4,695.1 516.7,696.0 520.8,696.2 522.5,696.1 523.4,696.0 522.4,694.4 521.5,693.1 521.3,691.4 518.6,692.6 516.5,692.1 512.8,690.1 508.2,688.1 505.4,687.4 503.8,688.1 501.0,689.3 499.0,691.1" fill="#c8d2df"/>
<polygon points="450.8,399.6 451.8,397.4 455.2,395.4 458.3,393.2 458.8,390.8 458.0,388.6 457.5,388.0 455.2,386.5 453.8,384.8 452.6,381.8 450.9,379.3 448.6,379.1 444.6,380.9 442.7,382.5 440.3,383.7 436.7,384.4 434.9,385.0 437.1,387.7 438.7,391.8 438.8,395.4 440.0,397.4 440.8,399.0 441.6,401.8 442.8,403.7 444.4,403.6 446.6,401.6 449.6,400.1 450.8,399.6" fill="#b3c7da"/>
<polygon points="418.8,388.3 420.2,388.4 422.9,387.6 424.0,385.5 424.6,382.5 427.4,379.3 428.1,377.8 429.1,377.0 429.5,375.1 428.8,372.7 426.6,374.4 424.5,376.2 423.1,378.0 421.3,381.9 418.9,384.8 417.6,386.5 418.5,388.0 418.8,388.3" fill="#b3c7da"/>
<polygon points="600.2,373.4 603.4,372.4 605.9,373.5 607.8,376.2 610.7,378.4 614.5,378.8 617.3,376.4 617.5,374.0 616.8,371.1 617.4,368.0 619.0,365.1 620.5,362.3 619.2,362.2 616.9,360.2 613.9,358.2 610.6,357.1 607.5,354.0 606.9,353.8 606.3,354.1 603.9,355.1 601.2,356.6 600.7,360.4 599.1,363.0 596.6,364.6 594.7,366.8 596.7,369.5 598.7,372.3 600.2,373.4" fill="#b3c7da"/>
<polygon points="438.4,561.3 436.2,560.5 434.5,559.6 431.1,559.3 428.4,560.0 427.5,561.2 425.7,564.5 422.2,567.9 419.5,570.8 420.3,572.4 422.5,575.3 425.5,578.1 428.0,578.6 429.6,579.6 430.3,579.8 434.6,579.3 437.2,579.6 438.9,580.3 441.8,580.6 444.8,579.9 443.6,575.4 441.5,572.0 440.0,570.4 439.8,568.1 440.2,564.8 439.9,562.8 438.4,561.3" fill="#c8d2df"/>
<polygon points="596.4,559.0 593.4,560.7 591.9,561.3 591.3,560.9 588.6,560.4 585.5,560.4 583.9,561.3 581.4,562.8 581.6,564.9 581.8,567.3 582.8,568.2 584.7,570.4 586.8,574.7 588.3,575.9 590.5,576.8 594.4,576.8 598.5,576.1 598.8,573.4 599.3,571.4 602.0,569.9 604.1,568.5 603.9,566.0 603.9,562.3 603.2,559.6 601.3,559.9 599.1,560.0 596.4,559.0" fill="#c8d2df"/>
<polygon points="615.9,204.0 614.0,204.7 612.4,205.6 610.6,207.1 609.2,209.3 606.1,209.8 601.6,211.2 599.4,213.7 598.3,216.7 595.5,219.4 595.3,219.4 598.4,220.7 600.8,220.9 605.0,219.7 606.9,219.5 609.2,219.9 612.8,220.2 612.3,217.2 611.4,214.9 611.0,213.2 612.5,212.3 615.1,211.1 616.3,210.2 617.3,208.0 617.2,205.4 615.9,204.0" fill="#c8d2df"/>
<polygon points="537.7,407.0 539.8,408.0 540.8,410.0 540.8,413.7 540.8,416.6 541.7,418.1 543.5,417.7 544.8,418.6 546.4,420.3 548.9,421.9 551.3,420.6 551.8,419.2 553.9,417.3 556.3,414.1 558.9,411.1 557.7,410.7 555.6,408.8 552.7,404.7 549.9,401.7 547.5,399.5 545.2,400.6 544.1,402.1 541.3,403.9 538.5,405.6 537.7,407.0" fill="#d7dae5"/>
<polygon points="546.4,678.7 549.3,680.0 552.2,683.8 554.5,686.9 555.7,687.8 557.3,686.3 559.1,683.9 562.3,680.9 564.7,678.1 565.1,676.0 563.1,673.8 561.3,670.7 560.5,669.3 560.9,669.0 561.5,666.9 560.1,666.7 557.7,666.1 553.9,665.4 550.4,665.5 548.4,666.3 546.7,668.4 544.5,671.7 543.3,675.4 545.0,677.5 546.4,678.7" fill="#9dbbd4"/>
<polygon points="615.1,211.1 618.0,209.6 619.6,208.2 620.8,207.0 620.9,206.8 620.3,205.2 618.7,203.3 616.3,202.7 615.9,204.0 617.2,205.4 617.3,208.0 616.3,210.2 615.1,211.1" fill="#d7dae5"/>
<polygon points="534.2,310.5 535.0,311.2 538.2,310.8 542.8,309.3 545.0,307.3 546.6,305.3 549.8,303.9 551.4,303.1 551.8,302.4 554.6,301.3 551.4,299.9 549.2,298.3 548.1,294.9 547.7,291.6 547.3,290.6 546.2,290.5 543.9,289.1 540.6,287.8 537.5,289.6 535.5,291.3 533.6,293.1 529.8,294.9 526.4,296.7 527.3,300.5 529.8,302.2 532.4,305.0 534.0,308.6 534.2,310.5" fill="#b3c7da"/>
<polygon points="659.0,640.9 657.4,643.1 655.6,645.1 654.8,647.0 652.5,648.9 648.2,650.8 645.3,652.7 646.0,656.6 647.8,658.8 649.9,661.7 651.4,663.3 654.5,663.5 657.9,662.1 660.2,660.6 660.3,658.1 662.2,656.1 663.8,654.7 664.9,653.6 663.9,649.6 663.4,647.4 662.7,645.9 661.3,642.9 659.0,640.9" fill="#9dbbd4"/>
<polygon points="619.6,669.5 617.6,669.7 614.8,669.5 612.7,668.8 611.1,668.0 608.6,666.9 605.1,666.9 601.9,667.1 600.5,668.1 602.2,670.5 604.6,674.3 606.8,677.4 609.0,678.2 610.7,679.9 612.7,682.6 614.8,684.5 616.4,684.5 617.4,683.3 619.0,681.0 622.1,679.6 626.0,679.1 626.1,679.0 625.1,677.6 622.9,675.4 620.5,672.1 619.3,670.8 619.6,669.5" fill="#b3c7da"/>
<polygon points="459.9,330.6 459.5,333.6 462.1,336.6 465.5,337.4 468.7,338.2 470.8,341.0 471.6,343.2 475.0,343.4 477.2,343.8 478.2,343.8 480.7,342.8 484.5,341.0 486.9,339.1 485.3,336.1 482.9,334.8 481.1,332.5 481.0,329.6 482.2,328.5 483.6,327.4 483.6,324.0 481.3,325.6 479.8,325.5 475.6,324.5 471.4,324.0 468.8,325.0 464.2,327.5 459.9,330.6" fill="#b3c7da"/>
<polygon points="491.4,438.3 492.7,441.9 491.8,443.9 488.9,445.3 490.9,448.1 493.4,451.5 496.1,453.2 498.7,454.4 500.9,456.8 501.5,456.2 503.4,455.2 506.0,454.2 507.1,453.7 508.1,453.8 507.0,450.2 507.4,445.9 508.7,443.4 509.5,441.2 509.2,437.8 507.7,434.8 504.3,436.2 502.3,438.5 498.9,439.9 494.1,439.6 491.4,438.3" fill="#d7dae5"/>
<polygon points="642.2,261.3 638.3,262.8 635.9,264.4 635.7,266.2 634.6,268.5 632.2,271.0 630.7,273.4 629.1,275.4 625.2,277.0 621.3,278.1 623.1,281.1 626.4,282.7 630.4,285.7 634.1,289.1 636.4,289.9 637.3,290.7 638.7,289.4 639.8,288.6 642.6,288.7 645.9,289.7 646.0,287.5 644.8,285.2 645.0,283.0 647.2,280.8 649.7,278.2 651.1,275.3 652.3,272.5 653.4,270.3 649.8,270.3 647.0,268.3 645.5,264.2 644.9,261.7 643.9,261.3 642.2,261.3" fill="#d7dae5"/>
<polygon points="702.6,390.7 705.4,391.9 706.8,392.9 709.0,392.8 712.8,391.6 716.1,389.8 715.3,387.6 714.8,384.7 716.5,381.1 719.2,377.8 721.2,375.3 722.7,374.2 724.5,374.0 722.0,372.4 719.0,368.7 716.7,365.0 715.9,363.1 712.6,364.4 711.4,366.2 709.1,367.5 705.7,367.4 703.8,365.9 702.0,364.0 697.9,363.1 694.1,363.9 694.2,366.1 694.3,369.3 692.9,373.1 691.0,376.8 692.7,379.4 693.5,379.8 694.4,381.6 696.1,384.2 698.5,384.9 700.9,386.7 702.6,390.7" fill="#d7dae5"/>
<polygon points="608.0,284.2 610.5,283.5 611.7,282.4 612.1,280.9 614.6,279.1 617.9,277.4 619.7,276.1 620.2,274.6 620.3,273.7 619.2,270.8 617.1,267.6 615.2,266.2 614.1,263.8 612.3,262.0 609.4,259.8 605.7,258.4 602.9,257.2 601.8,255.7 600.9,255.1 598.0,260.0 594.2,264.5 592.9,267.3 593.5,268.4 595.3,269.5 596.5,272.5 596.7,275.4 596.1,276.8 595.8,279.1 596.7,282.8 600.4,282.7 603.1,282.2 605.3,282.4 608.0,284.2" fill="#d7dae5"/>
<polygon points="616.2,516.2 612.6,517.2 610.6,516.2 609.3,517.0 606.3,517.5 603.1,518.2 602.1,519.6 603.5,523.3 603.7,525.5 602.0,526.7 599.7,529.4 598.4,534.1 598.8,538.4 599.9,536.9 601.7,536.3 605.2,537.6 609.1,540.0 612.0,541.9 614.6,542.0 615.0,541.3 614.7,538.2 615.8,534.7 617.4,532.0 618.6,530.2 619.0,527.7 619.0,523.4 618.9,518.5 617.1,516.8 616.2,516.2" fill="#6a9cc9"/>
<polygon points="644.7,613.9 646.7,615.4 647.5,618.2 648.7,620.4 651.9,620.5 656.5,618.2 659.0,615.4 662.1,613.0 664.1,609.2 664.2,605.4 660.9,602.8 658.6,601.8 657.8,599.4 657.9,597.1 658.0,596.8 655.1,598.2 652.7,598.6 651.4,597.6 649.6,595.6 647.5,598.4 644.8,600.7 643.7,602.8 644.8,606.2 646.5,610.3 646.7,613.0 644.7,613.9" fill="#9dbbd4"/>
<polygon points="480.2,416.9 479.7,414.3 479.1,410.5 477.8,408.1 476.4,407.4 474.3,405.6 471.1,403.7 469.4,406.2 468.9,408.9 466.4,411.3 464.0,414.0 461.6,415.6 460.6,416.7 461.2,418.5 462.2,421.7 464.1,424.0 465.4,424.8 466.4,422.1 469.4,419.9 471.9,419.2 473.1,419.7 476.0,420.6 479.9,420.8 479.6,419.2 480.2,416.9" fill="#c8d2df"/>
<polygon points="638.1,563.3 635.2,562.4 632.2,560.3 630.2,559.8 626.5,558.8 623.1,558.1 622.8,558.9 621.0,561.0 617.2,564.7 614.3,569.4 614.1,573.8 614.2,576.8 616.3,577.1 619.0,576.8 621.2,577.6 623.6,579.0 626.7,580.1 629.7,581.3 632.5,581.6 633.7,581.0 636.0,579.2 636.6,575.9 636.0,573.3 635.2,569.8 635.5,566.4 636.9,564.8 638.1,563.3" fill="#9dbbd4"/>
<polygon points="387.4,456.7 387.5,453.9 389.5,451.4 389.5,448.7 390.4,446.3 391.3,445.4 391.0,444.3 389.2,441.1 385.3,440.7 386.1,444.4 385.4,446.9 384.0,447.9 383.5,449.7 384.7,453.6 384.8,457.0 387.4,456.7" fill="#b3c7da"/>
<polygon points="603.3,484.9 605.6,486.3 607.7,487.8 611.4,488.5 615.5,487.9 617.6,486.5 619.1,485.3 621.7,483.8 624.3,482.8 625.6,481.9 628.6,480.7 632.6,479.1 633.8,477.1 632.4,474.7 630.2,471.2 628.7,469.5 628.5,467.5 628.8,463.0 628.2,459.4 626.1,459.7 622.2,460.7 617.8,462.4 615.6,464.2 613.1,465.2 609.1,465.0 606.9,464.0 605.5,463.4 602.0,464.0 601.3,468.5 602.4,471.2 603.8,473.9 603.9,477.7 602.5,479.8 601.2,480.9 601.9,482.4 603.3,484.9" fill="#c8d2df"/>
<polygon points="516.1,184.0 513.3,181.1 510.7,179.1 507.9,178.1 504.8,176.8 501.5,177.4 499.9,178.4 500.7,181.5 502.0,184.0 502.4,186.4 501.3,190.0 499.3,194.2 501.1,195.4 504.0,195.1 507.6,197.0 511.1,199.9 513.0,201.0 514.2,202.0 514.9,201.7 517.4,200.1 518.4,197.2 518.5,194.8 519.5,190.6 519.9,188.0 518.6,186.9 516.1,184.0" fill="#b3c7da"/>
<polygon points="459.9,671.6 463.9,672.9 468.2,673.7 471.7,673.7 474.2,675.0 476.1,678.6 477.8,681.7 480.6,680.6 481.3,679.2 480.6,677.0 481.7,673.9 484.3,670.3 485.9,666.7 485.9,666.2 485.7,665.6 484.2,663.1 481.1,661.2 476.9,659.6 472.6,655.8 469.3,652.0 467.6,650.8 467.3,652.6 466.9,656.1 466.4,660.9 465.9,665.4 464.8,668.1 462.4,669.5 459.9,671.6" fill="#b3c7da"/>
<polygon points="547.9,335.3 545.2,334.5 543.0,332.3 542.3,328.8 542.8,326.6 543.5,324.8 542.1,324.8 541.3,324.3 540.6,323.5 538.9,326.2 535.7,328.0 533.2,328.9 531.8,329.3 529.4,329.8 530.4,332.1 532.2,333.8 534.0,337.6 535.0,342.0 535.1,344.5 538.1,342.8 539.7,340.4 542.9,337.9 546.5,336.0 547.9,335.3" fill="#d7dae5"/>
<polygon points="762.3,390.4 765.6,391.1 767.4,390.5 770.0,388.8 773.9,386.9 776.4,385.4 777.4,384.9 777.2,384.7 775.4,381.4 775.0,377.5 775.3,375.9 775.3,374.8 773.8,371.7 771.4,369.0 769.3,367.5 768.7,364.6 771.1,360.1 772.9,356.5 771.4,357.7 768.9,358.9 766.5,358.5 764.6,356.3 763.8,358.4 760.4,360.4 756.4,362.3 754.3,364.1 752.4,365.7 754.5,366.1 757.1,368.0 759.0,371.6 759.3,373.9 758.4,376.2 757.6,380.8 758.0,385.0 759.8,387.3 762.3,390.4" fill="#c8d2df"/>
<polygon points="517.2,323.7 518.2,326.5 519.0,328.5 519.8,328.8 521.0,329.1 523.0,328.3 525.8,328.5 529.4,329.8 531.8,329.3 533.2,328.9 535.7,328.0 538.9,326.2 540.6,323.5 538.9,320.9 536.6,318.5 535.2,314.3 535.0,311.2 534.2,310.5 530.9,309.8 525.9,310.0 522.8,311.4 520.8,313.9 517.1,316.2 515.7,319.7 516.4,321.5 517.6,322.5 517.2,323.7" fill="#c8d2df"/>
<polygon points="728.5,349.3 732.3,350.7 736.4,352.8 740.0,353.7 742.2,355.5 743.2,359.5 743.5,362.4 744.2,363.2 746.0,364.7 749.0,366.4 752.4,365.7 754.3,364.1 756.4,362.3 760.4,360.4 763.8,358.4 764.6,356.3 762.7,352.6 760.7,351.0 760.4,348.8 758.0,345.0 756.5,342.7 755.5,341.9 754.5,340.3 753.2,338.4 751.1,338.3 747.9,339.8 745.0,339.7 743.3,338.1 739.9,336.2 735.3,335.4 735.2,339.0 734.3,342.8 731.5,346.2 728.5,349.3" fill="#d7dae5"/>
<polygon points="439.2,495.3 436.4,494.1 434.9,492.5 431.6,491.9 429.5,493.7 428.0,496.0 426.8,498.8 426.8,501.1 428.3,505.1 430.2,508.8 430.8,510.1 433.5,509.1 435.4,509.0 439.2,509.4 442.9,509.4 444.5,508.4 446.4,506.5 443.6,503.6 441.4,502.6 440.3,500.0 440.0,496.7 439.2,495.3" fill="#b3c7da"/>
<polygon points="498.8,417.2 500.3,415.7 502.9,414.8 506.8,415.0 510.4,416.3 510.4,413.2 511.3,411.4 512.9,410.7 514.3,409.2 514.4,405.8 510.4,401.7 507.0,399.5 504.7,398.0 503.8,395.2 503.7,393.2 503.7,393.1 502.3,394.9 498.9,397.5 494.8,399.3 494.7,401.8 496.4,405.3 498.4,407.9 498.8,409.0 497.1,411.7 497.3,414.8 497.8,416.8 498.8,417.2" fill="#9dbbd4"/>
<polygon points="671.4,541.1 674.5,543.0 676.7,543.2 677.7,543.7 677.8,545.8 677.4,547.9 678.6,544.9 678.7,541.4 677.4,540.3 674.9,539.7 672.3,537.2 670.5,535.9 669.5,535.5 669.3,536.4 670.1,538.0 671.4,541.1" fill="#c8d2df"/>
<polygon points="558.5,387.6 558.2,387.2 555.9,386.0 553.5,382.5 551.3,379.8 549.1,377.9 547.1,374.4 545.0,376.0 542.9,378.2 538.6,380.1 536.1,381.1 534.3,381.1 534.5,384.8 535.7,387.1 538.3,387.8 540.3,389.1 542.3,390.5 544.6,390.6 547.6,391.0 550.5,393.7 553.7,391.6 554.8,390.2 555.9,389.4 557.8,388.7 558.5,387.6" fill="#b3c7da"/>
<polygon points="619.1,609.6 617.3,608.9 615.4,609.1 614.0,610.2 610.6,610.7 607.3,610.9 605.6,611.3 603.3,612.5 602.2,614.2 602.0,615.2 602.1,617.7 603.5,621.0 606.0,622.4 608.2,625.0 608.8,629.8 607.9,633.2 610.6,633.7 613.0,633.8 614.3,633.5 616.1,630.2 618.7,628.1 620.6,626.7 620.6,625.5 619.5,623.7 617.8,620.3 617.6,616.9 618.4,615.2 619.3,613.1 619.1,609.6" fill="#b3c7da"/>
<polygon points="481.1,523.6 478.6,521.3 476.9,518.8 476.1,517.6 475.0,517.1 473.5,515.5 470.6,513.4 468.1,512.4 466.6,513.1 465.8,517.1 465.8,522.0 466.5,525.0 466.8,526.8 465.9,529.6 467.0,530.6 468.6,530.9 470.4,531.2 472.2,533.3 473.6,533.8 476.0,533.8 479.9,533.0 482.5,529.8 482.4,526.9 481.1,523.6" fill="#c8d2df"/>
<polygon points="546.0,364.2 545.3,362.3 542.0,362.0 539.5,363.1 537.7,364.5 534.5,365.0 529.9,364.1 529.0,366.6 530.1,368.5 532.0,370.8 533.1,373.6 532.3,375.6 530.1,376.7 532.5,378.2 534.3,381.1 536.1,381.1 538.6,380.1 542.9,378.2 545.0,376.0 547.1,374.4 547.2,369.7 546.4,366.8 546.0,364.2" fill="#c8d2df"/>
<polygon points="479.9,533.0 476.0,533.8 473.6,533.8 472.2,533.3 471.9,535.6 472.1,537.8 472.5,539.5 472.7,541.2 474.3,544.3 475.0,548.9 475.3,552.1 479.6,551.9 482.2,550.4 483.3,548.3 486.0,546.8 489.5,546.8 491.3,543.9 492.0,542.4 492.2,541.9 492.6,541.0 489.5,538.0 487.3,535.3 485.9,534.9 484.6,535.6 482.6,535.0 479.9,533.0" fill="#b3c7da"/>
<polygon points="563.2,502.6 563.4,503.9 563.5,505.5 561.5,507.6 561.2,510.8 559.9,513.3 558.9,515.1 559.5,518.4 562.5,518.0 566.8,518.5 569.9,519.6 571.7,520.2 574.6,519.7 578.0,518.4 578.8,517.3 580.0,515.7 580.8,512.7 580.5,509.6 579.5,507.4 576.3,508.8 573.7,508.4 570.4,506.2 566.4,503.8 563.2,502.6" fill="#9dbbd4"/>
<polygon points="533.6,671.3 530.7,672.8 530.1,673.7 528.8,674.4 526.4,675.4 525.4,677.1 526.8,678.1 526.7,680.3 525.7,684.2 524.8,687.8 526.2,687.2 526.9,687.2 528.3,688.3 530.9,690.3 533.6,688.3 535.3,686.3 537.5,684.3 541.8,682.4 545.2,680.5 546.4,678.7 545.0,677.5 543.3,675.4 540.6,674.0 538.7,673.2 537.1,673.5 535.5,673.4 533.6,671.3" fill="#c8d2df"/>
<polygon points="439.6,285.9 440.1,285.3 442.6,283.5 445.3,280.6 447.0,276.8 449.0,272.9 448.2,270.0 445.7,269.3 443.7,271.1 441.6,272.1 437.6,272.2 434.6,272.1 433.2,272.6 431.9,275.8 429.5,277.4 427.7,278.5 427.7,280.8 430.9,281.8 434.8,283.4 437.8,285.0 439.6,285.9" fill="#d7dae5"/>
<polygon points="452.2,507.1 449.5,507.0 446.4,506.5 444.5,508.4 442.9,509.4 439.2,509.4 435.4,509.0 433.5,509.1 430.8,510.1 427.5,511.6 424.5,513.8 424.3,514.2 425.5,516.1 428.0,517.4 431.5,518.0 435.4,520.3 438.9,524.4 440.9,525.0 441.5,525.2 443.1,524.4 445.9,522.9 447.4,521.3 446.1,519.9 447.1,516.8 450.3,512.4 453.1,508.7 452.2,507.1" fill="#b3c7da"/>
<polygon points="471.6,343.2 469.5,344.1 468.6,345.2 468.9,347.7 469.6,351.1 471.7,353.3 473.0,354.9 473.5,358.7 474.9,360.0 476.5,361.2 479.3,361.5 483.0,358.6 483.9,355.5 483.5,352.6 485.0,349.8 487.4,347.2 489.0,344.7 489.3,342.5 488.2,340.9 486.9,339.1 484.5,341.0 480.7,342.8 478.2,343.8 477.2,343.8 475.0,343.4 471.6,343.2" fill="#b3c7da"/>
<polygon points="579.8,230.0 580.5,232.7 582.2,236.1 583.0,238.0 582.2,239.1 580.6,242.4 579.9,246.9 583.4,247.0 586.2,247.6 589.2,249.4 593.1,252.1 597.1,253.6 599.8,253.0 598.5,250.0 598.4,247.0 601.1,243.9 604.1,241.2 604.5,240.2 604.3,239.2 603.1,236.9 602.4,233.0 599.6,229.8 597.6,228.6 596.8,226.4 594.4,227.8 590.3,228.3 586.6,228.1 585.2,227.8 583.1,228.3 579.8,230.0" fill="#c8d2df"/>
<polygon points="684.4,234.9 682.4,231.6 682.0,229.1 683.7,226.6 686.2,223.1 687.2,219.6 686.0,217.9 683.0,216.9 678.8,216.6 676.0,217.1 674.8,218.0 672.8,218.7 669.7,218.6 668.9,220.8 668.5,222.8 666.3,224.4 662.6,225.7 660.0,226.8 659.6,228.3 660.2,229.3 661.1,231.6 661.1,235.6 659.8,239.6 661.9,239.9 663.6,241.3 664.8,244.8 666.9,243.7 671.1,241.9 675.2,239.6 677.1,237.4 679.5,235.8 683.0,235.1 684.4,234.9" fill="#d7dae5"/>
<polygon points="686.5,449.3 690.3,449.6 692.2,448.9 693.6,448.1 696.2,448.1 698.9,448.7 700.3,449.6 701.9,450.3 705.6,450.5 709.8,450.2 710.4,446.8 711.0,445.0 710.5,442.5 708.8,439.4 707.1,437.6 707.0,436.3 708.7,433.0 710.9,428.5 711.8,425.4 708.8,427.0 705.8,427.3 704.3,427.1 701.1,427.1 696.4,427.9 693.4,429.1 690.6,429.7 687.3,432.5 684.8,435.0 685.2,437.0 686.7,439.4 686.4,442.6 686.9,446.8 686.5,449.3" fill="#d7dae5"/>
<polygon points="583.3,626.4 584.4,626.1 586.3,624.2 587.9,622.8 587.9,621.7 589.4,620.8 593.1,619.7 595.5,618.2 597.9,616.4 602.2,614.2 603.3,612.5 600.7,609.9 597.7,608.0 595.0,607.7 593.0,606.1 591.0,606.7 589.8,606.1 586.3,605.1 582.7,604.9 580.8,606.0 582.6,608.4 582.9,611.3 581.6,613.7 579.5,615.6 578.3,618.7 579.0,623.1 581.2,625.6 583.3,626.4" fill="#d7dae5"/>
<polygon points="550.0,574.4 552.4,574.8 555.0,575.5 554.4,574.8 554.2,573.0 556.2,570.0 559.6,566.3 561.9,562.5 562.6,559.3 561.5,558.7 559.4,556.8 557.2,554.2 555.3,554.6 551.2,554.3 547.6,554.0 545.8,554.6 545.9,557.3 544.0,560.3 541.9,563.5 540.3,566.6 538.2,569.4 540.8,569.3 543.9,569.1 547.1,571.5 550.0,574.4" fill="#b3c7da"/>
<polygon points="540.0,548.9 542.7,546.2 543.1,543.1 541.9,540.3 539.9,540.3 538.0,540.0 536.3,537.7 534.9,534.7 533.7,532.9 529.5,533.2 525.8,533.3 524.3,533.8 522.4,535.0 519.4,536.7 519.8,537.8 520.7,539.7 523.1,542.3 525.2,543.9 526.9,544.9 528.4,547.9 530.1,552.1 533.3,551.8 534.8,551.4 536.6,550.4 540.0,548.9" fill="#b3c7da"/>
<polygon points="617.4,683.3 615.4,686.8 612.9,690.6 611.7,693.9 612.5,696.2 613.0,697.6 611.0,698.5 611.7,700.1 612.5,703.5 614.0,706.3 616.6,707.1 618.1,706.7 619.2,703.7 621.6,701.8 625.4,701.3 627.4,701.8 629.3,702.3 633.1,701.9 635.5,699.9 635.2,697.1 633.7,692.6 631.8,689.9 630.3,688.4 629.1,686.5 627.8,682.6 626.0,679.1 622.1,679.6 619.0,681.0 617.4,683.3" fill="#9dbbd4"/>
<polygon points="420.1,550.6 420.5,552.5 421.9,556.1 424.1,558.7 426.4,559.1 427.5,561.2 428.4,560.0 431.1,559.3 434.5,559.6 436.2,560.5 438.4,561.3 439.3,559.9 437.1,555.2 436.5,551.1 437.4,548.7 438.3,545.0 438.0,541.1 436.5,539.6 434.5,538.9 431.0,539.3 428.9,540.4 426.6,541.4 422.0,541.4 421.7,545.2 421.1,548.6 420.1,550.6" fill="#c8d2df"/>
<polygon points="435.6,357.8 435.9,354.3 435.3,352.5 431.8,351.4 428.4,349.0 426.1,346.9 425.2,347.1 425.2,345.7 423.6,346.3 420.9,346.1 418.3,345.2 416.9,346.5 416.3,347.7 417.2,350.1 419.5,351.2 423.4,353.3 428.1,354.8 429.3,356.5 429.0,359.0 428.0,363.3 432.8,360.0 435.6,357.8" fill="#d7dae5"/>
<polygon points="593.6,445.2 594.8,446.2 595.7,447.5 596.5,449.6 597.6,450.7 600.2,448.2 605.1,446.5 609.1,445.7 611.2,445.3 615.1,444.5 618.5,442.9 618.0,442.1 616.3,440.2 614.5,437.3 613.8,434.9 611.7,435.0 609.8,433.1 607.2,429.2 604.3,426.7 602.0,426.5 600.3,428.5 598.5,430.3 595.8,432.4 593.8,435.3 594.3,438.9 595.1,442.5 593.6,445.2" fill="#d7dae5"/>
<polygon points="538.2,569.4 540.3,566.6 541.9,563.5 544.0,560.3 545.9,557.3 545.8,554.6 543.0,552.8 541.2,550.1 540.3,548.8 540.0,548.9 536.6,550.4 534.8,551.4 533.3,551.8 530.1,552.1 528.6,554.5 529.1,555.9 530.5,557.2 530.8,559.4 531.0,562.3 530.5,564.0 530.1,565.7 531.0,567.0 532.1,568.6 534.8,569.5 538.2,569.4" fill="#9dbbd4"/>
<polygon points="468.6,434.9 471.8,438.2 474.2,440.7 474.8,442.0 474.2,445.6 474.0,450.3 475.1,453.1 476.5,454.2 477.7,455.6 477.6,453.9 478.9,451.7 481.8,449.4 483.7,447.4 485.3,446.0 488.9,445.3 491.8,443.9 492.7,441.9 491.4,438.3 488.7,433.7 487.2,431.3 486.7,431.2 486.1,431.1 482.9,433.5 479.7,435.7 478.3,436.6 475.0,436.1 470.7,435.1 468.6,434.9" fill="#c8d2df"/>
<polygon points="512.1,208.7 508.7,209.6 507.1,211.2 506.9,213.3 505.8,215.8 507.7,216.8 509.4,219.3 510.5,221.9 511.0,223.3 511.7,221.6 510.3,217.6 508.8,213.4 509.4,210.8 512.1,208.7" fill="#9dbbd4"/>
<polygon points="514.2,202.0 513.0,201.0 514.3,201.8 515.3,203.1 514.2,202.0" fill="#9dbbd4"/>
<polygon points="696.0,399.2 696.6,396.4 697.7,394.2 700.0,392.4 702.6,390.7 700.9,386.7 698.5,384.9 696.1,384.2 694.4,381.6 693.5,379.8 692.7,379.4 691.0,376.8 688.7,376.7 686.8,375.7 683.6,374.4 680.7,373.8 679.5,374.3 678.3,375.6 675.9,376.8 672.7,378.8 671.0,382.4 671.6,386.8 672.7,390.6 674.5,391.8 675.3,393.7 675.3,396.5 675.5,397.3 677.0,398.1 679.9,401.1 683.2,403.6 685.5,405.2 686.6,405.6 689.3,405.9 691.3,405.5 691.3,403.9 693.1,401.5 696.0,399.2" fill="#d7dae5"/>
<polygon points="621.3,278.1 619.7,276.1 617.9,277.4 614.6,279.1 612.1,280.9 611.7,282.4 610.5,283.5 608.0,284.2 608.9,288.7 609.1,292.0 608.2,293.4 606.8,295.0 606.1,298.0 606.4,300.7 607.0,302.5 606.9,305.4 606.0,309.8 605.9,313.2 606.7,313.7 611.1,312.7 615.3,310.8 617.4,308.2 620.5,305.6 624.2,303.8 625.5,303.1 626.3,303.3 628.9,303.7 630.4,303.1 630.7,301.3 631.8,298.1 634.5,294.2 637.3,290.7 636.4,289.9 634.1,289.1 630.4,285.7 626.4,282.7 623.1,281.1 621.3,278.1" fill="#9dbbd4"/>
<polygon points="613.9,554.7 615.4,551.8 616.5,547.6 616.2,544.3 614.6,542.0 612.0,541.9 609.1,540.0 605.2,537.6 601.7,536.3 599.9,536.9 598.8,538.4 597.6,540.8 595.5,542.7 594.1,543.9 595.9,545.2 596.0,547.3 594.8,550.6 594.0,552.6 594.7,554.6 596.4,559.0 599.1,560.0 601.3,559.9 603.2,559.6 604.6,557.2 607.2,555.9 609.0,555.5 609.1,555.7 610.6,555.6 613.9,554.7" fill="#c8d2df"/>
<polygon points="523.7,397.8 521.3,400.3 517.6,402.9 516.1,404.8 514.4,405.8 514.3,409.2 512.9,410.7 511.3,411.4 510.4,413.2 510.4,416.3 510.4,416.4 512.8,418.3 514.6,419.5 517.4,419.7 520.5,419.3 522.5,419.2 521.6,416.3 523.2,414.2 526.9,412.0 529.4,408.9 529.5,405.1 529.4,401.8 527.0,399.5 525.4,398.5 524.5,398.1 523.7,397.8" fill="#c8d2df"/>
<polygon points="578.5,396.8 579.5,397.1 580.4,397.4 581.8,399.9 584.1,401.5 586.8,402.5 587.8,403.1 588.7,404.0 589.0,402.8 591.1,401.2 593.3,397.9 594.6,393.3 593.6,390.4 592.1,389.0 590.3,387.0 588.7,383.4 587.2,381.0 583.8,380.3 579.9,381.2 579.1,382.1 580.2,384.9 581.5,388.7 581.0,393.2 578.5,396.8" fill="#b3c7da"/>
<polygon points="547.0,699.9 545.7,702.1 545.4,705.3 546.6,707.1 548.8,708.7 551.7,709.6 555.1,710.1 558.1,710.8 561.2,711.6 564.9,711.8 565.9,709.2 563.6,704.8 562.6,701.6 562.6,699.9 562.5,696.8 559.9,695.9 557.0,695.7 554.6,697.1 553.7,697.9 550.8,698.7 547.0,699.9" fill="#c8d2df"/>
<polygon points="589.0,499.6 591.3,500.0 592.9,499.8 596.4,498.5 599.9,496.0 601.2,493.2 601.6,490.5 602.5,487.6 603.3,484.9 601.9,482.4 601.2,480.9 598.6,481.5 596.4,482.5 595.3,482.0 594.3,480.2 591.9,478.5 588.2,477.3 584.8,476.0 582.7,474.6 581.2,474.1 578.8,474.8 577.1,478.0 574.6,482.6 573.0,486.7 573.2,488.8 575.4,489.2 578.4,490.9 581.6,492.3 584.4,492.1 586.4,493.4 587.7,496.8 588.7,499.4 589.0,499.6" fill="#c8d2df"/>
<polygon points="427.4,379.3 429.3,380.4 431.1,382.2 432.8,383.8 434.9,385.0 436.7,384.4 440.3,383.7 442.7,382.5 444.6,380.9 448.6,379.1 450.9,377.4 451.5,373.5 449.9,368.8 447.6,365.7 444.7,366.5 442.0,365.9 439.4,364.0 437.3,362.5 436.2,360.8 435.6,357.8 432.8,360.0 428.0,363.3 427.9,366.6 429.5,368.1 429.9,370.4 428.8,372.7 429.5,375.1 429.1,377.0 428.1,377.8 427.4,379.3" fill="#c8d2df"/>
<polygon points="729.5,636.5 730.9,636.3 733.9,634.2 737.6,632.4 739.8,630.8 739.7,629.1 738.6,627.3 737.4,628.4 735.2,630.0 731.9,631.6 730.8,633.6 729.6,634.5 729.5,636.5" fill="#b3c7da"/>
<polygon points="642.5,667.0 644.5,665.7 647.9,664.7 650.2,663.4 649.9,661.7 647.8,658.8 646.0,656.6 645.3,652.7 643.9,650.2 642.0,648.7 639.3,649.0 636.4,650.0 633.6,652.8 632.3,655.1 631.5,656.9 630.2,658.5 629.3,660.2 632.3,663.3 634.9,664.0 636.8,665.1 638.2,667.8 641.2,667.2 642.5,667.0" fill="#9dbbd4"/>
<polygon points="515.2,530.4 515.8,529.1 515.2,526.6 514.7,523.5 515.0,520.8 512.0,518.9 509.9,515.3 508.7,511.1 507.9,509.2 507.0,508.3 506.2,509.5 504.5,510.9 501.3,511.7 499.4,515.5 497.9,518.4 496.8,520.0 495.8,520.7 497.7,523.2 499.9,526.6 501.5,527.8 502.0,528.9 502.1,532.0 504.5,530.3 507.1,529.4 511.5,529.5 515.2,530.4" fill="#9dbbd4"/>
<polygon points="659.4,588.7 662.6,589.1 664.5,589.8 666.5,589.9 670.4,589.0 671.8,587.2 673.1,585.3 674.8,582.5 677.5,578.9 679.6,575.2 676.0,575.1 672.3,575.3 669.1,573.9 667.6,574.7 666.8,574.4 664.2,573.5 661.7,572.9 660.7,573.3 658.9,574.7 660.4,575.7 660.5,578.5 659.5,580.7 658.4,581.9 658.3,584.5 659.4,588.7" fill="#c8d2df"/>
<polygon points="481.4,398.5 481.0,396.8 481.2,396.4 481.1,395.4 480.3,392.2 478.8,391.9 475.6,391.1 473.1,390.5 471.6,390.6 471.0,393.3 470.0,396.1 469.6,397.9 470.2,400.0 471.1,403.7 474.3,405.6 476.4,407.4 477.8,408.1 478.4,406.0 479.8,403.8 480.6,401.3 481.4,398.5" fill="#b3c7da"/>
<polygon points="507.3,621.0 509.1,623.7 510.6,627.1 510.8,629.7 510.2,631.9 509.4,635.3 509.6,635.6 512.4,636.4 515.2,636.8 519.7,636.1 522.8,634.2 524.2,632.2 527.3,631.0 528.8,629.5 529.2,626.7 528.1,624.3 526.4,623.0 522.8,623.7 518.5,623.5 515.2,622.4 513.2,621.2 511.6,621.3 509.0,621.0 507.3,621.0" fill="#d7dae5"/>
<polygon points="638.6,360.6 639.4,361.6 641.6,365.1 644.6,368.9 647.4,371.2 648.9,371.7 651.8,372.1 654.8,371.6 655.9,370.6 658.1,369.8 662.3,369.9 665.4,370.9 667.7,371.9 671.9,372.0 670.5,370.7 669.8,368.2 670.3,363.7 670.8,359.9 670.2,357.7 668.3,355.2 666.4,351.7 665.9,349.7 664.5,348.9 664.0,347.1 664.1,344.0 664.0,341.4 661.5,341.5 657.2,342.8 654.1,344.6 652.0,346.4 648.7,348.6 646.3,351.4 646.6,354.1 646.3,356.3 643.4,357.8 640.6,359.1 638.6,360.6" fill="#d7dae5"/>
<polygon points="633.1,701.9 629.3,702.3 627.4,701.8 625.4,701.3 621.6,701.8 619.2,703.7 618.1,706.7 620.9,710.0 623.1,713.7 624.4,712.7 625.4,712.2 627.5,712.3 630.2,711.4 630.5,710.2 631.3,708.6 634.4,706.7 634.9,706.3 633.3,706.3 632.9,704.2 633.1,701.9" fill="#b3c7da"/>
<polygon points="411.4,425.0 410.1,423.6 408.1,422.7 405.8,419.9 403.8,416.7 400.3,416.5 397.7,415.9 395.8,414.5 393.6,412.7 392.4,413.3 389.5,417.4 389.1,420.3 390.4,422.1 392.2,423.6 392.5,426.8 391.8,428.9 391.8,430.6 395.1,430.9 396.8,432.8 398.5,435.1 401.3,436.3 404.1,436.0 404.5,434.5 405.6,432.2 408.4,428.9 411.4,425.0" fill="#d7dae5"/>
<polygon points="465.9,367.1 464.0,368.4 460.6,369.0 458.2,368.0 456.7,365.9 453.3,364.2 448.6,364.2 447.6,365.7 449.9,368.8 451.5,373.5 450.9,377.4 448.6,379.1 450.9,379.3 452.6,381.8 453.8,384.8 455.2,386.5 457.5,388.0 458.9,386.9 461.0,385.0 462.2,382.2 464.3,379.0 468.3,376.0 471.6,373.7 470.4,370.4 468.1,367.7 465.9,367.1" fill="#b3c7da"/>
<polygon points="438.9,524.4 438.1,527.5 436.1,529.8 434.3,532.1 433.6,535.0 434.0,537.6 434.5,538.9 436.5,539.6 438.0,541.1 438.7,542.1 440.6,542.7 444.1,542.1 446.2,540.8 447.7,539.2 451.0,538.1 451.9,534.6 452.9,531.3 453.9,529.2 453.3,527.6 452.0,524.9 449.9,522.0 447.4,521.3 445.9,522.9 443.1,524.4 441.5,525.2 440.9,525.0 438.9,524.4" fill="#c8d2df"/>
<polygon points="673.3,606.7 675.1,607.2 677.3,606.9 679.8,609.1 683.2,610.2 685.9,611.8 687.5,612.7 690.1,612.5 690.3,608.6 690.8,603.6 691.6,599.6 693.3,597.2 691.6,597.2 690.0,595.2 688.3,594.5 685.2,593.3 682.6,592.6 681.7,593.2 679.9,595.0 677.5,597.5 674.8,600.5 673.2,603.7 673.3,606.7" fill="#b3c7da"/>
<polygon points="418.3,345.2 420.9,346.1 423.6,346.3 425.2,345.7 426.0,342.4 426.6,338.7 427.4,335.3 427.3,335.2 425.3,338.4 425.0,341.2 423.7,342.8 420.9,343.7 418.1,344.2 418.3,345.2" fill="#c8d2df"/>
<polygon points="636.4,650.0 639.3,649.0 642.0,648.7 643.9,650.2 645.3,652.7 648.2,650.8 652.5,648.9 654.8,647.0 655.6,645.1 657.4,643.1 659.0,640.9 657.8,639.5 657.2,637.2 656.7,635.8 653.5,636.7 648.8,637.0 645.7,636.5 643.3,635.7 639.5,634.9 636.4,634.8 635.2,637.2 634.2,639.5 632.6,641.7 634.3,642.5 635.6,644.7 636.3,647.8 636.4,650.0" fill="#b3c7da"/>
<polygon points="477.0,596.5 477.0,594.0 476.5,590.4 476.0,586.8 476.2,585.0 477.2,584.3 478.3,582.4 476.9,579.2 475.4,576.4 474.7,575.6 473.4,575.2 471.0,576.0 468.9,577.4 467.6,579.3 464.0,581.5 462.3,584.0 461.3,588.1 461.9,591.8 463.5,593.9 464.7,595.7 464.7,598.6 464.6,600.0 464.4,600.1 467.2,598.4 471.9,597.4 474.7,597.0 477.0,596.5" fill="#9dbbd4"/>
<polygon points="638.6,507.4 636.8,504.1 636.0,500.1 637.3,497.1 640.0,495.8 641.9,494.5 641.5,491.4 639.6,487.2 636.8,485.6 634.6,485.3 633.3,483.8 632.8,481.1 632.6,479.1 628.6,480.7 625.6,481.9 624.3,482.8 621.7,483.8 619.1,485.3 620.9,488.1 622.5,490.6 622.8,491.8 621.9,494.4 621.2,499.0 622.0,502.3 624.1,504.6 626.4,508.3 628.9,509.8 631.5,510.6 635.7,509.7 638.6,507.4" fill="#d7dae5"/>
<polygon points="532.4,590.3 532.2,594.4 529.9,597.8 527.7,600.0 527.3,602.3 528.1,605.3 530.9,607.6 533.3,608.8 534.9,610.4 535.3,613.7 536.1,615.7 537.9,616.2 541.0,615.0 543.5,613.5 545.0,612.2 547.0,611.0 549.2,609.5 546.6,605.8 544.8,601.6 544.4,599.5 545.1,597.7 545.9,594.6 545.7,592.2 544.1,591.9 540.8,593.2 537.1,593.4 534.7,592.2 532.4,590.3" fill="#b3c7da"/>
<polygon points="661.3,315.8 665.3,314.3 667.9,312.6 670.7,310.5 675.1,308.2 677.6,305.8 678.1,303.4 679.8,301.1 681.9,299.0 682.3,297.2 684.1,295.7 684.7,293.5 685.3,291.3 685.0,287.7 683.4,284.9 680.9,283.9 677.0,283.5 674.4,283.3 672.5,283.0 671.0,285.0 668.6,286.8 668.1,288.2 667.4,289.3 664.4,290.5 661.5,292.0 660.0,293.7 657.0,295.7 656.6,297.1 657.5,297.7 659.1,300.8 660.3,304.1 660.2,306.1 659.4,309.6 659.3,314.4 661.3,315.8" fill="#d7dae5"/>
<polygon points="513.1,645.0 512.6,643.0 511.2,642.0 509.9,639.7 509.6,635.6 509.4,635.3 504.9,634.6 501.7,635.9 500.4,638.0 498.1,639.1 494.8,638.1 492.9,635.6 491.0,633.3 489.9,636.1 489.7,638.8 490.2,640.9 492.1,642.6 493.1,646.1 493.2,650.0 493.2,652.3 493.7,654.4 497.1,655.0 499.2,654.9 501.8,653.9 505.4,650.4 509.1,647.5 511.1,645.8 513.1,645.0" fill="#9dbbd4"/>
<polygon points="589.0,499.6 588.7,501.0 589.7,504.3 591.2,508.5 592.3,511.3 592.3,513.6 591.7,517.3 591.4,520.8 595.4,520.5 599.4,519.3 602.1,519.6 603.1,518.2 606.3,517.5 609.3,517.0 610.6,516.2 611.4,512.6 611.6,511.0 610.3,508.5 607.7,504.7 604.9,502.5 603.0,501.1 602.2,497.8 601.9,494.5 601.2,493.2 599.9,496.0 596.4,498.5 592.9,499.8 591.3,500.0 589.0,499.6" fill="#d7dae5"/>
<polygon points="493.3,317.4 492.7,315.1 494.1,313.0 496.9,311.5 499.4,310.2 498.4,308.3 496.7,304.4 494.8,300.7 493.5,298.5 490.2,296.9 487.1,295.0 485.0,294.2 482.8,295.2 479.1,298.0 475.8,300.0 474.9,301.0 474.4,301.1 472.3,301.1 470.7,301.8 472.4,305.8 473.5,308.4 474.3,311.0 475.8,315.6 478.3,319.1 481.3,320.6 483.9,323.3 486.6,320.9 487.1,318.4 488.4,317.0 491.6,316.8 493.3,317.4" fill="#d7dae5"/>
<polygon points="547.8,429.7 545.4,430.1 541.8,431.3 540.0,433.7 539.9,436.7 541.1,438.9 542.1,440.7 542.1,443.4 541.1,446.6 543.0,447.4 544.9,447.2 546.7,448.2 548.6,451.3 550.8,454.5 553.0,455.4 555.7,455.4 557.1,453.3 558.1,449.9 560.2,445.6 563.5,441.5 565.4,438.4 562.7,438.6 558.8,438.8 554.5,436.5 550.9,434.1 548.7,432.6 547.8,429.7" fill="#c8d2df"/>
<polygon points="440.8,302.4 437.7,302.0 436.4,300.7 437.5,303.2 436.8,305.3 434.4,306.7 432.3,308.1 430.9,310.4 429.7,314.2 430.0,317.8 430.5,320.8 433.4,320.0 434.9,319.9 436.1,320.3 439.0,320.8 441.1,318.7 441.8,316.5 442.4,314.5 444.9,312.7 444.9,311.9 445.1,309.1 444.4,307.1 442.6,305.9 440.8,302.4" fill="#d7dae5"/>
<polygon points="715.9,363.1 719.1,360.4 721.1,357.0 721.1,353.9 720.5,352.1 717.8,350.6 716.1,349.1 715.1,346.8 714.1,346.0 712.6,346.7 710.3,346.0 707.6,343.3 704.7,341.0 702.2,339.5 700.0,336.7 699.0,335.9 696.8,335.8 695.4,338.2 694.8,340.8 693.8,343.5 692.5,345.4 691.5,347.5 691.7,351.5 693.1,355.1 694.4,356.6 694.7,358.2 694.0,361.0 693.4,363.1 694.1,363.9 697.9,363.1 702.0,364.0 703.8,365.9 705.7,367.4 709.1,367.5 711.4,366.2 712.6,364.4 715.9,363.1" fill="#d7dae5"/>
<polygon points="541.5,245.2 543.2,242.0 544.5,239.9 545.7,238.5 546.7,236.6 544.5,233.4 542.4,229.6 541.4,227.5 541.6,225.7 541.9,222.3 538.8,221.8 535.9,221.7 534.2,220.5 533.4,220.8 530.0,221.9 526.6,224.2 524.5,227.0 520.2,229.5 515.6,230.7 513.4,230.5 515.3,232.4 518.2,234.0 520.9,237.9 521.9,241.3 521.5,243.0 520.6,246.1 520.6,249.8 521.3,250.0 522.6,248.0 524.9,246.6 529.3,246.6 532.7,247.4 535.0,248.0 538.7,247.6 541.5,245.2" fill="#d7dae5"/>
<polygon points="687.3,694.3 688.6,698.1 689.1,701.1 690.5,700.6 693.0,699.2 695.8,697.8 698.1,695.0 699.9,693.2 703.4,692.7 702.7,692.0 699.1,690.8 696.1,688.4 694.3,685.8 693.6,685.3 693.7,685.2 694.5,683.3 694.6,680.8 693.9,679.0 692.1,681.4 690.9,682.6 687.3,682.6 685.3,685.7 684.3,688.9 685.3,691.0 687.3,694.3" fill="#c8d2df"/>
<polygon points="626.3,331.6 625.3,333.0 625.9,334.4 628.4,336.6 629.8,339.9 629.5,344.7 628.3,348.1 627.6,349.8 628.4,352.4 630.0,355.8 631.2,357.5 631.0,359.1 631.8,360.4 633.8,361.3 636.4,361.4 638.6,360.6 640.6,359.1 643.4,357.8 646.3,356.3 646.6,354.1 646.3,351.4 648.7,348.6 652.0,346.4 654.1,344.6 652.6,344.0 650.5,340.9 647.7,338.3 644.5,336.7 641.2,333.6 638.6,331.0 636.8,331.1 635.6,330.9 633.6,332.1 630.2,332.3 626.3,331.6" fill="#c8d2df"/>
<polygon points="511.8,668.0 508.5,668.0 507.6,668.7 505.7,670.7 503.3,673.9 503.0,677.6 504.6,680.8 504.9,682.4 503.9,684.2 502.2,687.0 501.0,689.3 503.8,688.1 505.4,687.4 508.2,688.1 512.8,690.1 516.5,692.1 518.6,692.6 521.3,691.4 523.1,689.6 524.8,687.8 525.7,684.2 526.7,680.3 526.8,678.1 525.4,677.1 522.3,676.0 518.9,674.1 516.0,673.6 513.9,672.4 512.8,668.8 511.8,668.0" fill="#c8d2df"/>
<polygon points="717.1,627.9 718.2,626.7 720.4,626.5 723.3,626.9 723.8,627.0 722.8,624.0 723.8,619.5 726.6,615.8 729.1,614.1 727.7,613.3 724.2,610.5 720.7,607.2 717.7,606.0 714.4,606.7 710.3,607.2 708.8,607.8 708.4,611.2 708.5,614.2 706.9,616.7 707.0,620.1 708.2,623.5 710.8,624.1 714.3,625.4 717.1,627.9" fill="#9dbbd4"/>
<polygon points="727.0,320.8 725.0,319.9 723.2,319.1 721.6,320.1 718.6,321.1 716.9,322.4 714.6,324.3 710.1,326.7 706.5,329.4 705.0,331.9 702.5,334.0 700.0,335.6 700.0,336.7 702.2,339.5 704.7,341.0 707.6,343.3 710.3,346.0 712.6,346.7 714.1,346.0 715.1,346.8 716.1,349.1 717.8,350.6 720.5,352.1 723.0,352.6 725.2,352.6 726.1,351.5 728.5,349.3 731.5,346.2 734.3,342.8 735.2,339.0 735.3,335.4 732.1,333.3 729.5,333.1 728.5,331.2 729.1,328.6 729.7,327.5 729.1,325.2 727.0,320.8" fill="#b3c7da"/>
<polygon points="594.7,366.8 596.6,364.6 599.1,363.0 600.7,360.4 601.2,356.6 598.6,355.9 595.5,356.2 592.1,354.5 588.5,350.7 585.4,350.8 583.6,350.8 583.3,351.1 584.4,354.0 583.4,356.8 580.7,358.9 578.7,361.7 578.6,366.0 581.2,365.8 585.9,366.5 590.0,367.4 592.0,367.6 594.7,366.8" fill="#c8d2df"/>
<polygon points="690.1,612.5 693.1,613.2 694.9,614.0 695.7,616.2 695.8,617.4 698.9,616.4 700.1,616.3 702.8,616.7 706.9,616.7 708.5,614.2 708.4,611.2 708.8,607.8 705.5,605.1 703.7,603.3 703.2,601.7 703.2,597.8 702.6,594.7 700.2,594.8 696.6,595.7 693.3,597.2 691.6,599.6 690.8,603.6 690.3,608.6 690.1,612.5" fill="#9dbbd4"/>
<polygon points="565.7,226.6 565.1,225.3 564.8,222.6 563.9,219.6 562.2,218.8 559.9,217.6 557.6,214.3 555.6,214.1 553.2,213.8 550.4,215.3 550.0,216.1 548.3,216.7 545.4,217.7 543.9,219.6 541.9,222.3 541.6,225.7 541.4,227.5 542.4,229.6 544.5,233.4 546.7,236.6 550.2,235.9 551.6,235.8 552.8,236.1 555.6,236.2 558.3,235.6 559.6,234.5 561.7,233.4 562.7,230.6 564.0,228.6 564.7,227.4 565.7,226.6" fill="#b3c7da"/>
<polygon points="533.6,671.3 535.5,673.4 537.1,673.5 538.7,673.2 540.6,674.0 543.3,675.4 544.5,671.7 546.7,668.4 548.4,666.3 550.4,665.5 553.9,665.4 551.8,663.5 548.9,659.3 546.1,655.9 544.7,654.0 542.9,654.1 541.9,654.5 541.5,657.6 539.9,660.0 538.3,661.5 538.3,662.5 536.7,663.5 535.4,666.5 533.6,671.3" fill="#b3c7da"/>
<polygon points="566.4,354.3 566.7,351.6 568.8,350.2 571.3,349.7 572.4,349.2 573.2,347.0 574.7,345.1 572.1,342.1 569.2,338.1 566.5,335.8 564.2,334.4 562.3,332.0 561.1,335.4 559.4,338.7 559.1,341.2 559.0,342.8 556.6,343.4 554.6,344.5 552.6,347.1 554.0,350.0 556.5,351.3 559.7,351.0 563.2,351.8 566.4,354.3" fill="#b3c7da"/>
<polygon points="512.0,575.1 515.6,576.2 518.0,576.9 521.8,576.6 525.6,575.7 527.0,575.1 526.5,571.4 527.9,568.0 530.1,565.7 530.5,564.0 531.0,562.3 530.8,559.4 527.6,558.4 523.4,559.1 520.0,560.4 517.7,560.2 515.2,558.1 511.9,555.3 508.8,553.5 509.4,555.7 509.9,559.2 509.1,563.1 506.7,566.0 506.3,567.2 507.1,569.6 509.2,573.0 512.0,575.1" fill="#9dbbd4"/>
<polygon points="702.6,594.7 703.3,594.2 704.0,593.6 700.0,590.8 696.3,587.4 693.6,586.2 692.0,586.4 691.1,584.6 691.2,582.1 688.0,583.5 686.2,587.2 685.6,590.5 686.6,591.9 688.4,592.8 690.0,595.2 691.6,597.2 693.3,597.2 696.6,595.7 700.2,594.8 702.6,594.7" fill="#b3c7da"/>
<polygon points="593.5,268.4 592.9,267.3 594.2,264.5 598.0,260.0 600.9,255.1 600.6,253.7 599.8,253.0 597.1,253.6 593.1,252.1 589.2,249.4 586.2,247.6 583.4,247.0 579.9,246.9 576.6,249.8 575.7,252.6 574.9,254.2 572.2,254.4 570.7,253.5 571.0,254.6 569.4,255.7 568.4,256.4 568.2,257.9 568.2,261.4 569.2,265.7 571.4,268.3 574.2,270.3 576.8,273.8 578.7,272.3 581.4,270.1 585.4,268.1 587.5,267.2 588.4,267.5 591.1,268.2 593.5,268.4" fill="#d7dae5"/>
<polygon points="617.4,650.7 619.0,651.3 621.1,653.9 623.6,655.7 626.2,657.2 627.6,658.6 629.3,660.2 630.2,658.5 631.5,656.9 632.3,655.1 633.6,652.8 636.4,650.0 636.3,647.8 635.6,644.7 634.3,642.5 632.6,641.7 630.3,642.2 629.1,641.2 627.4,639.4 623.8,638.0 620.0,637.8 621.3,642.2 622.4,646.6 620.8,649.3 617.4,650.7" fill="#c8d2df"/>
<polygon points="528.2,356.8 526.2,357.8 524.3,360.0 520.7,362.8 518.0,365.2 516.8,366.4 516.1,367.7 515.9,369.7 515.9,372.3 515.7,374.5 515.1,376.1 514.7,378.4 514.5,382.0 517.4,381.2 521.5,379.6 524.3,377.9 526.5,376.8 530.1,376.7 532.3,375.6 533.1,373.6 532.0,370.8 530.1,368.5 529.0,366.6 529.9,364.1 528.9,360.2 528.2,356.8" fill="#d7dae5"/>
<polygon points="495.1,491.1 496.2,494.4 495.2,496.6 492.6,497.4 490.2,497.9 489.6,499.8 492.5,504.0 496.0,507.0 499.2,508.7 501.3,511.7 504.5,510.9 506.2,509.5 507.0,508.3 508.1,506.3 509.6,504.9 510.1,503.9 509.8,502.9 511.1,501.6 510.3,499.2 510.4,497.0 510.5,493.4 509.6,490.7 507.4,490.2 504.1,489.2 500.4,486.7 497.8,488.7 495.7,490.2 495.1,491.1" fill="#d7dae5"/>
<polygon points="751.5,257.8 750.1,260.0 749.3,263.4 750.0,267.6 752.1,269.9 753.9,270.8 754.0,272.9 752.5,276.0 750.6,278.2 752.9,276.6 754.0,276.3 756.4,277.8 760.5,280.1 761.0,277.6 761.9,276.0 761.9,274.2 760.5,270.0 758.5,266.1 757.2,263.6 757.4,260.6 758.3,256.6 759.1,253.8 758.8,252.7 757.5,253.4 755.6,255.2 751.5,257.8" fill="#d7dae5"/>
<polygon points="593.0,606.1 594.4,601.8 596.8,598.5 598.5,597.0 598.4,595.7 595.8,594.2 591.4,591.3 586.7,589.3 583.2,588.3 580.8,587.3 578.5,586.3 576.6,587.4 574.8,588.3 575.9,592.5 577.2,596.0 577.1,598.7 575.5,602.3 574.1,606.2 577.3,606.6 580.8,606.0 582.7,604.9 586.3,605.1 589.8,606.1 591.0,606.7 593.0,606.1" fill="#c8d2df"/>
<polygon points="733.7,377.2 732.6,377.9 732.4,380.4 733.9,383.4 736.8,384.8 739.5,387.8 743.8,390.3 748.0,392.3 750.1,392.5 751.5,390.9 754.5,389.7 757.4,390.3 759.0,392.6 760.3,391.7 762.3,390.4 759.8,387.3 758.0,385.0 757.6,380.8 758.4,376.2 759.3,373.9 759.0,371.6 757.1,368.0 754.5,366.1 752.4,365.7 749.0,366.4 745.7,368.4 744.9,370.1 743.0,371.4 740.2,372.5 739.3,373.7 737.6,375.3 733.7,377.2" fill="#c8d2df"/>
<polygon points="438.6,455.0 438.6,455.0 439.4,459.1 438.1,462.3 435.6,464.0 433.9,465.6 434.1,468.1 435.7,470.6 436.8,472.3 438.9,473.6 439.9,476.4 441.4,479.1 444.2,479.4 447.9,477.1 449.3,475.3 451.8,474.2 454.8,473.5 455.6,472.7 453.2,467.7 452.5,463.5 451.0,462.3 450.0,461.1 448.5,459.7 446.2,459.4 443.7,459.9 441.4,458.5 438.6,455.0" fill="#c8d2df"/>
<polygon points="436.8,472.3 433.6,473.3 430.8,475.6 429.2,478.5 429.1,480.3 428.5,483.3 428.7,486.7 430.1,488.0 431.5,488.9 431.6,491.9 434.9,492.5 436.4,494.1 439.2,495.3 441.7,494.9 442.9,493.5 442.6,491.0 442.8,487.7 442.1,483.6 442.8,480.8 444.2,479.4 441.4,479.1 439.9,476.4 438.9,473.6 436.8,472.3" fill="#d7dae5"/>
<polygon points="486.9,339.1 488.2,340.9 489.3,342.5 492.5,341.0 496.5,340.3 498.4,340.2 499.1,340.0 501.3,339.3 503.3,337.7 502.2,334.3 502.1,330.5 503.3,327.7 505.0,325.0 502.7,323.1 499.6,320.6 496.2,319.5 493.3,317.4 491.6,316.8 488.4,317.0 487.1,318.4 486.6,320.9 483.9,323.3 483.6,324.0 483.6,327.4 482.2,328.5 481.0,329.6 481.1,332.5 482.9,334.8 485.3,336.1 486.9,339.1" fill="#c8d2df"/>
<polygon points="693.0,664.9 694.0,662.5 696.1,659.3 697.2,655.6 695.6,651.9 695.3,649.8 695.4,646.9 693.9,645.8 692.1,645.4 689.7,645.4 686.8,644.2 684.2,641.1 683.3,640.6 683.6,643.5 681.6,646.8 678.3,649.7 676.1,651.9 674.7,653.6 675.8,654.1 677.6,656.4 679.5,658.2 681.0,659.0 682.3,659.8 685.8,662.1 690.2,664.4 693.0,664.9" fill="#9dbbd4"/>
<polygon points="534.3,480.0 534.2,485.0 535.0,487.8 537.1,490.2 539.4,494.0 540.4,496.3 541.8,494.6 545.3,492.9 548.5,492.6 549.2,491.2 550.4,489.8 552.5,488.5 553.8,487.3 552.1,485.5 552.1,482.3 552.8,479.3 553.0,478.0 551.3,476.4 549.9,474.1 546.9,472.4 543.1,472.5 542.5,474.4 541.5,476.3 538.1,478.2 534.3,480.0" fill="#b3c7da"/>
<polygon points="504.8,176.8 507.9,178.1 510.7,179.1 513.3,181.1 516.1,184.0 518.0,182.5 520.6,180.0 522.0,176.5 524.5,172.8 522.9,174.2 521.7,175.8 519.5,176.7 515.5,175.9 511.8,173.8 509.7,172.0 508.1,171.5 506.5,174.0 504.8,176.8" fill="#b3c7da"/>
<polygon points="619.5,623.7 620.6,625.5 620.6,626.7 618.7,628.1 616.1,630.2 614.3,633.5 615.1,636.0 617.0,637.0 620.0,637.8 623.8,638.0 627.4,639.4 629.1,641.2 630.3,642.2 632.6,641.7 634.2,639.5 635.2,637.2 636.4,634.8 637.7,631.9 638.7,629.9 638.7,628.5 637.8,625.8 636.7,621.9 632.8,623.4 630.5,624.3 627.6,624.2 622.8,623.8 619.5,623.7" fill="#c8d2df"/>
<polygon points="578.5,464.8 581.9,463.4 584.4,463.0 585.9,463.6 589.3,464.6 593.7,464.8 596.5,463.6 599.1,461.3 600.2,459.2 600.2,456.2 599.2,453.6 598.0,452.2 597.6,450.7 596.5,449.6 595.7,447.5 594.8,446.2 593.6,445.2 591.0,444.4 589.4,442.8 588.3,441.3 586.3,440.6 584.2,441.8 581.7,443.0 580.3,446.1 579.2,448.7 579.4,450.2 580.8,453.0 581.7,457.7 581.0,461.9 578.9,464.2 578.5,464.8" fill="#b3c7da"/>
<polygon points="436.2,415.4 438.3,414.8 439.6,414.0 441.9,412.6 445.2,410.8 446.5,407.4 445.8,404.9 444.4,403.6 442.8,403.7 441.6,401.8 440.8,399.0 440.0,397.4 438.8,395.4 434.4,396.0 430.4,396.5 428.6,397.4 426.2,399.2 423.5,401.8 423.2,404.8 422.9,407.5 424.3,409.6 425.2,412.3 425.8,414.1 427.9,412.9 430.0,411.8 433.0,412.8 436.2,415.4" fill="#b3c7da"/>
<polygon points="690.6,429.7 693.4,429.1 696.4,427.9 701.1,427.1 704.3,427.1 705.8,427.3 708.8,427.0 711.8,425.4 711.8,422.6 711.8,420.2 711.7,420.2 709.5,418.8 708.2,416.5 707.7,415.8 707.4,414.5 706.5,410.7 704.5,407.6 701.6,405.9 698.4,402.7 696.0,399.2 693.1,401.5 691.3,403.9 691.3,405.5 689.3,405.9 686.6,405.6 685.5,405.2 684.9,406.7 682.9,409.0 682.8,413.5 682.9,416.5 684.1,419.0 686.1,423.3 688.3,426.6 689.9,427.7 690.6,429.7" fill="#d7dae5"/>
<polygon points="713.5,204.6 713.6,204.5 716.6,202.2 718.0,199.9 717.8,198.0 719.1,196.4 722.0,195.5 724.3,194.9 722.5,192.1 720.4,188.2 718.2,186.4 715.0,187.5 713.6,189.7 711.3,192.4 707.6,195.4 706.0,198.6 706.7,201.5 708.2,204.0 709.8,204.9 711.5,204.5 713.5,204.6" fill="#d7dae5"/>
<polygon points="540.5,520.3 539.7,522.2 537.1,523.9 534.5,525.3 535.1,528.5 534.9,531.1 533.7,532.9 534.9,534.7 536.3,537.7 538.0,540.0 539.9,540.3 541.9,540.3 543.7,539.0 546.4,538.3 547.9,538.6 548.7,539.3 549.7,536.7 552.2,534.2 554.5,532.2 556.0,530.8 558.0,529.6 558.1,529.5 555.9,529.6 554.6,527.5 553.2,524.4 550.6,522.4 547.0,521.8 543.5,521.2 540.5,520.3" fill="#b3c7da"/>
<polygon points="392.4,413.3 393.6,412.7 395.2,408.7 395.9,406.1 395.4,405.0 394.5,403.8 392.1,400.9 390.5,398.9 390.1,400.1 388.4,401.7 386.7,403.6 386.1,405.6 386.1,407.7 384.5,409.7 386.7,412.5 387.3,413.2 387.8,412.1 389.6,411.7 392.4,413.3" fill="#d7dae5"/>
<polygon points="570.2,422.3 568.2,420.9 565.2,418.7 561.2,417.1 557.1,417.4 553.9,417.3 551.8,419.2 551.3,420.6 548.9,421.9 549.3,424.1 548.9,426.6 547.8,429.7 548.7,432.6 550.9,434.1 554.5,436.5 558.8,438.8 562.7,438.6 565.4,438.4 565.9,437.4 566.1,437.1 565.3,435.8 565.5,434.7 566.9,432.2 568.9,428.3 570.3,424.6 570.2,422.3" fill="#c8d2df"/>
<polygon points="565.5,323.0 568.8,322.9 570.9,323.7 571.8,324.4 574.5,324.1 578.0,322.5 579.8,319.9 579.7,318.3 577.3,316.4 576.4,313.2 577.1,309.6 578.4,308.0 579.0,307.3 578.3,304.9 575.1,303.6 572.3,302.5 570.2,301.3 567.8,299.0 564.2,296.4 560.2,295.5 557.5,297.3 556.8,299.3 555.1,301.4 556.6,305.4 557.4,309.0 557.0,311.1 556.2,313.7 556.4,317.3 558.1,319.5 560.6,320.0 562.7,320.2 564.3,321.6 565.5,323.0" fill="#c8d2df"/>
<polygon points="657.3,575.1 658.9,574.7 660.7,573.3 661.7,572.9 664.2,573.5 666.8,574.4 667.6,574.7 669.1,573.9 668.6,570.0 669.4,567.4 671.1,566.0 672.7,564.0 673.0,561.1 670.6,559.6 667.4,558.4 664.3,557.1 661.7,555.3 661.6,556.9 658.9,559.7 655.9,563.1 653.9,566.6 653.6,568.5 654.0,571.4 655.4,574.2 657.3,575.1" fill="#c8d2df"/>
<polygon points="403.8,416.7 407.0,414.1 408.7,411.7 411.3,409.8 415.2,408.7 417.1,408.0 417.5,407.4 419.2,406.5 417.4,404.2 415.7,400.7 414.5,397.4 411.9,396.9 410.1,397.9 407.7,399.5 403.9,400.3 400.3,399.8 398.6,401.8 397.9,403.0 396.3,403.5 394.5,403.8 395.4,405.0 395.9,406.1 395.2,408.7 393.6,412.7 395.8,414.5 397.7,415.9 400.3,416.5 403.8,416.7" fill="#d7dae5"/>
<polygon points="579.0,623.1 578.3,618.7 579.5,615.6 581.6,613.7 582.9,611.3 582.6,608.4 580.8,606.0 577.3,606.6 574.1,606.2 570.5,606.4 568.8,605.4 568.1,603.9 565.8,602.9 563.1,603.1 562.1,604.6 562.4,606.4 564.3,609.7 565.2,612.5 564.9,613.9 564.1,615.9 564.8,617.7 566.2,620.2 569.2,621.8 573.2,622.3 576.7,622.6 579.0,623.1" fill="#9dbbd4"/>
<polygon points="691.0,376.8 692.9,373.1 694.3,369.3 694.2,366.1 694.1,363.9 693.4,363.1 694.0,361.0 694.7,358.2 694.4,356.6 693.1,355.1 691.7,351.5 691.5,347.5 692.5,345.4 693.8,343.5 690.6,344.9 686.6,345.1 684.4,344.6 680.8,344.5 675.7,345.5 672.8,347.3 670.1,349.0 665.9,349.7 666.4,351.7 668.3,355.2 670.2,357.7 670.8,359.9 670.3,363.7 669.8,368.2 670.5,370.7 671.9,372.0 674.9,373.4 677.1,375.1 678.3,375.6 679.5,374.3 680.7,373.8 683.6,374.4 686.8,375.7 688.7,376.7 691.0,376.8" fill="#d7dae5"/>
<polygon points="599.0,333.8 603.6,336.1 607.9,337.4 610.8,339.3 612.1,343.1 613.4,343.4 616.6,342.0 618.8,339.2 619.6,336.4 622.8,334.7 625.9,334.4 625.3,333.0 626.3,331.6 624.6,328.0 623.9,326.2 623.7,324.8 623.1,322.2 621.6,320.7 618.8,321.1 615.3,320.3 611.6,317.5 608.6,315.4 606.7,313.7 605.9,313.2 604.3,314.3 602.4,314.9 599.9,315.6 599.2,316.7 601.0,318.5 601.9,322.0 601.3,325.7 599.9,328.2 598.8,330.5 599.0,333.8" fill="#b3c7da"/>
<polygon points="713.7,649.5 715.3,647.1 715.8,644.6 717.1,642.1 718.5,639.8 715.8,640.1 713.4,641.3 712.1,642.6 713.9,644.6 714.8,646.5 713.7,649.5" fill="#b3c7da"/>
<polygon points="755.4,448.6 754.4,451.5 755.4,453.5 757.1,455.4 757.4,457.9 755.7,460.4 757.1,461.8 758.5,462.6 759.8,464.0 760.5,463.9 762.1,467.2 763.7,470.1 765.6,470.7 768.2,470.5 771.5,471.2 774.7,472.5 777.2,473.3 776.0,471.9 774.9,469.8 775.6,467.3 777.9,465.3 780.0,463.4 780.8,460.7 780.6,457.1 780.5,454.0 780.0,453.4 777.1,451.8 775.5,450.5 774.4,449.0 772.6,447.5 769.7,447.2 766.4,448.0 763.9,448.3 761.9,448.7 759.2,448.6 755.4,448.6" fill="#d7dae5"/>
<polygon points="578.4,367.2 578.6,366.0 578.7,361.7 580.7,358.9 583.4,356.8 584.4,354.0 583.3,351.1 580.9,350.9 577.8,352.1 574.7,351.6 572.4,349.2 571.3,349.7 568.8,350.2 566.7,351.6 566.4,354.3 567.2,357.3 566.8,359.2 565.6,361.0 566.3,362.8 567.0,365.2 569.2,367.2 570.2,368.5 572.4,368.5 575.8,367.8 578.4,367.2" fill="#b3c7da"/>
<polygon points="657.6,549.8 661.5,548.5 665.8,546.9 667.6,545.1 668.9,543.2 671.4,541.1 670.1,538.0 669.3,536.4 669.5,535.5 669.3,535.2 666.5,534.6 662.3,532.8 659.3,531.1 658.1,530.6 655.6,531.5 652.1,533.2 650.3,534.5 650.2,536.7 650.4,539.9 650.4,543.2 649.9,545.8 650.4,547.1 652.5,547.7 654.2,548.2 655.3,549.3 656.2,549.9 657.6,549.8" fill="#c8d2df"/>
<polygon points="585.2,294.8 587.5,299.0 590.5,301.5 594.3,302.4 598.5,303.8 602.2,305.3 604.3,305.2 605.2,306.2 606.0,309.8 606.9,305.4 607.0,302.5 606.4,300.7 606.1,298.0 606.8,295.0 608.2,293.4 609.1,292.0 608.9,288.7 608.0,284.2 605.3,282.4 603.1,282.2 600.4,282.7 596.7,282.8 593.7,285.7 592.6,287.8 592.3,288.7 590.3,288.7 587.8,288.4 587.3,290.0 586.2,291.5 585.2,294.8" fill="#c8d2df"/>
<polygon points="513.2,607.5 516.5,607.5 518.6,606.8 520.3,605.6 523.9,604.9 528.1,605.3 527.3,602.3 527.7,600.0 529.9,597.8 532.2,594.4 532.4,590.3 530.1,588.2 527.8,587.0 524.0,588.0 522.5,590.4 521.4,593.3 518.3,595.1 516.1,595.2 514.9,594.2 511.3,593.2 511.3,596.2 510.1,597.5 508.8,598.7 508.8,602.0 510.7,605.5 513.2,607.5" fill="#b3c7da"/>
<polygon points="463.5,278.5 460.5,280.0 459.1,283.4 460.0,286.0 461.9,289.1 462.3,292.7 460.4,295.6 461.2,296.8 462.3,297.6 464.0,300.0 466.2,301.7 468.3,302.0 469.5,301.1 470.7,301.8 472.3,301.1 474.4,301.1 474.9,301.0 475.8,300.0 479.1,298.0 482.8,295.2 483.1,293.4 482.8,290.2 481.4,286.8 479.2,285.3 477.2,284.9 474.4,282.1 471.0,278.7 468.3,277.4 466.3,278.2 463.5,278.5" fill="#d7dae5"/>
<polygon points="540.9,700.9 539.1,698.2 536.5,696.8 533.5,694.5 530.9,690.3 528.3,688.3 526.9,687.2 526.2,687.2 524.8,687.8 523.1,689.6 521.3,691.4 521.5,693.1 522.4,694.4 523.4,696.0 524.7,696.1 526.9,697.2 529.7,698.0 532.2,699.3 533.9,702.2 535.9,704.9 538.2,703.2 540.9,700.9" fill="#c8d2df"/>
<polygon points="713.4,453.1 714.3,456.4 714.3,458.7 713.0,461.4 711.3,464.6 710.2,467.1 709.8,469.0 712.1,469.1 713.8,470.6 716.0,471.9 719.1,472.6 722.7,475.0 725.9,479.1 728.4,478.5 730.5,477.3 734.1,475.6 736.7,474.0 737.3,473.0 738.8,472.8 736.6,469.5 734.9,466.2 734.1,464.8 733.7,462.8 732.9,459.2 730.9,457.0 728.1,456.0 725.6,453.3 724.1,450.4 722.6,450.2 721.3,449.6 718.0,449.7 715.0,450.9 713.4,453.1" fill="#d7dae5"/>
<polygon points="486.4,467.7 487.3,469.2 488.4,471.7 487.8,475.1 485.4,478.7 482.9,481.8 481.6,484.6 482.9,484.3 484.6,485.2 487.2,486.5 490.1,487.3 492.7,488.6 495.1,491.1 495.7,490.2 497.8,488.7 500.4,486.7 501.0,483.6 500.5,482.0 500.9,480.6 500.8,477.7 499.6,475.2 497.9,473.8 496.2,473.0 495.1,470.9 494.2,469.8 492.7,468.3 489.5,467.4 486.4,467.7" fill="#d7dae5"/>
<polygon points="664.1,416.9 666.9,417.0 671.9,415.7 675.3,413.1 678.1,410.5 682.9,409.0 684.9,406.7 685.5,405.2 683.2,403.6 679.9,401.1 677.0,398.1 675.5,397.3 675.3,396.5 675.3,393.7 674.5,391.8 672.7,390.6 670.3,392.3 667.9,392.6 666.9,392.0 663.5,391.8 659.1,392.7 657.9,394.7 657.5,397.0 658.2,400.8 659.0,405.4 659.1,408.6 657.9,410.1 659.5,410.0 660.9,411.6 662.1,414.0 663.0,415.6 664.1,416.9" fill="#c8d2df"/>
<polygon points="727.1,262.2 729.3,261.4 733.1,259.5 735.7,257.0 736.4,254.4 737.8,252.2 737.0,248.7 736.5,244.6 737.1,242.3 738.5,241.4 739.3,239.0 738.4,235.6 736.2,233.2 733.7,232.8 731.4,231.6 729.3,231.9 726.3,232.0 723.1,231.8 720.9,231.3 722.3,230.3 724.8,228.8 721.2,229.9 719.9,230.3 718.5,230.4 715.8,230.9 714.3,232.2 714.3,234.0 712.5,236.2 711.2,238.8 709.6,242.3 708.1,246.4 706.5,249.6 707.4,251.1 708.9,251.7 711.1,252.5 712.7,253.7 714.6,254.0 717.5,253.7 720.9,254.9 724.1,258.1 726.2,261.1 727.1,262.2" fill="#d7dae5"/>
<polygon points="424.3,441.3 425.7,444.2 425.8,445.5 425.5,445.6 425.9,447.9 427.8,450.8 431.0,452.2 435.2,452.8 438.6,455.0 438.6,455.0 437.8,452.6 438.7,451.3 441.7,450.6 444.4,449.4 446.1,447.0 448.5,443.1 446.3,439.0 443.2,436.8 440.9,434.8 437.6,433.1 435.6,430.5 434.4,430.0 432.5,430.0 429.4,431.1 427.3,433.1 426.3,435.4 425.7,437.9 424.8,439.6 424.3,441.3" fill="#c8d2df"/>
<polygon points="476.1,517.6 476.9,518.8 478.6,521.3 481.1,523.6 484.6,521.5 488.4,519.8 490.0,519.2 492.2,519.8 495.8,520.7 496.8,520.0 497.9,518.4 499.4,515.5 501.3,511.7 499.2,508.7 496.0,507.0 492.5,504.0 489.6,499.8 488.0,499.5 485.3,500.5 482.0,502.7 480.6,505.2 482.2,508.2 482.6,511.8 480.8,514.9 478.0,516.7 476.1,517.6" fill="#b3c7da"/>
<polygon points="573.5,541.6 572.9,542.5 572.7,543.4 570.1,544.4 566.9,545.9 565.1,547.6 562.8,549.6 559.1,551.5 556.9,553.3 557.2,554.2 559.4,556.8 561.5,558.7 562.6,559.3 564.1,558.8 566.9,560.3 569.9,562.8 572.0,564.6 573.9,565.2 577.2,564.2 581.1,562.9 581.4,562.1 579.5,560.2 576.8,556.4 575.0,553.5 575.1,551.1 576.2,547.0 576.6,542.9 575.8,541.2 573.5,541.6" fill="#9dbbd4"/>
<polygon points="562.1,593.4 563.3,590.3 563.5,587.4 565.7,585.3 569.2,584.1 569.2,581.3 569.4,579.0 566.6,578.0 563.2,578.1 560.3,577.6 558.3,576.6 556.9,576.0 555.0,575.5 552.4,574.8 550.0,574.4 550.6,576.0 550.1,578.1 548.4,581.4 546.2,585.2 544.9,588.0 547.9,588.7 550.3,589.8 551.9,591.5 554.0,593.4 557.6,594.2 562.1,593.4" fill="#c8d2df"/>
<polygon points="571.8,653.2 572.1,651.0 572.1,648.0 571.4,645.7 568.0,645.3 563.9,646.0 561.2,647.3 559.1,648.2 555.8,647.8 552.4,646.3 550.9,647.9 549.6,649.9 547.4,652.0 544.7,654.0 546.1,655.9 548.9,659.3 551.8,663.5 553.9,665.4 557.7,666.1 560.1,666.7 561.5,666.9 565.0,664.1 568.1,661.2 568.3,658.9 569.5,657.4 571.7,656.5 571.7,655.5 571.3,654.1 571.8,653.2" fill="#c8d2df"/>
<polygon points="703.8,491.1 702.0,493.2 698.2,495.7 695.9,498.2 695.6,498.6 695.5,499.5 696.2,501.7 696.9,501.4 699.6,502.1 702.8,503.0 704.1,503.7 705.6,503.3 708.8,501.9 713.1,498.5 715.7,495.1 718.4,492.7 715.4,492.5 713.3,492.5 710.4,492.9 707.0,493.1 704.9,492.5 703.8,491.1" fill="#d7dae5"/>
<polygon points="467.7,650.4 467.6,650.8 469.3,652.0 472.6,655.8 476.9,659.6 481.1,661.2 484.2,663.1 485.7,665.6 485.9,666.2 485.9,666.7 486.3,666.3 488.5,663.2 491.7,661.7 493.2,660.7 492.2,659.2 491.5,657.0 493.7,654.4 493.2,652.3 493.2,650.0 493.1,646.1 492.1,642.6 490.2,640.9 489.0,643.2 487.5,646.2 483.6,649.0 480.1,650.8 478.0,651.3 474.5,650.8 470.0,650.2 467.7,650.4" fill="#6a9cc9"/>
<polygon points="418.7,526.5 416.4,523.6 413.2,521.6 410.1,521.5 407.6,522.7 405.2,523.0 402.0,521.7 400.5,523.9 399.9,525.1 400.4,525.7 399.9,526.6 397.0,528.3 396.8,532.6 397.4,537.2 399.3,539.6 399.6,539.8 403.4,540.0 405.1,539.6 406.2,538.4 408.9,537.2 411.8,536.6 413.3,536.8 415.3,537.4 414.9,535.1 416.1,531.9 418.1,529.5 419.2,528.5 418.7,526.5" fill="#b3c7da"/>
<polygon points="490.3,609.3 488.9,608.5 487.1,606.0 486.1,602.2 486.5,599.5 486.2,600.2 485.5,600.3 483.5,599.2 480.3,597.6 477.0,596.5 474.7,597.0 471.9,597.4 467.2,598.4 464.4,600.1 463.9,600.6 463.7,601.3 465.5,601.9 468.6,604.1 473.1,605.9 477.8,607.4 481.2,609.8 483.0,612.0 482.8,613.6 481.4,615.0 483.4,614.0 484.4,612.1 487.3,610.3 490.3,609.3" fill="#c8d2df"/>
<polygon points="497.9,473.8 500.9,471.7 503.3,469.1 504.7,466.9 507.5,465.7 511.6,465.5 512.7,463.9 513.8,462.8 514.3,460.7 514.1,458.1 513.6,455.9 513.4,455.8 510.4,454.9 508.1,453.8 507.1,453.7 506.0,454.2 503.4,455.2 501.5,456.2 500.9,456.8 501.9,459.6 501.0,461.9 498.5,464.0 496.0,467.0 495.1,470.9 496.2,473.0 497.9,473.8" fill="#d7dae5"/>
<polygon points="697.3,219.8 697.0,217.3 698.7,215.0 700.9,213.1 701.7,211.6 704.5,210.2 708.9,208.7 711.2,206.8 713.5,204.6 711.5,204.5 709.8,204.9 708.2,204.0 706.7,201.5 707.0,203.5 705.9,204.7 704.0,205.4 702.6,204.5 700.7,204.6 696.6,205.8 693.3,206.7 691.2,207.5 688.6,207.7 684.7,207.4 683.1,210.4 682.4,214.4 683.6,217.1 686.0,218.1 688.4,219.0 691.8,219.6 695.2,219.9 697.3,219.8" fill="#d7dae5"/>
<polygon points="590.0,659.3 591.5,662.4 592.0,664.5 591.4,665.8 590.5,668.4 591.8,670.2 594.8,670.5 598.1,669.2 600.5,668.1 601.9,667.1 605.1,666.9 608.6,666.9 609.0,664.7 607.8,660.9 605.5,657.5 603.6,655.1 601.9,652.7 601.2,649.6 600.8,648.6 598.0,650.7 595.3,652.7 593.6,655.3 592.8,657.2 591.3,658.4 590.0,659.3" fill="#9dbbd4"/>
<polygon points="660.2,660.6 661.4,663.4 661.3,667.3 661.2,669.3 663.3,670.2 665.1,672.4 667.4,675.3 670.4,677.0 673.3,676.5 673.7,676.0 673.0,674.0 673.6,670.4 676.7,665.8 680.0,661.6 681.0,659.0 679.5,658.2 677.6,656.4 675.8,654.1 674.7,653.6 671.8,654.9 667.9,655.0 664.9,653.6 663.8,654.7 662.2,656.1 660.3,658.1 660.2,660.6" fill="#9dbbd4"/>
<polygon points="731.9,631.6 728.8,629.7 726.0,628.0 723.8,627.0 723.3,626.9 720.4,626.5 718.2,626.7 717.1,627.9 715.6,630.0 712.5,632.2 709.9,634.6 708.8,637.5 710.2,640.3 712.1,642.6 713.4,641.3 715.8,640.1 718.5,639.8 718.7,637.7 719.0,636.5 722.8,637.1 727.0,637.1 729.5,636.5 729.6,634.5 730.8,633.6 731.9,631.6" fill="#b3c7da"/>
<polygon points="576.7,228.5 577.5,230.2 578.4,230.5 579.8,230.0 583.1,228.3 585.2,227.8 586.6,228.1 590.3,228.3 594.4,227.8 596.8,226.4 598.6,223.3 600.8,220.9 598.4,220.7 595.3,219.4 592.0,217.9 590.1,216.2 589.0,215.0 587.6,213.2 585.2,210.5 581.9,209.7 579.3,209.9 578.9,212.7 579.6,215.9 580.0,218.6 579.3,221.1 578.0,224.3 576.7,228.5" fill="#c8d2df"/>
<polygon points="641.3,315.2 642.3,316.9 642.3,319.8 640.3,323.6 637.5,327.6 635.6,330.9 636.8,331.1 638.6,331.0 641.2,333.6 644.5,336.7 647.7,338.3 650.5,340.9 652.6,344.0 654.1,344.6 657.2,342.8 661.5,341.5 664.0,341.4 664.5,339.8 663.9,337.7 663.7,334.0 664.4,329.7 665.8,327.0 667.0,326.1 667.8,324.9 668.0,322.1 665.5,319.2 663.1,317.4 661.3,315.8 659.3,314.4 657.0,314.5 655.5,315.4 652.5,316.5 649.7,317.3 648.9,317.1 647.4,316.1 644.0,315.2 641.3,315.2" fill="#d7dae5"/>
<polygon points="530.6,643.5 529.7,641.3 529.1,638.6 529.5,635.1 528.1,631.9 527.3,631.0 524.2,632.2 522.8,634.2 519.7,636.1 515.2,636.8 512.4,636.4 509.6,635.6 509.9,639.7 511.2,642.0 512.6,643.0 513.1,645.0 516.3,648.2 518.9,650.5 520.0,650.8 520.3,650.2 521.2,650.2 524.9,648.2 528.2,646.5 529.4,644.9 530.6,643.5" fill="#d7dae5"/>
<polygon points="571.4,645.7 572.1,648.0 572.1,651.0 571.8,653.2 573.6,653.1 577.4,651.8 580.3,649.2 581.4,646.1 583.7,643.3 586.7,641.6 585.0,638.0 583.7,634.9 584.1,633.7 585.9,632.5 585.6,629.2 584.4,626.1 583.3,626.4 583.0,628.6 580.3,630.5 576.9,631.7 574.9,632.5 572.2,633.0 568.0,633.7 567.2,637.8 568.6,642.0 570.6,644.4 571.4,645.7" fill="#d7dae5"/>
<polygon points="530.3,196.3 531.4,194.2 535.0,192.7 538.5,191.4 539.6,190.0 540.2,187.7 541.5,184.3 542.4,180.2 542.7,176.2 540.3,176.1 536.4,176.9 532.5,177.0 530.5,175.8 529.6,173.7 527.5,172.4 524.5,172.8 522.0,176.5 520.6,180.0 518.0,182.5 516.1,184.0 518.6,186.9 519.9,188.0 519.5,190.6 518.5,194.8 518.4,197.2 519.6,196.0 522.2,195.8 526.0,197.0 528.8,196.3 530.3,196.3" fill="#b3c7da"/>
<polygon points="389.2,441.1 388.7,437.4 389.3,433.7 391.8,430.6 391.8,428.9 392.5,426.8 392.2,423.6 390.4,422.1 388.1,423.8 384.9,424.8 383.2,424.8 383.9,426.1 383.6,427.9 383.0,431.6 382.9,435.2 383.7,437.9 385.3,440.7 389.2,441.1" fill="#d7dae5"/>
<polygon points="461.9,702.8 462.2,698.8 461.1,695.1 457.7,693.3 453.6,690.9 449.7,687.1 450.4,690.4 451.4,693.2 452.0,695.2 453.2,698.1 454.0,702.7 455.0,706.0 458.5,704.7 461.9,702.8" fill="#9dbbd4"/>
<polygon points="562.5,696.8 564.7,695.1 567.4,694.8 571.5,695.5 573.5,696.4 574.7,696.4 577.7,694.7 575.3,690.9 573.7,687.6 573.0,685.5 572.1,681.4 570.3,677.2 566.9,676.1 565.1,676.0 564.7,678.1 562.3,680.9 559.1,683.9 557.3,686.3 555.7,687.8 554.9,689.8 555.1,692.7 556.2,694.7 557.0,695.7 559.9,695.9 562.5,696.8" fill="#c8d2df"/>
<polygon points="410.4,481.3 410.2,478.6 410.3,477.5 409.9,477.7 408.6,476.5 406.3,474.1 403.6,472.5 402.2,473.3 399.1,473.2 396.4,472.6 397.2,473.2 396.8,475.1 394.3,478.5 391.3,482.2 390.1,485.2 393.4,485.6 397.3,488.0 400.9,491.7 403.7,494.2 404.0,492.6 404.5,489.8 407.0,486.6 408.2,483.9 409.4,482.3 410.4,481.3" fill="#d7dae5"/>
<polygon points="727.6,404.5 725.7,406.1 725.0,408.1 723.3,410.3 719.2,412.5 716.1,414.5 715.0,416.3 713.6,418.1 711.7,420.2 711.8,420.2 715.2,419.4 719.1,420.5 722.4,423.8 724.7,426.5 726.4,427.8 728.2,429.4 730.2,431.3 733.5,429.0 735.0,427.3 737.1,426.4 740.5,426.2 742.5,426.1 743.0,425.5 745.1,424.1 745.5,420.9 745.8,417.9 743.0,416.7 740.9,415.1 739.6,411.2 738.9,407.9 737.9,407.3 735.8,406.9 732.1,405.3 727.6,404.5" fill="#d7dae5"/>
<polygon points="750.6,278.2 747.3,281.5 746.9,284.7 746.7,287.1 744.5,288.3 746.8,291.6 748.0,294.3 748.6,294.5 749.4,295.0 751.0,297.0 753.6,298.0 756.9,298.7 758.5,299.3 761.3,300.6 764.1,301.9 763.8,299.9 763.9,298.5 765.0,296.9 765.8,293.5 765.3,288.6 763.4,285.5 761.3,283.5 760.5,280.1 756.4,277.8 754.0,276.3 752.9,276.6 750.6,278.2" fill="#d7dae5"/>
<polygon points="535.1,344.5 535.0,342.0 534.0,337.6 532.2,333.8 530.4,332.1 529.4,329.8 525.8,328.5 523.0,328.3 521.0,329.1 520.1,332.7 518.9,337.0 518.4,340.9 518.6,343.4 517.7,344.5 514.6,344.9 517.7,347.0 519.7,348.8 521.0,349.0 522.7,348.0 525.4,348.0 528.4,350.4 529.1,350.0 530.3,349.2 532.3,346.6 535.1,344.5" fill="#b3c7da"/>
<polygon points="671.4,632.8 673.4,631.2 673.3,628.6 671.9,625.3 669.9,624.4 668.7,623.9 667.6,621.2 666.3,617.1 664.5,614.6 662.1,613.0 659.0,615.4 656.5,618.2 651.9,620.5 651.8,621.3 653.5,623.4 656.0,626.8 657.5,629.0 657.4,631.4 656.7,635.8 657.2,637.2 658.8,634.7 662.7,633.5 665.7,633.4 667.4,633.4 671.4,632.8" fill="#c8d2df"/>
<polygon points="633.1,701.9 632.9,704.2 633.3,706.3 634.9,706.3 636.2,705.1 637.2,704.0 640.9,703.3 645.8,703.8 648.5,704.4 651.2,704.1 654.4,700.1 656.8,697.4 653.2,697.6 648.8,695.4 645.1,692.1 642.4,690.2 639.8,690.1 636.5,690.1 634.8,691.4 633.7,692.6 635.2,697.1 635.5,699.9 633.1,701.9" fill="#c8d2df"/>
<polygon points="431.0,452.2 428.3,454.3 427.5,457.1 425.9,459.7 422.9,461.4 421.1,461.8 420.3,461.2 419.3,461.4 418.7,463.4 418.6,467.6 420.2,470.5 423.3,472.1 426.6,475.6 428.8,478.7 429.2,478.5 430.8,475.6 433.6,473.3 436.8,472.3 435.7,470.6 434.1,468.1 433.9,465.6 435.6,464.0 438.1,462.3 439.4,459.1 438.6,455.0 435.2,452.8 431.0,452.2" fill="#b3c7da"/>
<polygon points="636.5,690.1 639.8,690.1 642.4,690.2 645.1,692.1 648.8,695.4 653.2,697.6 656.8,697.4 657.5,696.7 656.8,694.6 655.8,692.0 656.8,688.6 659.1,685.2 658.5,684.5 657.4,683.6 655.6,680.8 652.9,678.4 649.8,678.9 647.6,679.0 647.7,680.6 645.8,681.6 641.7,682.6 639.1,684.0 638.2,686.5 636.5,690.1" fill="#b3c7da"/>
<polygon points="526.4,296.7 529.8,294.9 533.6,293.1 535.5,291.3 537.5,289.6 540.6,287.8 539.6,286.7 538.1,285.5 537.2,282.3 537.7,278.3 539.0,275.3 537.8,276.8 536.3,276.4 533.0,274.2 530.1,272.1 528.0,272.0 526.1,274.7 522.4,277.5 519.7,280.3 519.2,282.9 519.4,285.3 518.6,287.6 517.2,289.9 518.4,292.6 518.6,296.0 521.1,296.4 523.5,295.3 524.8,294.2 525.3,294.6 526.4,296.7" fill="#c8d2df"/>
<polygon points="459.5,333.6 458.8,335.0 457.6,335.9 456.8,338.9 456.3,340.5 456.2,341.1 454.8,341.5 451.7,343.3 448.9,346.6 450.8,350.8 453.8,353.4 458.4,353.7 461.6,353.7 463.4,353.0 466.3,351.9 469.6,351.1 468.9,347.7 468.6,345.2 469.5,344.1 471.6,343.2 470.8,341.0 468.7,338.2 465.5,337.4 462.1,336.6 459.5,333.6" fill="#b3c7da"/>
<polygon points="456.9,672.4 458.0,672.1 459.9,671.6 462.4,669.5 464.8,668.1 465.9,665.4 466.4,660.9 466.9,656.1 467.3,652.6 467.6,650.8 467.7,650.4 467.5,648.7 465.8,649.0 462.8,649.4 460.6,649.7 459.3,649.5 458.0,651.1 456.7,653.6 455.7,656.8 455.8,660.2 456.6,662.1 457.0,662.9 456.5,664.3 454.9,666.8 455.2,669.8 455.7,671.3 456.9,672.4" fill="#b3c7da"/>
<polygon points="683.3,258.4 682.7,261.6 682.9,263.1 685.0,266.5 688.3,270.0 691.3,271.5 692.8,274.5 694.7,273.3 697.5,271.8 701.1,271.2 701.2,269.0 700.0,266.7 700.0,264.7 702.1,263.0 704.7,260.9 706.2,258.3 707.3,255.4 708.3,253.1 708.9,251.7 707.4,251.1 706.5,249.6 702.9,247.9 699.5,245.8 697.4,244.3 695.0,244.3 691.3,245.5 688.6,247.5 688.6,249.9 688.3,252.5 686.1,254.9 684.5,256.9 683.3,258.4" fill="#d7dae5"/>
<polygon points="547.5,399.5 549.9,401.7 552.7,404.7 555.6,408.8 557.7,410.7 558.9,411.1 560.6,409.5 562.1,407.4 565.1,405.3 567.8,403.7 566.5,401.3 565.2,399.5 565.2,397.6 567.0,395.4 565.6,392.1 564.7,391.0 563.7,390.6 562.4,388.9 560.7,387.5 558.5,387.6 557.8,388.7 555.9,389.4 554.8,390.2 553.7,391.6 550.5,393.7 548.8,396.8 547.5,399.5" fill="#b3c7da"/>
<polygon points="760.4,348.8 760.7,351.0 762.7,352.6 764.6,356.3 766.5,358.5 768.9,358.9 771.4,357.7 772.9,356.5 773.2,354.5 772.5,353.2 772.1,350.9 770.7,347.8 770.8,346.6 771.5,344.9 771.3,341.1 771.2,341.0 768.6,344.3 766.9,346.7 764.2,348.2 760.4,348.8" fill="#d7dae5"/>
<polygon points="478.1,692.5 478.9,695.1 480.5,697.4 480.7,700.3 478.8,702.9 476.1,704.5 480.5,704.0 482.9,702.9 484.7,701.5 487.7,700.7 491.0,700.9 493.2,698.8 494.0,697.0 494.0,695.0 494.0,692.4 490.8,690.3 488.5,689.1 485.9,689.5 482.1,691.1 478.1,692.5" fill="#c8d2df"/>
<polygon points="712.1,642.6 710.2,640.3 708.8,637.5 707.9,638.0 705.1,640.0 702.6,641.1 702.4,641.6 701.4,642.3 698.1,644.0 695.4,646.9 695.3,649.8 695.6,651.9 697.2,655.6 699.2,656.6 701.4,658.0 704.4,659.1 706.0,657.4 706.4,655.3 708.3,653.1 712.4,650.6 713.7,649.5 714.8,646.5 713.9,644.6 712.1,642.6" fill="#b3c7da"/>
<polygon points="451.0,538.1 447.7,539.2 446.2,540.8 444.1,542.1 440.6,542.7 438.7,542.1 438.0,541.1 438.3,545.0 437.4,548.7 436.5,551.1 437.1,555.2 439.3,559.9 443.5,559.8 445.9,558.1 448.0,555.8 451.3,554.3 454.2,554.6 455.3,556.1 454.0,552.8 454.3,551.2 456.6,550.5 459.3,549.0 458.8,545.2 457.2,542.3 454.3,540.7 451.0,538.1" fill="#c8d2df"/>
<polygon points="583.9,334.0 586.6,334.6 588.4,335.3 589.6,337.3 591.0,340.3 593.9,339.6 596.4,338.3 596.9,336.3 599.0,333.8 598.8,330.5 599.9,328.2 601.3,325.7 601.9,322.0 601.0,318.5 599.2,316.7 598.0,318.6 595.4,320.1 592.1,320.0 590.4,318.4 588.1,316.7 583.5,316.6 579.7,318.3 579.8,319.9 582.1,322.9 583.0,326.4 582.7,328.0 582.2,328.7 582.6,330.9 583.9,334.0" fill="#d7dae5"/>
<polygon points="456.9,672.4 455.7,671.3 455.2,669.8 454.9,666.8 453.6,668.8 452.3,671.2 452.2,673.3 453.0,676.4 453.5,680.3 452.9,683.3 454.0,681.7 455.5,679.4 457.1,676.8 457.4,674.3 456.9,672.4" fill="#c8d2df"/>
<polygon points="558.1,529.5 558.0,529.6 560.7,529.2 563.5,530.6 565.9,532.3 567.6,533.3 569.1,535.6 570.9,539.4 573.5,541.6 575.8,541.2 577.8,539.9 578.5,538.4 579.2,537.0 579.0,535.4 580.7,531.6 582.9,527.4 583.8,524.7 582.9,522.3 581.2,520.7 579.6,519.0 578.0,518.4 574.6,519.7 571.7,520.2 569.9,519.6 566.8,518.5 562.5,518.0 559.5,518.4 560.2,522.3 560.8,525.7 560.0,528.1 558.1,529.5" fill="#b3c7da"/>
<polygon points="467.4,477.2 465.5,480.6 462.6,482.4 460.8,483.5 460.6,485.5 461.3,488.8 461.4,492.3 460.4,495.1 463.0,495.1 465.5,495.2 467.3,496.1 468.9,496.9 471.1,497.4 472.7,497.2 476.2,495.3 478.2,493.4 477.8,491.4 477.1,489.4 477.8,487.7 479.6,486.0 476.9,485.1 474.0,482.2 471.7,478.8 470.3,477.0 469.5,476.8 468.6,476.3 467.4,477.2" fill="#d7dae5"/>
<polygon points="531.3,449.7 529.7,446.1 528.6,444.2 527.6,443.9 526.1,443.1 522.9,445.8 518.4,448.9 516.2,451.9 515.3,454.3 513.4,455.8 513.6,455.9 518.0,457.7 521.6,459.6 524.0,460.4 525.7,459.6 527.3,459.1 529.2,460.7 531.3,460.6 532.7,460.6 532.5,456.7 531.0,454.2 530.2,452.2 531.3,449.7" fill="#b3c7da"/>
<polygon points="520.5,499.2 518.3,501.0 515.1,501.9 511.1,501.6 509.8,502.9 510.1,503.9 509.6,504.9 508.1,506.3 507.0,508.3 507.9,509.2 508.7,511.1 509.9,515.3 512.0,518.9 515.0,520.8 517.9,519.6 519.3,517.7 521.4,515.5 524.9,513.6 527.1,512.2 528.4,511.2 528.1,509.1 527.0,505.7 526.2,502.3 526.6,499.8 523.2,499.8 520.5,499.2" fill="#c8d2df"/>
<polygon points="399.3,539.6 397.4,537.2 396.8,532.6 397.0,528.3 393.3,527.8 391.2,528.4 390.3,528.9 388.6,532.8 388.7,533.4 390.0,535.6 392.8,538.6 396.5,539.8 397.1,539.7 399.3,539.6" fill="#c8d2df"/>
<polygon points="549.0,269.7 551.7,269.4 554.7,269.6 555.2,269.3 556.5,267.6 559.9,264.6 562.0,261.1 564.1,258.1 568.4,256.4 569.4,255.7 566.5,254.0 563.2,252.8 560.2,253.1 557.3,253.8 553.8,252.6 549.8,249.4 546.6,246.5 544.8,245.7 543.6,245.8 541.5,245.2 538.7,247.6 539.7,251.2 541.4,253.4 542.2,256.7 541.5,260.8 540.3,262.8 540.1,263.6 541.3,266.2 543.0,269.3 543.5,271.2 546.8,269.5 549.0,269.7" fill="#b3c7da"/>
<polygon points="555.7,193.0 558.2,191.9 559.9,190.5 562.1,189.1 562.0,186.5 561.4,185.0 558.3,185.9 556.1,185.7 554.2,183.5 552.1,180.7 549.5,179.0 546.6,177.8 543.8,176.7 545.9,178.8 548.4,180.3 551.0,184.1 553.1,188.6 554.5,190.8 555.7,193.0" fill="#c8d2df"/>
<polygon points="604.1,568.5 605.7,569.6 607.7,572.1 610.8,575.5 614.2,576.8 614.1,573.8 614.3,569.4 617.2,564.7 621.0,561.0 622.8,558.9 623.1,558.1 620.9,557.4 619.2,556.0 617.6,554.5 615.9,554.6 613.9,554.7 610.6,555.6 609.1,555.7 609.0,555.5 607.2,555.9 604.6,557.2 603.2,559.6 603.9,562.3 603.9,566.0 604.1,568.5" fill="#b3c7da"/>
<polygon points="586.8,402.5 585.0,404.3 582.8,407.7 581.2,412.2 580.2,415.0 579.6,416.8 579.6,418.0 581.9,419.0 584.4,421.0 587.3,422.7 590.3,424.2 594.5,425.0 598.3,425.0 599.9,424.7 601.3,424.4 601.7,419.7 602.0,415.7 602.5,413.4 603.5,412.0 605.5,410.2 604.5,407.8 603.3,407.1 600.9,408.2 597.0,408.4 592.5,406.6 588.7,404.0 587.8,403.1 586.8,402.5" fill="#d7dae5"/>
<polygon points="391.8,430.6 389.3,433.7 388.7,437.4 389.2,441.1 391.0,444.3 391.3,445.4 390.4,446.3 389.5,448.7 389.5,451.4 392.9,450.5 394.4,450.4 395.9,452.1 398.4,452.4 401.0,452.0 402.5,450.3 406.0,447.4 410.7,444.0 411.1,443.4 410.2,442.3 408.4,439.8 406.1,436.9 404.1,436.0 401.3,436.3 398.5,435.1 396.8,432.8 395.1,430.9 391.8,430.6" fill="#c8d2df"/>
<polygon points="466.9,635.2 466.4,639.6 467.3,642.8 468.4,644.2 468.5,645.8 467.5,648.7 467.7,650.4 470.0,650.2 474.5,650.8 478.0,651.3 480.1,650.8 483.6,649.0 487.5,646.2 489.0,643.2 490.2,640.9 489.7,638.8 489.9,636.1 491.0,633.3 491.0,631.8 488.0,632.2 484.2,632.9 481.5,632.7 480.1,631.4 478.8,630.0 475.1,629.8 471.9,630.2 470.2,632.0 466.9,635.2" fill="#b3c7da"/>
<polygon points="479.6,486.0 481.6,484.6 482.9,481.8 485.4,478.7 487.8,475.1 488.4,471.7 487.3,469.2 486.4,467.7 484.2,467.9 482.7,466.9 481.6,465.0 480.7,464.1 479.5,463.1 476.0,464.2 472.8,464.3 471.5,464.4 470.0,465.5 468.2,468.1 468.1,472.0 468.6,476.3 469.5,476.8 470.3,477.0 471.7,478.8 474.0,482.2 476.9,485.1 479.6,486.0" fill="#d7dae5"/>
<polygon points="592.9,707.9 588.6,705.1 585.6,702.0 583.9,700.9 581.4,701.7 578.5,703.2 577.3,705.7 578.0,709.1 579.8,712.9 580.7,715.5 580.3,717.2 579.3,719.7 581.7,717.4 583.2,715.1 583.6,712.3 583.4,710.0 583.2,707.4 583.3,704.6 586.8,706.8 589.3,708.9 592.8,709.7 595.8,709.7 594.0,709.3 592.9,707.9" fill="#9dbbd4"/>
<polygon points="568.4,489.1 565.8,489.3 562.4,489.2 559.2,488.5 556.4,487.8 553.8,487.3 552.5,488.5 550.4,489.8 549.2,491.2 548.5,492.6 549.0,496.6 549.2,499.4 550.2,500.8 552.4,503.9 555.3,507.6 557.3,508.5 559.0,508.0 561.5,507.6 563.5,505.5 563.4,503.9 563.2,502.6 563.3,500.6 565.3,496.7 567.7,492.0 568.4,489.1" fill="#b3c7da"/>
<polygon points="641.3,315.2 638.7,313.5 637.5,310.3 637.2,309.0 636.6,308.5 634.9,305.5 632.5,302.8 630.7,301.3 630.4,303.1 628.9,303.7 626.3,303.3 625.5,303.1 624.2,303.8 620.5,305.6 617.4,308.2 615.3,310.8 611.1,312.7 606.7,313.7 608.6,315.4 611.6,317.5 615.3,320.3 618.8,321.1 621.6,320.7 623.1,322.2 623.7,324.8 623.9,326.2 624.6,328.0 626.3,331.6 630.2,332.3 633.6,332.1 635.6,330.9 637.5,327.6 640.3,323.6 642.3,319.8 642.3,316.9 641.3,315.2" fill="#9dbbd4"/>
<polygon points="461.9,702.8 458.5,704.7 455.0,706.0 455.9,707.1 457.1,708.4 460.4,708.2 462.5,707.0 463.3,705.1 462.8,703.8 462.5,703.6 461.9,702.8" fill="#c8d2df"/>
<polygon points="731.1,312.1 730.6,314.8 729.1,318.0 727.0,320.8 729.1,325.2 729.7,327.5 729.1,328.6 728.5,331.2 729.5,333.1 732.1,333.3 735.3,335.4 739.9,336.2 743.3,338.1 745.0,339.7 747.9,339.8 751.1,338.3 750.5,336.2 749.9,333.3 751.2,329.6 754.2,325.8 757.1,322.7 756.8,321.7 756.0,321.7 756.9,320.3 756.1,319.0 753.6,316.2 751.5,314.3 749.1,316.1 744.7,317.3 740.7,316.8 738.8,314.7 736.7,312.4 733.3,311.3 731.1,312.1" fill="#b3c7da"/>
<polygon points="643.9,523.1 641.4,519.8 640.1,516.8 640.5,515.1 641.4,512.1 641.6,507.5 640.4,506.8 638.6,507.4 635.7,509.7 631.5,510.6 628.9,509.8 626.4,508.3 623.8,510.1 620.8,511.8 618.9,513.8 616.2,516.2 617.1,516.8 618.9,518.5 622.5,519.9 625.3,521.8 627.8,523.3 630.4,524.6 633.3,526.3 635.7,528.0 637.1,525.9 638.2,523.8 641.4,522.8 643.9,523.1" fill="#b3c7da"/>
<polygon points="684.6,703.9 686.0,706.1 687.8,709.1 690.4,710.0 693.7,709.2 697.5,710.4 699.9,710.1 702.4,710.3 699.8,707.2 697.5,705.7 696.2,704.2 695.8,701.0 695.8,697.8 693.0,699.2 690.5,700.6 689.1,701.1 687.8,703.1 684.6,703.9" fill="#d7dae5"/>
<polygon points="504.8,176.8 506.5,174.0 508.1,171.5 506.0,172.3 503.6,173.6 501.9,174.7 501.8,174.8 501.5,174.8 500.3,176.3 499.9,178.4 501.5,177.4 504.8,176.8" fill="#b3c7da"/>
<polygon points="567.0,365.2 566.3,362.8 565.6,361.0 561.1,362.4 558.1,364.2 556.0,365.7 552.4,366.2 548.8,365.6 547.3,364.7 546.0,364.2 546.4,366.8 547.2,369.7 547.1,374.4 549.1,377.9 551.3,379.8 553.5,382.5 555.9,386.0 558.2,387.2 558.4,385.5 559.8,383.2 562.6,380.7 565.3,376.6 566.8,372.4 566.6,369.6 565.8,368.4 565.9,367.5 567.0,365.2" fill="#b3c7da"/>
<polygon points="394.5,403.8 396.3,403.5 397.9,403.0 398.6,401.8 400.3,399.8 400.4,397.8 398.0,398.5 396.1,398.5 392.7,398.3 390.5,398.9 392.1,400.9 394.5,403.8" fill="#d7dae5"/>
<polygon points="459.9,671.6 458.0,672.1 456.9,672.4 457.4,674.3 457.1,676.8 455.5,679.4 454.0,681.7 452.9,683.3 451.5,684.4 450.0,685.3 449.7,687.1 453.6,690.9 457.7,693.3 461.1,695.1 462.1,694.3 464.7,692.9 467.0,691.2 467.4,689.3 468.8,687.7 472.0,686.5 474.0,685.6 475.5,684.7 476.7,683.1 477.8,681.7 476.1,678.6 474.2,675.0 471.7,673.7 468.2,673.7 463.9,672.9 459.9,671.6" fill="#b3c7da"/>
<polygon points="601.2,493.2 601.9,494.5 602.2,497.8 603.0,501.1 604.9,502.5 607.7,504.7 610.3,508.5 611.6,511.0 611.4,512.6 610.6,516.2 612.6,517.2 616.2,516.2 618.9,513.8 620.8,511.8 623.8,510.1 626.4,508.3 624.1,504.6 622.0,502.3 621.2,499.0 621.9,494.4 622.8,491.8 622.5,490.6 620.9,488.1 619.1,485.3 617.6,486.5 615.5,487.9 611.4,488.5 607.7,487.8 605.6,486.3 603.3,484.9 602.5,487.6 601.6,490.5 601.2,493.2" fill="#9dbbd4"/>
<polygon points="630.1,600.8 629.7,599.7 629.5,596.8 628.9,593.1 627.4,590.7 624.9,592.1 622.1,594.3 620.5,596.9 618.2,599.3 615.6,601.6 613.6,604.5 613.7,607.2 615.4,609.1 617.3,608.9 619.1,609.6 621.9,608.2 624.1,607.8 624.8,608.5 626.5,609.8 629.9,610.8 629.3,608.8 628.8,605.9 629.0,603.1 630.1,600.8" fill="#b3c7da"/>
<polygon points="481.6,381.6 479.4,383.8 478.5,386.1 479.2,388.9 480.3,392.2 481.1,395.4 481.2,396.4 481.0,396.8 481.4,398.5 485.0,398.0 489.7,398.1 492.5,398.7 494.8,399.3 498.9,397.5 502.3,394.9 501.4,391.5 499.0,387.8 495.8,386.0 493.2,383.9 489.7,381.2 486.0,379.1 483.9,379.1 483.2,380.5 481.6,381.6" fill="#b3c7da"/>
<polygon points="636.7,621.9 637.8,625.8 638.7,628.5 638.7,629.9 637.7,631.9 636.4,634.8 639.5,634.9 643.3,635.7 645.7,636.5 648.8,637.0 653.5,636.7 656.7,635.8 657.4,631.4 657.5,629.0 656.0,626.8 653.5,623.4 651.8,621.3 651.9,620.5 648.7,620.4 647.5,618.2 646.7,615.4 644.7,613.9 642.3,613.9 640.4,614.3 638.9,615.7 638.0,618.2 636.7,621.9" fill="#b3c7da"/>
<polygon points="424.5,513.8 424.0,514.0 423.7,513.6 422.3,510.5 419.4,507.0 415.3,505.6 411.3,504.4 411.6,506.5 410.2,509.3 406.5,512.5 403.8,515.8 401.4,518.4 402.0,521.7 405.2,523.0 407.6,522.7 410.1,521.5 413.2,521.6 416.4,523.6 418.7,526.5 418.2,525.1 418.6,522.8 420.9,520.0 422.9,517.0 424.3,514.2 424.5,513.8" fill="#b3c7da"/>
<polygon points="543.5,514.0 541.1,516.0 539.9,517.7 540.5,520.3 543.5,521.2 547.0,521.8 550.6,522.4 553.2,524.4 554.6,527.5 555.9,529.6 558.1,529.5 560.0,528.1 560.8,525.7 560.2,522.3 559.5,518.4 558.9,515.1 559.9,513.3 561.2,510.8 561.5,507.6 559.0,508.0 557.3,508.5 555.3,507.6 552.5,507.8 549.4,508.8 547.7,510.9 543.5,514.0" fill="#b3c7da"/>
<polygon points="629.3,660.2 627.6,658.6 626.2,657.2 624.8,659.4 622.7,662.7 621.2,666.3 619.6,669.5 619.3,670.8 620.5,672.1 622.9,675.4 625.1,677.6 626.1,679.0 628.2,678.7 628.9,678.9 630.7,678.8 632.6,677.6 633.1,675.2 634.4,671.6 638.2,667.8 636.8,665.1 634.9,664.0 632.3,663.3 629.3,660.2" fill="#b3c7da"/>
<polygon points="618.1,706.7 616.6,707.1 613.7,710.1 611.5,712.1 610.9,713.0 608.9,712.8 612.5,714.5 615.0,715.4 619.0,715.0 623.1,713.7 620.9,710.0 618.1,706.7" fill="#b3c7da"/>
<polygon points="675.3,621.0 679.1,622.1 682.0,623.9 684.6,625.2 687.8,626.0 691.4,626.8 694.3,627.6 693.6,623.5 692.5,620.5 693.1,618.7 695.8,617.4 695.7,616.2 694.9,614.0 693.1,613.2 690.1,612.5 687.5,612.7 685.9,611.8 683.2,610.2 679.8,609.1 679.1,612.0 677.8,614.3 676.3,616.9 675.3,621.0" fill="#9dbbd4"/>
<polygon points="449.0,272.9 451.3,273.6 453.5,274.3 454.6,275.1 455.3,276.6 457.1,278.6 460.5,280.0 463.5,278.5 465.4,275.5 466.2,272.9 466.5,271.1 466.7,269.3 467.0,266.8 462.5,266.9 459.3,266.5 458.4,267.5 456.3,267.2 453.3,266.2 452.3,265.8 450.7,266.7 446.8,268.6 445.7,269.3 448.2,270.0 449.0,272.9" fill="#b3c7da"/>
<polygon points="422.5,427.0 418.1,426.3 414.9,425.0 413.5,424.4 411.4,425.0 408.4,428.9 405.6,432.2 404.5,434.5 404.1,436.0 406.1,436.9 408.4,439.8 410.2,442.3 411.1,443.4 413.5,441.1 416.4,440.2 420.7,440.5 423.2,441.2 424.3,441.3 424.8,439.6 425.7,437.9 426.3,435.4 425.6,433.7 425.0,430.7 424.1,428.5 422.5,427.0" fill="#d7dae5"/>
<polygon points="513.6,455.9 514.1,458.1 514.3,460.7 513.8,462.8 512.7,463.9 511.6,465.5 514.4,468.5 517.0,472.0 519.1,473.8 520.8,474.1 522.3,475.0 522.9,471.2 523.6,468.6 523.9,467.0 524.3,465.5 526.1,463.4 529.2,460.7 527.3,459.1 525.7,459.6 524.0,460.4 521.6,459.6 518.0,457.7 513.6,455.9" fill="#b3c7da"/>
<polygon points="571.7,656.5 573.6,660.7 575.2,663.7 575.8,665.7 575.6,669.1 575.5,672.9 576.6,674.4 580.6,672.8 582.9,672.4 585.0,673.9 587.1,672.0 589.3,670.1 590.5,668.4 591.4,665.8 592.0,664.5 591.5,662.4 590.0,659.3 587.2,656.9 584.3,656.3 580.0,657.2 575.5,657.8 573.1,657.1 571.7,655.5 571.7,656.5" fill="#c8d2df"/>
<polygon points="458.5,495.9 457.4,497.5 454.9,498.6 451.8,499.8 450.6,501.7 451.7,504.2 452.2,507.1 453.1,508.7 454.5,509.5 456.0,511.7 459.1,513.7 463.2,514.1 466.1,512.9 467.2,510.5 468.2,508.2 469.3,505.4 469.6,502.5 469.5,499.7 471.1,497.4 468.9,496.9 467.3,496.1 465.5,495.2 463.0,495.1 460.4,495.1 458.5,495.9" fill="#b3c7da"/>
<polygon points="702.6,594.7 703.2,597.8 703.2,601.7 703.7,603.3 705.5,605.1 708.8,607.8 710.3,607.2 711.2,604.7 711.5,602.4 710.6,601.3 710.4,601.6 710.3,601.0 709.6,598.3 707.4,595.3 704.0,593.6 703.3,594.2 702.6,594.7" fill="#c8d2df"/>
<polygon points="540.9,700.9 544.3,701.1 545.8,700.4 547.0,699.9 550.8,698.7 553.7,697.9 554.6,697.1 557.0,695.7 556.2,694.7 555.1,692.7 554.9,689.8 555.7,687.8 554.5,686.9 552.2,683.8 549.3,680.0 546.4,678.7 545.2,680.5 541.8,682.4 537.5,684.3 535.3,686.3 533.6,688.3 530.9,690.3 533.5,694.5 536.5,696.8 539.1,698.2 540.9,700.9" fill="#b3c7da"/>
<polygon points="492.8,579.2 490.1,578.6 488.2,579.5 485.6,581.3 481.7,582.6 478.3,582.4 477.2,584.3 476.2,585.0 476.0,586.8 476.5,590.4 477.0,594.0 477.0,596.5 480.3,597.6 483.5,599.2 485.5,600.3 486.2,600.2 486.5,599.5 489.4,596.9 493.2,595.1 494.6,594.2 494.7,593.6 496.0,592.8 497.4,590.9 495.6,588.0 494.6,586.3 493.9,583.5 492.8,579.2" fill="#b3c7da"/>
<polygon points="588.5,350.7 592.1,354.5 595.5,356.2 598.6,355.9 601.2,356.6 603.9,355.1 606.3,354.1 606.9,353.8 607.5,354.0 606.9,350.1 607.5,347.4 609.2,346.3 611.1,345.3 612.1,343.1 610.8,339.3 607.9,337.4 603.6,336.1 599.0,333.8 596.9,336.3 596.4,338.3 593.9,339.6 591.0,340.3 590.7,343.4 589.8,345.7 588.9,347.8 588.5,350.7" fill="#d7dae5"/>
<polygon points="640.2,581.2 639.6,583.0 640.3,585.9 642.6,589.7 645.6,591.4 647.8,593.2 649.6,595.6 651.4,597.6 652.7,598.6 655.1,598.2 658.0,596.8 658.9,594.6 658.5,591.8 659.4,588.7 658.3,584.5 658.4,581.9 659.5,580.7 660.5,578.5 660.4,575.7 658.9,574.7 657.3,575.1 653.7,576.9 651.7,577.9 649.6,578.2 645.2,578.3 642.1,579.2 640.2,581.2" fill="#b3c7da"/>
<polygon points="635.7,528.0 633.3,526.3 630.4,524.6 627.8,523.3 625.3,521.8 622.5,519.9 618.9,518.5 619.0,523.4 619.0,527.7 618.6,530.2 617.4,532.0 615.8,534.7 614.7,538.2 615.0,541.3 619.0,539.6 622.7,538.2 624.5,538.3 625.7,540.1 628.0,542.6 631.3,544.1 632.4,543.5 630.4,540.9 629.6,537.4 631.1,534.7 633.9,532.1 635.7,528.0" fill="#d7dae5"/>
<polygon points="558.5,457.2 558.2,460.5 556.7,462.8 554.8,464.4 554.1,467.7 554.9,472.6 555.9,476.4 558.9,475.1 561.0,473.0 564.4,471.7 568.9,471.9 571.9,473.5 573.3,475.2 575.4,475.6 578.6,474.6 578.4,472.8 577.2,470.5 576.9,467.6 578.5,464.8 578.9,464.2 577.5,465.2 576.1,464.1 573.3,461.1 569.1,458.6 565.2,457.9 562.9,458.1 561.2,458.0 558.5,457.2" fill="#d7dae5"/>
<polygon points="590.5,668.4 589.3,670.1 587.1,672.0 585.0,673.9 586.5,677.0 587.7,678.4 588.1,679.7 587.4,682.3 586.5,685.2 587.8,686.7 591.2,687.3 595.5,686.6 598.3,685.4 600.0,683.5 602.7,681.5 605.6,679.5 606.8,677.4 604.6,674.3 602.2,670.5 600.5,668.1 598.1,669.2 594.8,670.5 591.8,670.2 590.5,668.4" fill="#d7dae5"/>
<polygon points="631.3,544.1 628.0,542.6 625.7,540.1 624.5,538.3 622.7,538.2 619.0,539.6 615.0,541.3 614.6,542.0 616.2,544.3 616.5,547.6 615.4,551.8 613.9,554.7 615.9,554.6 617.6,554.5 619.2,556.0 620.9,557.4 623.1,558.1 626.5,558.8 630.2,559.8 632.2,560.3 629.8,557.9 628.1,555.8 628.2,552.1 629.6,547.8 631.0,545.3 631.3,544.1" fill="#c8d2df"/>
<polygon points="500.1,253.8 501.8,257.1 502.4,260.5 502.5,261.9 503.1,263.4 504.7,266.4 506.8,268.4 510.1,268.0 512.4,268.4 513.3,269.2 516.1,269.3 520.2,268.4 519.1,264.2 518.9,261.6 520.0,259.5 521.4,256.5 522.2,253.6 521.9,251.9 521.3,250.0 520.6,249.8 518.6,251.2 516.5,251.9 518.7,253.4 516.6,253.7 515.4,251.9 511.8,249.3 508.4,248.7 506.8,249.5 504.2,251.5 500.1,253.8" fill="#b3c7da"/>
<polygon points="678.9,509.6 675.7,510.2 672.5,511.1 670.2,510.3 669.9,510.7 668.2,510.0 664.9,509.0 663.0,508.8 662.2,511.7 660.7,514.3 661.2,515.3 662.1,517.7 663.5,521.6 663.5,520.4 665.5,519.2 669.1,517.3 671.2,515.1 674.5,512.7 679.0,510.2 678.9,509.6" fill="#d7dae5"/>
<polygon points="531.1,499.0 529.8,499.0 526.6,499.8 526.2,502.3 527.0,505.7 528.1,509.1 528.4,511.2 527.1,512.2 524.9,513.6 526.2,515.5 527.5,518.2 529.2,519.9 531.6,521.9 534.5,525.3 537.1,523.9 539.7,522.2 540.5,520.3 539.9,517.7 541.1,516.0 543.5,514.0 541.4,512.1 538.9,509.6 536.2,508.5 533.7,506.7 532.0,502.6 531.1,499.0" fill="#d7dae5"/>
<polygon points="659.1,392.7 663.5,391.8 666.9,392.0 667.9,392.6 670.3,392.3 672.7,390.6 671.6,386.8 671.0,382.4 672.7,378.8 675.9,376.8 678.3,375.6 677.1,375.1 674.9,373.4 671.9,372.0 667.7,371.9 665.4,370.9 662.3,369.9 658.1,369.8 655.9,370.6 654.8,371.6 651.8,372.1 648.9,371.7 647.4,371.2 647.4,374.2 644.9,378.0 641.9,380.8 640.9,381.9 642.9,383.1 645.8,386.3 649.2,389.6 652.4,390.6 655.0,390.5 657.1,391.4 659.1,392.7" fill="#d7dae5"/>
<polygon points="725.9,479.1 723.6,482.5 721.3,484.6 720.8,486.5 722.3,489.0 724.0,491.4 724.1,491.4 724.9,492.0 727.4,491.6 729.8,489.7 730.2,486.6 732.6,483.1 736.2,480.6 737.8,479.6 740.0,479.7 744.1,480.1 743.8,476.2 742.3,474.1 738.8,472.8 737.3,473.0 736.7,474.0 734.1,475.6 730.5,477.3 728.4,478.5 725.9,479.1" fill="#d7dae5"/>
<polygon points="414.3,567.7 413.7,564.2 412.9,562.7 411.4,560.8 409.0,557.6 409.0,557.8 407.5,562.1 406.5,566.0 403.9,568.9 400.1,570.4 397.8,570.9 400.2,572.2 403.6,575.2 407.0,577.3 409.2,575.3 410.6,573.4 410.7,571.5 411.5,569.6 414.3,567.7" fill="#d7dae5"/>
<polygon points="511.3,593.2 514.9,594.2 516.1,595.2 518.3,595.1 521.4,593.3 522.5,590.4 524.0,588.0 527.8,587.0 526.5,585.7 526.4,583.6 527.3,580.7 528.3,578.8 528.3,577.7 527.0,575.1 525.6,575.7 521.8,576.6 518.0,576.9 515.6,576.2 512.0,575.1 510.4,575.3 508.8,576.3 507.4,578.7 505.1,582.5 502.2,586.7 500.8,590.4 504.1,590.5 507.8,590.9 511.3,593.2" fill="#9dbbd4"/>
<polygon points="543.5,613.5 541.0,615.0 537.9,616.2 536.1,615.7 535.3,613.7 532.3,615.6 528.2,618.0 526.6,620.6 526.4,623.0 528.1,624.3 529.2,626.7 528.8,629.5 527.3,631.0 528.1,631.9 529.5,635.1 531.6,635.9 534.3,636.3 539.2,635.5 542.9,633.6 545.4,631.5 549.7,629.9 548.9,625.7 547.0,622.4 544.7,620.7 543.2,618.4 543.0,615.2 543.5,613.5" fill="#b3c7da"/>
<polygon points="482.8,295.2 485.0,294.2 487.1,295.0 490.2,296.9 493.5,298.5 494.9,296.8 496.5,295.0 499.7,293.1 502.7,290.8 502.9,287.9 502.2,284.7 500.5,283.6 499.9,281.1 500.1,277.3 498.4,277.0 496.5,276.5 493.3,275.4 489.4,273.8 487.3,276.9 486.2,279.1 486.0,280.4 486.2,281.9 483.2,282.2 480.4,283.0 479.0,284.3 479.2,285.3 481.4,286.8 482.8,290.2 483.1,293.4 482.8,295.2" fill="#c8d2df"/>
<polygon points="728.5,349.3 726.1,351.5 725.2,352.6 723.0,352.6 720.5,352.1 721.1,353.9 721.1,357.0 719.1,360.4 715.9,363.1 716.7,365.0 719.0,368.7 722.0,372.4 724.5,374.0 728.8,375.5 731.2,377.2 732.1,377.9 733.7,377.2 737.6,375.3 739.3,373.7 740.2,372.5 743.0,371.4 744.9,370.1 745.7,368.4 749.0,366.4 746.0,364.7 744.2,363.2 743.5,362.4 743.2,359.5 742.2,355.5 740.0,353.7 736.4,352.8 732.3,350.7 728.5,349.3" fill="#c8d2df"/>
<polygon points="491.0,633.3 492.9,635.6 494.8,638.1 498.1,639.1 500.4,638.0 501.7,635.9 504.9,634.6 509.4,635.3 510.2,631.9 510.8,629.7 510.6,627.1 509.1,623.7 507.3,621.0 505.6,620.5 504.2,621.2 501.9,621.2 498.7,620.1 495.9,618.8 493.9,617.7 493.3,618.8 492.9,621.5 492.7,625.4 492.7,628.9 492.4,630.9 491.0,631.8 491.0,633.3" fill="#d7dae5"/>
<polygon points="464.4,600.1 464.6,600.0 464.7,598.6 463.2,598.0 460.1,596.8 457.2,595.5 455.3,594.5 452.8,594.1 448.8,594.0 446.9,595.8 445.2,597.6 447.6,596.8 451.5,595.9 454.6,596.2 455.9,598.5 457.0,601.4 459.1,603.0 461.7,602.6 463.6,601.3 463.7,601.3 463.9,600.6 464.4,600.1" fill="#d7dae5"/>
<polygon points="600.8,220.9 598.6,223.3 596.8,226.4 597.6,228.6 599.6,229.8 602.4,233.0 602.2,229.1 604.2,226.7 606.7,225.9 608.4,225.8 610.7,225.3 612.2,223.2 612.8,220.2 609.2,219.9 606.9,219.5 605.0,219.7 600.8,220.9" fill="#d7dae5"/>
<polygon points="594.6,393.3 597.8,392.2 602.3,390.7 605.1,389.8 607.4,390.0 611.3,390.9 614.5,391.8 615.6,391.7 617.4,390.7 616.1,389.3 614.6,388.1 613.7,384.9 613.8,381.0 614.5,378.8 610.7,378.4 607.8,376.2 605.9,373.5 603.4,372.4 600.2,373.4 597.7,376.9 596.2,379.8 593.0,381.7 589.4,382.6 588.7,383.4 590.3,387.0 592.1,389.0 593.6,390.4 594.6,393.3" fill="#b3c7da"/>
<polygon points="555.1,301.4 554.6,301.3 551.8,302.4 551.4,303.1 549.8,303.9 546.6,305.3 545.0,307.3 542.8,309.3 538.2,310.8 535.0,311.2 535.2,314.3 536.6,318.5 538.9,320.9 540.6,323.5 541.3,324.3 542.1,324.8 543.5,324.8 547.4,322.9 550.4,322.0 552.0,321.9 555.3,321.9 559.0,321.4 560.6,320.0 558.1,319.5 556.4,317.3 556.2,313.7 557.0,311.1 557.4,309.0 556.6,305.4 555.1,301.4" fill="#c8d2df"/>
<polygon points="464.7,598.6 464.7,595.7 463.5,593.9 461.9,591.8 461.3,588.1 462.3,584.0 464.0,581.5 460.5,582.1 457.9,581.2 455.9,578.9 453.2,576.8 449.7,576.2 447.2,577.4 446.5,579.1 445.9,581.6 444.9,585.5 444.8,588.6 446.1,589.6 447.9,590.9 448.8,594.0 452.8,594.1 455.3,594.5 457.2,595.5 460.1,596.8 463.2,598.0 464.7,598.6" fill="#d7dae5"/>
<polygon points="573.2,488.8 571.7,489.3 569.4,488.9 569.0,488.5 568.4,489.1 567.7,492.0 565.3,496.7 563.3,500.6 563.2,502.6 566.4,503.8 570.4,506.2 573.7,508.4 576.3,508.8 579.5,507.4 582.5,503.9 583.8,501.0 584.9,499.5 588.7,499.4 587.7,496.8 586.4,493.4 584.4,492.1 581.6,492.3 578.4,490.9 575.4,489.2 573.2,488.8" fill="#c8d2df"/>
<polygon points="695.8,697.8 695.8,701.0 696.2,704.2 697.5,705.7 699.8,707.2 702.4,710.3 704.0,710.9 704.6,711.6 702.8,707.0 702.4,703.7 703.4,700.9 704.2,696.4 703.4,692.7 699.9,693.2 698.1,695.0 695.8,697.8" fill="#b3c7da"/>
<polygon points="442.9,338.7 438.8,337.9 435.1,336.1 432.9,334.6 430.7,334.2 427.4,335.3 426.6,338.7 426.0,342.4 425.2,345.7 425.2,347.1 426.1,346.9 428.4,349.0 431.8,351.4 435.3,352.5 437.5,352.6 438.8,352.8 439.1,351.9 442.2,349.4 443.3,346.3 444.2,342.5 444.2,340.1 442.9,338.7" fill="#b3c7da"/>
<polygon points="664.1,416.9 665.0,418.8 666.2,421.8 666.2,424.5 664.6,426.8 662.9,430.1 662.5,434.2 665.0,437.0 668.3,438.1 672.1,438.3 675.2,438.8 677.1,439.5 678.9,439.5 682.1,440.2 686.4,442.6 686.7,439.4 685.2,437.0 684.8,435.0 687.3,432.5 690.6,429.7 689.9,427.7 688.3,426.6 686.1,423.3 684.1,419.0 682.9,416.5 682.8,413.5 682.9,409.0 678.1,410.5 675.3,413.1 671.9,415.7 666.9,417.0 664.1,416.9" fill="#d7dae5"/>
<polygon points="521.2,650.2 520.3,650.2 520.0,650.8 518.9,650.5 516.3,648.2 513.1,645.0 511.1,645.8 509.1,647.5 505.4,650.4 501.8,653.9 504.1,655.6 507.1,656.9 510.0,660.4 511.8,663.7 512.1,665.2 511.8,668.0 512.8,668.8 516.2,667.9 517.6,666.0 519.5,663.1 522.0,659.7 522.6,656.6 520.8,655.1 520.2,653.0 521.2,650.2" fill="#b3c7da"/>
<polygon points="535.9,704.9 538.2,705.4 540.8,704.6 543.1,703.8 544.7,703.9 545.4,705.3 545.7,702.1 547.0,699.9 545.8,700.4 544.3,701.1 540.9,700.9 538.2,703.2 535.9,704.9" fill="#c8d2df"/>
<polygon points="500.9,456.8 498.7,454.4 496.1,453.2 493.4,451.5 490.9,448.1 488.9,445.3 485.3,446.0 483.7,447.4 481.8,449.4 478.9,451.7 477.6,453.9 477.7,455.6 479.2,459.8 479.5,463.1 480.7,464.1 481.6,465.0 482.7,466.9 484.2,467.9 486.4,467.7 489.5,467.4 492.7,468.3 494.2,469.8 495.1,470.9 496.0,467.0 498.5,464.0 501.0,461.9 501.9,459.6 500.9,456.8" fill="#d7dae5"/>
<polygon points="502.6,360.0 500.2,357.5 497.4,355.6 494.6,354.1 492.2,350.8 490.3,346.6 489.0,344.7 487.4,347.2 485.0,349.8 483.5,352.6 483.9,355.5 483.0,358.6 479.3,361.5 481.1,362.3 482.7,362.9 484.3,364.5 485.9,366.4 487.4,365.0 489.2,364.5 492.8,364.9 495.3,365.5 495.8,364.0 497.6,363.1 500.4,362.0 502.6,360.0" fill="#c8d2df"/>
<polygon points="562.1,604.6 560.3,602.6 560.5,601.0 562.0,597.9 562.9,595.2 562.1,593.4 557.6,594.2 554.0,593.4 551.9,591.5 550.3,589.8 547.9,588.7 544.9,588.0 543.8,589.3 544.1,590.5 544.1,591.9 545.7,592.2 545.9,594.6 545.1,597.7 544.4,599.5 544.8,601.6 546.6,605.8 549.2,609.5 552.1,609.9 554.7,609.7 559.2,608.3 562.4,606.4 562.1,604.6" fill="#b3c7da"/>
<polygon points="686.0,217.9 686.0,218.1 683.6,217.1 682.4,214.4 683.1,210.4 684.7,207.4 681.2,207.0 680.0,207.2 677.0,209.5 673.2,211.4 671.7,213.1 671.8,215.0 670.6,217.4 669.7,218.6 672.8,218.7 674.8,218.0 676.0,217.1 678.8,216.6 683.0,216.9 686.0,217.9" fill="#9dbbd4"/>
<polygon points="576.6,674.4 573.8,676.0 573.3,676.7 572.8,676.9 570.3,677.2 572.1,681.4 573.0,685.5 573.7,687.6 575.3,690.9 577.7,694.7 580.4,694.0 581.9,692.7 581.3,690.0 582.3,687.8 584.6,686.2 586.5,685.2 587.4,682.3 588.1,679.7 587.7,678.4 586.5,677.0 585.0,673.9 582.9,672.4 580.6,672.8 576.6,674.4" fill="#c8d2df"/>
<polygon points="458.5,561.8 457.0,559.8 455.3,556.1 454.2,554.6 451.3,554.3 448.0,555.8 445.9,558.1 443.5,559.8 439.3,559.9 438.4,561.3 439.9,562.8 440.2,564.8 439.8,568.1 440.0,570.4 441.5,572.0 443.6,575.4 444.8,579.9 446.0,580.1 446.5,579.1 447.2,577.4 449.0,574.3 450.1,571.8 449.5,569.7 450.4,567.9 454.3,566.0 457.5,564.0 458.5,561.8" fill="#d7dae5"/>
<polygon points="657.5,242.2 659.8,239.6 661.1,235.6 661.1,231.6 660.2,229.3 659.6,228.3 660.0,226.8 659.4,227.4 657.9,227.4 655.0,227.6 651.4,227.7 648.2,229.4 646.7,230.8 643.5,232.2 641.7,233.8 641.5,235.8 643.5,237.4 645.9,238.9 649.6,239.9 653.7,241.0 656.4,242.0 657.5,242.2" fill="#b3c7da"/>
<polygon points="695.9,498.2 693.8,499.2 689.3,501.0 685.8,502.0 684.7,502.6 682.9,503.4 680.6,504.9 680.1,507.1 678.9,509.6 679.0,510.2 680.6,508.4 681.2,506.8 684.3,506.4 688.1,506.3 689.6,505.8 691.2,504.6 694.4,503.0 696.2,501.7 695.5,499.5 695.6,498.6 695.9,498.2" fill="#d7dae5"/>
<polygon points="671.4,632.8 672.6,632.7 674.1,633.7 676.0,635.8 678.3,636.7 680.9,637.5 683.3,640.6 684.2,641.1 684.9,638.9 686.5,637.6 687.7,636.9 689.6,635.6 692.6,632.8 694.6,628.5 694.3,627.6 691.4,626.8 687.8,626.0 684.6,625.2 682.0,623.9 679.1,622.1 675.3,621.0 672.9,623.1 671.9,625.3 673.3,628.6 673.4,631.2 671.4,632.8" fill="#b3c7da"/>
<polygon points="579.9,381.2 583.8,380.3 587.2,381.0 588.7,383.4 589.4,382.6 593.0,381.7 596.2,379.8 597.7,376.9 600.2,373.4 598.7,372.3 596.7,369.5 594.7,366.8 592.0,367.6 590.0,367.4 585.9,366.5 581.2,365.8 578.6,366.0 578.4,367.2 580.3,371.2 582.1,373.1 582.6,374.1 581.6,376.4 580.3,379.3 579.9,381.2" fill="#d7dae5"/>
<polygon points="449.0,272.9 447.0,276.8 445.3,280.6 442.6,283.5 440.1,285.3 439.6,285.9 442.1,287.0 443.9,289.7 444.2,292.5 443.5,293.8 442.8,295.4 444.1,293.5 447.4,292.2 451.0,292.0 453.2,293.0 455.9,294.6 460.4,295.6 462.3,292.7 461.9,289.1 460.0,286.0 459.1,283.4 460.5,280.0 457.1,278.6 455.3,276.6 454.6,275.1 453.5,274.3 451.3,273.6 449.0,272.9" fill="#d7dae5"/>
<polygon points="430.3,579.8 429.6,579.6 426.1,581.4 423.4,583.1 418.8,584.1 415.6,584.5 414.5,585.0 416.0,588.5 418.0,592.0 420.6,593.1 424.3,592.9 428.7,592.9 432.4,593.5 434.4,594.3 432.9,589.9 430.5,586.1 428.9,584.6 429.1,583.0 430.3,579.8" fill="#c8d2df"/>
<polygon points="536.7,663.5 538.3,662.5 538.3,661.5 539.9,660.0 541.5,657.6 541.9,654.5 541.5,652.7 541.0,651.9 539.6,651.9 537.2,650.3 534.0,646.6 530.6,643.5 529.4,644.9 528.2,646.5 524.9,648.2 521.2,650.2 520.2,653.0 520.8,655.1 522.6,656.6 525.5,656.6 529.1,659.0 533.2,661.8 536.7,663.5" fill="#b3c7da"/>
<polygon points="616.3,577.1 614.7,578.9 612.3,580.8 610.6,583.2 609.0,585.8 606.9,588.2 605.5,590.1 608.9,592.5 612.7,596.4 616.0,599.1 618.2,599.3 620.5,596.9 622.1,594.3 624.9,592.1 627.4,590.7 626.3,589.0 624.9,587.3 624.9,585.1 626.9,582.9 629.7,581.3 626.7,580.1 623.6,579.0 621.2,577.6 619.0,576.8 616.3,577.1" fill="#9dbbd4"/>
<polygon points="402.3,497.5 403.6,495.7 403.7,494.2 400.9,491.7 397.3,488.0 393.4,485.6 390.1,485.2 389.6,485.7 391.4,486.4 393.4,487.7 395.9,490.9 397.3,493.7 397.5,494.9 396.9,496.2 396.5,499.2 398.2,498.4 402.3,497.5" fill="#c8d2df"/>
<polygon points="486.1,431.1 486.7,431.2 487.2,431.3 488.5,429.7 492.4,428.8 495.6,427.9 496.1,426.2 496.5,423.6 497.9,420.4 498.8,417.2 497.8,416.8 497.3,414.8 497.1,411.7 493.3,410.7 491.0,410.4 488.9,411.7 484.4,414.4 480.2,416.9 479.6,419.2 479.9,420.8 483.4,423.6 486.0,425.6 487.0,425.8 486.6,427.9 486.1,431.1" fill="#d7dae5"/>
<polygon points="644.7,613.9 646.7,613.0 646.5,610.3 644.8,606.2 643.7,602.8 644.8,600.7 647.5,598.4 649.6,595.6 647.8,593.2 643.4,592.7 640.5,593.6 638.1,595.8 633.9,598.5 630.1,600.8 629.0,603.1 628.8,605.9 629.3,608.8 629.9,610.8 633.6,611.6 636.6,611.9 638.7,613.2 639.8,614.4 640.4,614.3 642.3,613.9 644.7,613.9" fill="#b3c7da"/>
<polygon points="425.8,414.1 425.2,412.3 424.3,409.6 422.9,407.5 421.1,407.1 419.2,406.5 417.5,407.4 417.1,408.0 415.2,408.7 411.3,409.8 408.7,411.7 407.0,414.1 403.8,416.7 405.8,419.9 408.1,422.7 410.1,423.6 411.4,425.0 413.5,424.4 414.9,425.0 418.1,426.3 422.5,427.0 422.7,424.4 421.2,421.4 420.2,418.9 421.0,417.3 423.5,416.1 425.8,414.1" fill="#d7dae5"/>
<polygon points="516.8,366.4 518.0,365.2 520.7,362.8 524.3,360.0 526.2,357.8 528.2,356.8 529.2,354.7 529.2,353.1 528.4,350.4 525.4,348.0 522.7,348.0 521.0,349.0 519.7,348.8 517.7,347.0 514.6,344.9 512.2,344.5 509.3,345.4 509.0,347.8 508.6,351.4 507.2,355.2 510.7,356.3 513.5,358.0 515.5,361.6 516.4,365.0 516.8,366.4" fill="#b3c7da"/>
<polygon points="502.1,532.0 502.0,528.9 501.5,527.8 499.9,526.6 497.7,523.2 495.8,520.7 492.2,519.8 490.0,519.2 488.4,519.8 484.6,521.5 481.1,523.6 482.4,526.9 482.5,529.8 479.9,533.0 482.6,535.0 484.6,535.6 485.9,534.9 487.3,535.3 489.5,538.0 492.6,541.0 494.7,541.1 495.4,540.3 497.0,538.4 499.3,535.4 502.1,532.0" fill="#9dbbd4"/>
<polygon points="513.4,302.5 515.2,306.5 516.1,309.4 516.4,311.0 516.5,313.2 517.1,316.2 520.8,313.9 522.8,311.4 525.9,310.0 530.9,309.8 534.2,310.5 534.0,308.6 532.4,305.0 529.8,302.2 527.3,300.5 526.4,296.7 525.3,294.6 524.8,294.2 523.5,295.3 521.1,296.4 518.6,296.0 516.7,298.4 515.6,299.4 514.4,299.6 513.3,300.4 513.4,302.5" fill="#9dbbd4"/>
<polygon points="671.3,696.1 668.4,692.5 666.8,690.5 666.9,687.0 663.2,685.6 661.1,684.6 659.1,685.2 656.8,688.6 655.8,692.0 656.8,694.6 657.5,696.7 658.7,695.7 659.6,696.1 661.3,697.9 664.9,697.9 666.7,698.5 668.0,699.0 668.7,699.4 670.1,698.1 671.3,696.1" fill="#c8d2df"/>
<polygon points="528.0,272.0 526.0,271.6 523.2,270.8 520.2,268.4 516.1,269.3 513.3,269.2 512.4,268.4 510.1,268.0 506.8,268.4 507.0,269.9 506.7,271.6 503.8,274.0 500.1,277.3 499.9,281.1 500.5,283.6 502.2,284.7 505.1,284.3 508.7,285.6 511.7,287.6 514.2,289.0 517.2,289.9 518.6,287.6 519.4,285.3 519.2,282.9 519.7,280.3 522.4,277.5 526.1,274.7 528.0,272.0" fill="#b3c7da"/>
<polygon points="539.9,436.7 537.9,435.8 535.2,433.9 532.3,432.5 530.1,431.2 528.4,429.1 526.7,431.7 524.3,434.2 522.5,436.5 522.5,438.4 525.0,440.0 526.1,443.1 527.6,443.9 528.6,444.2 529.7,446.1 531.3,449.7 534.3,450.0 535.9,449.7 537.6,448.6 541.1,446.6 542.1,443.4 542.1,440.7 541.1,438.9 539.9,436.7" fill="#c8d2df"/>
<polygon points="662.1,613.0 664.5,614.6 666.3,617.1 667.6,621.2 668.7,623.9 669.9,624.4 671.9,625.3 672.9,623.1 675.3,621.0 676.3,616.9 677.8,614.3 679.1,612.0 679.8,609.1 677.3,606.9 675.1,607.2 673.3,606.7 671.8,607.7 668.3,607.5 665.7,606.4 664.2,605.4 664.1,609.2 662.1,613.0" fill="#d7dae5"/>
<polygon points="662.8,269.5 659.4,268.7 657.1,269.1 653.4,270.3 652.3,272.5 651.1,275.3 649.7,278.2 647.2,280.8 645.0,283.0 644.8,285.2 646.0,287.5 645.9,289.7 648.1,292.3 649.9,293.6 651.9,294.1 654.4,294.9 657.0,295.7 660.0,293.7 661.5,292.0 664.4,290.5 667.4,289.3 668.1,288.2 668.6,286.8 671.0,285.0 672.5,283.0 670.7,281.6 669.8,281.5 669.6,280.1 669.4,276.7 668.3,274.0 666.1,272.3 662.8,269.5" fill="#d7dae5"/>
<polygon points="684.2,641.1 686.8,644.2 689.7,645.4 692.1,645.4 693.9,645.8 695.4,646.9 698.1,644.0 701.4,642.3 702.4,641.6 702.6,641.1 705.1,640.0 707.9,638.0 705.5,637.0 702.5,635.1 699.8,631.7 697.9,629.1 697.0,628.7 696.2,629.2 694.6,628.5 692.6,632.8 689.6,635.6 687.7,636.9 686.5,637.6 684.9,638.9 684.2,641.1" fill="#d7dae5"/>
<polygon points="653.4,270.3 657.1,269.1 659.4,268.7 662.8,269.5 664.2,266.5 664.9,263.5 665.6,261.3 668.3,260.1 672.2,259.3 674.2,258.1 672.2,255.7 669.4,252.6 666.8,250.8 665.2,248.8 664.8,244.8 663.6,241.3 661.9,239.9 659.8,239.6 657.5,242.2 655.8,245.7 652.9,247.7 650.7,249.1 651.1,251.1 652.1,254.1 650.6,257.3 647.3,260.0 644.9,261.7 645.5,264.2 647.0,268.3 649.8,270.3 653.4,270.3" fill="#d7dae5"/>
<polygon points="545.3,362.3 546.0,364.2 547.3,364.7 548.8,365.6 552.4,366.2 556.0,365.7 558.1,364.2 561.1,362.4 565.6,361.0 566.8,359.2 567.2,357.3 566.4,354.3 563.2,351.8 559.7,351.0 556.5,351.3 554.0,350.0 552.6,347.1 551.1,348.4 550.7,349.6 549.0,351.0 547.0,352.5 548.3,356.2 548.5,357.6 547.1,358.9 545.3,362.3" fill="#b3c7da"/>
<polygon points="555.0,575.5 556.9,576.0 558.3,576.6 560.3,577.6 563.2,578.1 566.6,578.0 569.4,579.0 570.7,578.2 570.5,577.6 570.8,575.4 571.6,571.7 572.5,567.8 573.9,565.2 572.0,564.6 569.9,562.8 566.9,560.3 564.1,558.8 562.6,559.3 561.9,562.5 559.6,566.3 556.2,570.0 554.2,573.0 554.4,574.8 555.0,575.5" fill="#d7dae5"/>
<polygon points="414.3,567.7 417.3,569.1 418.6,570.4 419.5,570.8 422.2,567.9 425.7,564.5 427.5,561.2 426.4,559.1 424.1,558.7 421.9,556.1 420.5,552.5 420.1,550.6 417.3,550.7 413.5,550.6 410.8,550.6 409.9,551.3 410.1,552.5 409.8,554.6 409.0,557.6 411.4,560.8 412.9,562.7 413.7,564.2 414.3,567.7" fill="#b3c7da"/>
<polygon points="547.0,352.5 549.0,351.0 550.7,349.6 551.1,348.4 552.6,347.1 554.6,344.5 556.6,343.4 554.0,340.9 550.9,337.2 547.9,335.3 546.5,336.0 542.9,337.9 539.7,340.4 538.1,342.8 535.1,344.5 532.3,346.6 530.3,349.2 533.6,352.0 537.9,352.8 541.4,351.7 544.1,351.0 547.0,352.5" fill="#b3c7da"/>
<polygon points="606.8,677.4 605.6,679.5 602.7,681.5 600.0,683.5 598.3,685.4 599.1,687.5 600.8,689.6 603.1,690.1 605.2,691.4 606.3,694.7 607.0,696.2 608.5,697.6 611.0,698.5 613.0,697.6 612.5,696.2 611.7,693.9 612.9,690.6 615.4,686.8 617.4,683.3 616.4,684.5 614.8,684.5 612.7,682.6 610.7,679.9 609.0,678.2 606.8,677.4" fill="#b3c7da"/>
<polygon points="402.3,497.5 398.2,498.4 396.5,499.2 397.2,502.7 399.1,504.8 398.9,505.9 397.2,507.6 395.4,509.6 396.5,512.7 397.8,515.6 399.6,517.2 401.4,518.4 403.8,515.8 406.5,512.5 410.2,509.3 411.6,506.5 411.3,504.4 409.9,502.4 407.0,500.9 405.2,501.3 404.2,501.8 403.4,500.3 402.3,497.5" fill="#d7dae5"/>
<polygon points="390.4,422.1 389.1,420.3 389.5,417.4 392.4,413.3 389.6,411.7 387.8,412.1 387.3,413.2 386.7,412.5 384.5,409.7 381.0,411.5 380.1,415.5 379.4,417.4 379.9,419.0 381.5,422.1 383.2,424.8 384.9,424.8 388.1,423.8 390.4,422.1" fill="#d7dae5"/>
<polygon points="659.1,392.7 657.1,391.4 655.0,390.5 652.4,390.6 649.2,389.6 645.8,386.3 642.9,383.1 640.9,381.9 640.8,382.6 640.2,384.0 638.4,386.2 636.9,389.0 638.0,392.5 637.7,396.3 636.8,398.1 636.8,399.6 638.1,402.5 640.1,404.7 641.5,405.3 641.6,407.5 640.9,411.5 643.4,411.5 645.8,412.3 650.0,413.0 653.9,412.9 655.9,411.8 657.9,410.1 659.1,408.6 659.0,405.4 658.2,400.8 657.5,397.0 657.9,394.7 659.1,392.7" fill="#d7dae5"/>
<polygon points="603.6,655.1 605.5,657.5 607.8,660.9 609.0,664.7 608.6,666.9 611.1,668.0 612.7,668.8 614.8,669.5 617.6,669.7 619.6,669.5 621.2,666.3 622.7,662.7 624.8,659.4 626.2,657.2 623.6,655.7 621.1,653.9 619.0,651.3 617.4,650.7 613.7,652.6 611.3,654.0 606.9,654.7 603.6,655.1" fill="#9dbbd4"/>
<polygon points="522.5,419.2 524.4,420.8 526.3,421.6 528.1,422.1 530.6,422.0 534.0,422.5 535.6,423.0 536.4,422.5 538.9,420.8 541.7,418.1 540.8,416.6 540.8,413.7 540.8,410.0 539.8,408.0 537.7,407.0 535.5,406.2 532.5,404.1 529.4,401.8 529.5,405.1 529.4,408.9 526.9,412.0 523.2,414.2 521.6,416.3 522.5,419.2" fill="#d7dae5"/>
<polygon points="485.9,366.4 485.3,370.2 485.0,372.6 485.0,375.0 484.1,378.0 481.6,381.3 481.6,381.6 483.2,380.5 483.9,379.1 486.0,379.1 489.7,381.2 493.2,383.9 493.7,382.4 495.3,380.4 498.2,378.3 500.6,376.0 501.0,373.5 498.7,371.5 496.6,368.3 495.3,365.5 492.8,364.9 489.2,364.5 487.4,365.0 485.9,366.4" fill="#b3c7da"/>
<polygon points="679.9,595.0 681.7,593.2 682.6,592.6 685.2,593.3 688.3,594.5 690.0,595.2 688.4,592.8 686.6,591.9 685.6,590.5 686.2,587.2 688.0,583.5 686.6,582.0 685.4,580.2 683.8,577.2 681.0,574.7 679.6,575.2 677.5,578.9 674.8,582.5 673.1,585.3 671.8,587.2 670.4,589.0 674.4,590.4 677.9,593.5 679.9,595.0" fill="#d7dae5"/>
<polygon points="586.8,574.7 585.9,577.8 583.1,580.2 580.7,582.0 579.4,583.8 578.5,586.3 580.8,587.3 583.2,588.3 586.7,589.3 591.4,591.3 595.8,594.2 598.4,595.7 598.2,594.1 598.7,591.8 597.4,588.3 597.5,585.9 598.5,583.8 599.3,579.9 598.5,576.1 594.4,576.8 590.5,576.8 588.3,575.9 586.8,574.7" fill="#b3c7da"/>
<polygon points="663.0,508.8 664.9,509.0 668.2,510.0 669.9,510.7 670.2,510.3 668.8,506.0 668.9,502.8 670.8,500.2 673.0,496.3 670.8,493.3 667.4,491.5 663.4,489.5 659.7,486.3 659.3,488.0 657.0,491.0 654.0,494.5 653.3,498.3 652.4,500.4 652.0,502.0 652.5,504.4 655.7,506.3 658.9,506.6 661.5,506.6 663.0,508.8" fill="#d7dae5"/>
<polygon points="440.8,302.4 442.0,298.8 442.8,295.4 443.5,293.8 444.2,292.5 443.9,289.7 442.1,287.0 439.6,285.9 437.8,285.0 434.8,283.4 430.9,281.8 427.7,280.8 429.2,283.8 430.8,286.5 433.2,287.1 434.9,289.9 436.1,294.4 437.2,297.1 435.9,298.8 436.4,300.7 437.7,302.0 440.8,302.4" fill="#b3c7da"/>
<polygon points="465.4,424.8 465.9,426.6 465.2,429.9 464.8,433.6 465.9,434.7 468.6,434.9 470.7,435.1 475.0,436.1 478.3,436.6 479.7,435.7 482.9,433.5 486.1,431.1 486.6,427.9 487.0,425.8 486.0,425.6 483.4,423.6 479.9,420.8 476.0,420.6 473.1,419.7 471.9,419.2 469.4,419.9 466.4,422.1 465.4,424.8" fill="#d7dae5"/>
<polygon points="616.6,707.1 614.0,706.3 612.5,703.5 611.7,700.1 611.0,698.5 608.5,697.6 607.0,696.2 606.3,694.7 604.7,696.9 600.8,700.1 597.8,703.5 596.0,706.3 592.9,707.9 594.0,709.3 595.8,709.7 598.9,709.8 600.6,710.4 602.0,711.0 604.6,711.6 608.4,712.7 608.9,712.8 610.9,713.0 611.5,712.1 613.7,710.1 616.6,707.1" fill="#b3c7da"/>
<polygon points="565.9,709.2 569.0,709.3 570.2,709.8 572.4,710.1 575.7,709.8 578.0,709.1 577.3,705.7 578.5,703.2 581.4,701.7 583.9,700.9 584.2,699.4 583.7,695.6 581.9,692.7 580.4,694.0 577.7,694.7 574.7,696.4 573.5,696.4 571.5,695.5 567.4,694.8 564.7,695.1 562.5,696.8 562.6,699.9 562.6,701.6 563.6,704.8 565.9,709.2" fill="#b3c7da"/>
<polygon points="681.0,574.7 683.8,577.2 685.4,580.2 686.6,582.0 688.0,583.5 691.2,582.1 690.8,580.5 689.5,578.4 687.0,574.4 683.7,570.7 681.7,569.2 680.5,570.2 680.9,572.1 681.0,574.7" fill="#c8d2df"/>
<polygon points="662.0,481.9 665.2,481.9 668.0,481.4 672.9,479.6 676.5,476.7 678.2,473.7 681.5,471.8 682.2,470.8 681.4,469.7 681.3,467.7 681.4,463.7 681.8,461.3 681.5,458.9 678.4,458.7 676.2,459.0 673.0,459.7 669.4,460.3 667.4,460.0 666.4,458.7 663.8,457.0 659.9,456.0 659.6,459.1 658.9,461.6 656.8,463.6 654.0,466.2 652.7,470.1 655.6,473.3 658.3,474.5 660.1,475.4 661.1,478.9 662.0,481.9" fill="#d7dae5"/>
<polygon points="418.8,495.6 422.0,496.3 425.4,496.7 427.3,496.6 428.0,496.0 429.5,493.7 431.6,491.9 431.5,488.9 430.1,488.0 428.7,486.7 428.5,483.3 429.1,480.3 429.2,478.5 428.8,478.7 424.9,481.4 420.2,482.6 417.7,482.5 414.7,481.6 410.4,481.3 409.4,482.3 410.4,483.5 412.9,485.3 415.8,489.4 417.9,493.2 418.8,495.6" fill="#d7dae5"/>
<polygon points="693.8,499.2 695.9,498.2 698.2,495.7 702.0,493.2 703.8,491.1 702.2,487.0 700.7,483.7 700.8,482.3 702.7,481.4 705.0,479.1 705.9,475.8 704.7,473.2 701.4,472.4 696.8,471.8 692.8,471.3 690.4,471.0 688.9,471.4 686.8,471.5 683.8,470.2 681.3,467.7 681.4,469.7 682.2,470.8 681.5,471.8 682.2,473.7 681.5,477.6 680.3,481.0 679.8,483.2 680.6,486.5 682.4,490.8 684.4,493.6 687.8,495.0 691.2,497.1 693.8,499.2" fill="#d7dae5"/>
<polygon points="561.5,666.9 560.9,669.0 560.5,669.3 561.3,670.7 563.1,673.8 565.1,676.0 566.9,676.1 570.3,677.2 572.8,676.9 573.3,676.7 573.8,676.0 576.6,674.4 575.5,672.9 575.6,669.1 575.8,665.7 575.2,663.7 573.6,660.7 571.7,656.5 569.5,657.4 568.3,658.9 568.1,661.2 565.0,664.1 561.5,666.9" fill="#d7dae5"/>
<polygon points="420.3,461.2 419.5,458.4 417.3,454.5 414.6,452.4 412.4,450.5 411.2,446.7 410.7,444.0 406.0,447.4 402.5,450.3 401.0,452.0 398.4,452.4 395.9,452.1 398.1,455.8 400.1,458.9 401.1,460.8 401.3,464.0 401.6,468.3 402.9,470.9 406.2,467.9 410.3,464.5 412.2,461.9 415.2,461.0 419.3,461.4 420.3,461.2" fill="#b3c7da"/>
<polygon points="671.4,541.1 668.9,543.2 667.6,545.1 665.8,546.9 661.5,548.5 657.6,549.8 658.1,550.7 659.5,552.7 661.7,555.3 664.3,557.1 667.4,558.4 670.6,559.6 673.0,561.1 673.6,560.0 673.6,558.3 675.1,556.3 675.5,553.3 676.2,550.7 677.4,547.9 677.8,545.8 677.7,543.7 676.7,543.2 674.5,543.0 671.4,541.1" fill="#9dbbd4"/>
<polygon points="483.9,323.3 481.3,320.6 478.3,319.1 475.8,315.6 474.3,311.0 473.5,308.4 472.4,305.8 470.7,301.8 469.5,301.1 468.3,302.0 466.0,305.2 463.4,308.8 461.8,312.2 458.8,314.4 455.1,315.5 456.2,318.7 458.2,319.9 459.8,322.6 460.3,326.4 459.9,328.3 459.9,330.6 464.2,327.5 468.8,325.0 471.4,324.0 475.6,324.5 479.8,325.5 481.3,325.6 483.6,324.0 483.9,323.3" fill="#d7dae5"/>
<polygon points="629.9,610.8 626.5,609.8 624.8,608.5 624.1,607.8 621.9,608.2 619.1,609.6 619.3,613.1 618.4,615.2 617.6,616.9 617.8,620.3 619.5,623.7 622.8,623.8 627.6,624.2 630.5,624.3 632.8,623.4 636.7,621.9 638.0,618.2 638.9,615.7 640.4,614.3 639.8,614.4 638.7,613.2 636.6,611.9 633.6,611.6 629.9,610.8" fill="#6a9cc9"/>
<polygon points="489.5,546.8 486.0,546.8 483.3,548.3 482.2,550.4 479.6,551.9 475.3,552.1 474.1,553.8 476.0,556.4 478.2,559.9 479.9,561.9 480.6,562.5 480.3,564.4 482.7,563.8 486.2,563.0 488.7,562.4 490.4,562.5 490.9,560.1 491.1,557.2 491.2,554.4 491.1,552.4 489.7,550.3 489.5,546.8" fill="#d7dae5"/>
<polygon points="400.3,399.8 403.9,400.3 407.7,399.5 410.1,397.9 411.9,396.9 414.5,397.4 416.6,394.9 419.2,393.4 420.0,391.1 418.8,388.3 418.5,388.0 419.2,389.1 419.3,390.3 415.7,389.9 411.3,390.9 408.8,393.2 405.2,395.8 400.4,397.8 400.3,399.8" fill="#d7dae5"/>
<polygon points="697.2,655.6 696.1,659.3 694.0,662.5 693.0,664.9 693.7,665.4 693.9,665.6 696.2,663.7 700.1,662.1 702.6,661.1 702.9,660.6 703.3,659.9 704.4,659.1 701.4,658.0 699.2,656.6 697.2,655.6" fill="#9dbbd4"/>
<polygon points="602.0,426.5 604.3,426.7 607.2,429.2 609.8,433.1 611.7,435.0 613.8,434.9 617.1,432.0 620.9,428.7 622.7,425.7 624.7,423.8 627.6,423.1 628.6,423.0 628.1,422.9 626.1,418.7 624.6,415.8 623.4,414.4 622.0,411.8 619.9,409.6 617.0,409.6 613.7,408.2 612.0,410.0 611.4,410.7 608.9,410.5 605.5,410.2 603.5,412.0 602.5,413.4 602.0,415.7 601.7,419.7 601.3,424.4 602.0,426.5" fill="#d7dae5"/>
<polygon points="567.0,395.4 565.2,397.6 565.2,399.5 566.5,401.3 567.8,403.7 570.9,406.4 573.4,409.7 575.9,411.2 578.5,411.1 580.4,411.3 581.2,412.2 582.8,407.7 585.0,404.3 586.8,402.5 584.1,401.5 581.8,399.9 580.4,397.4 579.5,397.1 578.5,396.8 575.0,397.6 572.1,396.9 567.0,395.4" fill="#c8d2df"/>
<polygon points="471.6,373.7 468.3,376.0 464.3,379.0 462.2,382.2 461.0,385.0 458.9,386.9 457.5,388.0 458.0,388.6 461.4,390.9 465.5,391.6 469.2,390.7 471.6,390.6 473.1,390.5 475.6,391.1 478.8,391.9 480.3,392.2 479.2,388.9 478.5,386.1 479.4,383.8 481.6,381.6 481.6,381.3 478.9,379.3 476.0,376.4 473.9,374.6 471.6,373.7" fill="#9dbbd4"/>
<polygon points="730.2,431.3 728.4,434.4 728.6,436.9 730.2,440.5 731.2,444.9 730.6,447.5 728.6,448.4 730.9,447.1 732.8,446.3 736.8,446.7 741.1,448.1 743.6,449.5 746.0,449.7 749.7,448.2 752.5,445.7 753.5,443.5 754.2,442.0 753.6,439.5 751.5,436.4 749.2,435.5 747.9,434.7 747.8,431.8 748.0,429.1 747.2,427.6 745.1,424.1 743.0,425.5 742.5,426.1 740.5,426.2 737.1,426.4 735.0,427.3 733.5,429.0 730.2,431.3" fill="#b3c7da"/>
<polygon points="726.4,263.6 724.7,265.3 723.0,267.5 723.0,270.0 722.6,272.6 719.3,274.7 715.7,276.4 713.7,277.9 711.6,279.9 713.3,282.2 715.5,286.2 716.8,288.6 720.0,286.8 721.2,287.0 723.1,288.9 727.0,290.8 730.3,291.0 732.6,289.5 736.7,287.8 741.1,287.8 742.5,287.7 743.1,287.8 740.3,286.0 737.3,282.8 735.0,278.7 733.8,276.8 733.4,275.2 732.9,271.9 731.7,269.8 729.9,269.2 727.9,266.8 726.4,263.6" fill="#d7dae5"/>
<polygon points="579.5,507.4 580.5,509.6 580.8,512.7 580.0,515.7 578.8,517.3 578.0,518.4 579.6,519.0 581.2,520.7 582.9,522.3 582.9,520.7 584.8,520.5 587.8,521.1 589.2,521.5 591.4,520.8 591.7,517.3 592.3,513.6 592.3,511.3 591.2,508.5 589.7,504.3 588.7,501.0 589.0,499.6 588.7,499.4 584.9,499.5 583.8,501.0 582.5,503.9 579.5,507.4" fill="#b3c7da"/>
<polygon points="443.2,333.4 442.3,335.7 443.0,337.4 442.9,338.7 444.2,340.1 444.2,342.5 443.3,346.3 442.2,349.4 444.6,348.3 446.0,346.6 446.9,345.8 448.9,346.6 451.7,343.3 454.8,341.5 456.2,341.1 456.3,340.5 456.8,338.9 457.6,335.9 453.6,333.9 451.0,332.5 449.9,332.5 447.4,333.2 443.2,333.4" fill="#c8d2df"/>
<polygon points="545.8,554.6 547.6,554.0 551.2,554.3 555.3,554.6 557.2,554.2 556.9,553.3 555.8,552.7 555.5,551.3 555.1,547.9 553.7,545.2 551.3,543.3 548.7,539.3 547.9,538.6 546.4,538.3 543.7,539.0 541.9,540.3 543.1,543.1 542.7,546.2 540.0,548.9 540.3,548.8 541.2,550.1 543.0,552.8 545.8,554.6" fill="#9dbbd4"/>
<polygon points="562.3,332.0 564.2,334.4 566.5,335.8 569.2,338.1 572.1,342.1 574.7,345.1 578.9,343.1 580.5,339.9 581.4,336.6 583.9,334.0 582.6,330.9 582.2,328.7 582.7,328.0 583.0,326.4 582.1,322.9 579.8,319.9 578.0,322.5 574.5,324.1 571.8,324.4 570.9,323.7 568.8,322.9 565.5,323.0 563.7,324.6 562.3,327.2 562.3,332.0" fill="#d7dae5"/>
<polygon points="466.4,411.3 463.8,409.4 460.3,408.5 456.4,406.9 453.0,403.1 450.8,399.6 449.6,400.1 446.6,401.6 444.4,403.6 445.8,404.9 446.5,407.4 445.2,410.8 445.8,412.0 446.4,411.8 447.5,413.5 449.7,416.7 452.9,418.8 456.6,421.1 459.7,421.6 462.2,421.7 461.2,418.5 460.6,416.7 461.6,415.6 464.0,414.0 466.4,411.3" fill="#b3c7da"/>
<polygon points="557.6,214.3 559.9,217.6 562.2,218.8 563.9,219.6 564.8,222.6 565.1,225.3 565.7,226.6 569.4,227.7 574.0,228.6 576.7,228.5 578.0,224.3 579.3,221.1 580.0,218.6 579.6,215.9 578.9,212.7 579.3,209.9 577.3,211.1 574.7,212.1 571.2,211.8 568.3,212.1 567.4,212.4 567.2,213.1 566.1,214.5 566.2,212.4 566.7,210.5 568.0,208.1 569.9,205.7 568.0,205.4 565.8,205.9 561.5,207.8 559.0,211.0 557.6,214.3" fill="#9dbbd4"/>
<polygon points="650.4,547.1 649.9,545.8 647.4,543.8 645.5,541.5 642.3,540.5 637.7,541.3 634.2,542.8 632.4,543.5 631.3,544.1 631.0,545.3 629.6,547.8 628.2,552.1 628.1,555.8 629.8,557.9 632.2,560.3 635.2,562.4 638.1,563.3 641.9,561.1 643.7,559.2 642.7,556.2 642.8,552.8 644.8,549.8 646.9,548.2 648.5,547.7 650.4,547.1" fill="#c8d2df"/>
<polygon points="466.9,635.2 470.2,632.0 471.9,630.2 475.1,629.8 478.8,630.0 478.1,628.9 476.5,626.9 474.7,623.3 473.5,620.3 472.4,621.2 471.0,622.1 470.5,623.9 470.9,626.1 470.5,628.7 467.8,631.7 464.3,634.7 465.5,634.4 466.9,635.2" fill="#c8d2df"/>
<polygon points="674.2,258.1 676.1,257.2 678.4,255.7 681.4,256.0 683.3,258.4 684.5,256.9 686.1,254.9 688.3,252.5 688.6,249.9 688.6,247.5 691.3,245.5 689.5,245.9 688.8,244.3 688.6,241.8 688.0,240.3 686.7,238.6 684.4,234.9 683.0,235.1 679.5,235.8 677.1,237.4 675.2,239.6 671.1,241.9 666.9,243.7 664.8,244.8 665.2,248.8 666.8,250.8 669.4,252.6 672.2,255.7 674.2,258.1" fill="#d7dae5"/>
<polygon points="751.1,338.3 753.2,338.4 754.5,340.3 755.5,341.9 756.5,342.7 758.0,345.0 760.4,348.8 764.2,348.2 766.9,346.7 768.6,344.3 771.2,341.0 768.2,339.8 764.4,338.7 760.8,335.0 758.2,331.1 757.0,329.0 756.9,326.2 757.1,322.7 754.2,325.8 751.2,329.6 749.9,333.3 750.5,336.2 751.1,338.3" fill="#d7dae5"/>
<polygon points="499.4,310.2 496.9,311.5 494.1,313.0 492.7,315.1 493.3,317.4 496.2,319.5 499.6,320.6 502.7,323.1 505.0,325.0 508.7,323.0 511.0,321.7 511.9,321.6 513.9,322.5 517.2,323.7 517.6,322.5 516.4,321.5 515.7,319.7 517.1,316.2 516.5,313.2 516.4,311.0 516.1,309.4 515.2,306.5 513.4,302.5 511.7,302.3 508.1,303.6 503.8,306.0 501.7,308.6 499.4,310.2" fill="#c8d2df"/>
<polygon points="593.6,445.2 595.1,442.5 594.3,438.9 593.8,435.3 595.8,432.4 598.5,430.3 600.3,428.5 602.0,426.5 601.3,424.4 599.9,424.7 598.3,425.0 594.5,425.0 590.3,424.2 587.3,422.7 584.4,421.0 585.3,423.6 584.4,424.7 582.5,426.8 581.6,431.1 582.7,435.1 585.0,437.7 586.3,440.6 588.3,441.3 589.4,442.8 591.0,444.4 593.6,445.2" fill="#c8d2df"/>
<polygon points="590.0,659.3 591.3,658.4 592.8,657.2 593.6,655.3 595.3,652.7 594.5,651.8 593.6,648.8 592.0,645.4 589.6,643.4 586.7,641.6 583.7,643.3 581.4,646.1 580.3,649.2 577.4,651.8 573.6,653.1 571.8,653.2 571.3,654.1 571.7,655.5 573.1,657.1 575.5,657.8 580.0,657.2 584.3,656.3 587.2,656.9 590.0,659.3" fill="#b3c7da"/>
<polygon points="541.1,446.6 537.6,448.6 535.9,449.7 534.3,450.0 531.3,449.7 530.2,452.2 531.0,454.2 532.5,456.7 532.7,460.6 533.6,463.8 534.9,465.3 537.4,465.2 542.3,461.8 544.8,458.3 546.4,455.7 549.3,454.5 550.7,454.4 550.8,454.5 548.6,451.3 546.7,448.2 544.9,447.2 543.0,447.4 541.1,446.6" fill="#b3c7da"/>
<polygon points="526.4,623.0 526.6,620.6 528.2,618.0 532.3,615.6 535.3,613.7 534.9,610.4 533.3,608.8 530.9,607.6 528.1,605.3 523.9,604.9 520.3,605.6 518.6,606.8 516.5,607.5 513.2,607.5 514.3,610.4 514.4,615.3 513.6,619.3 513.2,621.2 515.2,622.4 518.5,623.5 522.8,623.7 526.4,623.0" fill="#c8d2df"/>
<polygon points="756.9,298.7 753.6,298.0 751.0,297.0 749.4,295.0 748.6,294.5 748.0,294.3 746.8,291.6 744.5,288.3 743.1,287.8 742.5,287.7 741.1,287.8 739.0,290.3 736.1,293.7 734.9,296.8 735.9,299.4 737.5,302.5 737.6,306.3 735.6,309.2 732.7,310.7 731.1,312.1 733.3,311.3 736.7,312.4 738.8,314.7 740.7,316.8 744.7,317.3 749.1,316.1 751.5,314.3 752.4,312.1 755.0,309.2 757.7,305.3 758.3,301.3 756.9,298.7" fill="#d7dae5"/>
<polygon points="607.9,633.2 608.8,629.8 608.2,625.0 606.0,622.4 603.5,621.0 602.1,617.7 602.0,615.2 602.2,614.2 597.9,616.4 595.5,618.2 593.1,619.7 589.4,620.8 587.9,621.7 587.9,622.8 586.3,624.2 584.4,626.1 585.6,629.2 585.9,632.5 588.9,633.9 592.0,634.8 594.2,635.4 596.2,635.8 599.3,635.7 602.7,635.3 604.8,635.0 605.9,634.0 607.9,633.2" fill="#d7dae5"/>
<polygon points="430.8,510.1 430.2,508.8 428.3,505.1 426.8,501.1 426.8,498.8 428.0,496.0 427.3,496.6 425.4,496.7 422.0,496.3 418.8,495.6 417.0,497.2 414.9,498.8 411.9,500.6 409.9,502.4 411.3,504.4 415.3,505.6 419.4,507.0 422.3,510.5 423.7,513.6 424.0,514.0 424.5,513.8 427.5,511.6 430.8,510.1" fill="#9dbbd4"/>
<polygon points="508.1,453.8 510.4,454.9 513.4,455.8 515.3,454.3 516.2,451.9 518.4,448.9 522.9,445.8 526.1,443.1 525.0,440.0 522.5,438.4 519.9,440.0 516.4,440.1 512.7,438.1 510.7,435.2 509.5,433.4 508.9,433.9 507.7,434.8 509.2,437.8 509.5,441.2 508.7,443.4 507.4,445.9 507.0,450.2 508.1,453.8" fill="#b3c7da"/>
<polygon points="543.8,176.7 542.7,176.2 542.4,180.2 541.5,184.3 540.2,187.7 539.6,190.0 538.5,191.4 535.0,192.7 531.4,194.2 530.3,196.3 533.1,198.5 537.1,198.8 540.6,198.0 542.5,197.5 543.9,198.1 546.6,199.5 550.5,200.8 550.6,200.5 550.0,199.2 551.8,196.5 555.7,193.0 554.5,190.8 553.1,188.6 551.0,184.1 548.4,180.3 545.9,178.8 543.8,176.7" fill="#b3c7da"/>
<polygon points="710.3,607.2 714.4,606.7 717.7,606.0 720.7,607.2 724.2,610.5 727.7,613.3 724.4,610.0 720.4,606.3 716.8,605.1 713.7,604.3 711.5,602.4 711.2,604.7 710.3,607.2" fill="#b3c7da"/>
<polygon points="660.7,514.3 656.8,516.9 653.7,520.1 652.6,523.0 650.0,524.6 646.8,524.8 645.7,524.2 648.5,525.7 649.9,529.1 650.2,532.8 650.3,534.5 652.1,533.2 655.6,531.5 658.1,530.6 659.3,531.1 662.3,532.8 666.5,534.6 669.3,535.2 668.6,532.0 667.5,528.1 665.7,525.9 663.4,522.4 663.5,521.6 662.1,517.7 661.2,515.3 660.7,514.3" fill="#b3c7da"/>
<polygon points="471.1,497.4 469.5,499.7 469.6,502.5 469.3,505.4 468.2,508.2 467.2,510.5 466.1,512.9 466.6,513.1 468.1,512.4 470.6,513.4 473.5,515.5 475.0,517.1 476.1,517.6 478.0,516.7 480.8,514.9 482.6,511.8 482.2,508.2 480.6,505.2 479.2,505.3 477.6,503.1 475.4,499.5 472.7,497.2 471.1,497.4" fill="#d7dae5"/>
<polygon points="568.0,633.7 572.2,633.0 574.9,632.5 576.9,631.7 580.3,630.5 583.0,628.6 583.3,626.4 581.2,625.6 579.0,623.1 576.7,622.6 573.2,622.3 569.2,621.8 566.2,620.2 564.8,617.7 564.1,615.9 561.8,619.1 559.7,621.9 559.4,624.1 560.5,625.7 560.9,627.6 562.1,627.8 562.9,629.4 564.0,631.0 565.6,632.0 568.0,633.7" fill="#b3c7da"/>
<polygon points="780.0,453.4 780.5,454.0 783.9,456.0 787.1,457.3 789.7,457.1 791.9,456.1 791.0,454.8 790.8,452.9 791.6,449.8 791.8,446.7 792.4,444.7 792.3,442.0 790.9,437.8 790.6,442.4 787.6,446.8 784.2,449.9 782.6,451.6 781.5,452.4 780.0,453.4" fill="#d7dae5"/>
<polygon points="529.4,401.8 532.5,404.1 535.5,406.2 537.7,407.0 538.5,405.6 541.3,403.9 544.1,402.1 545.2,400.6 547.5,399.5 548.8,396.8 550.5,393.7 547.6,391.0 544.6,390.6 542.3,390.5 540.3,389.1 538.3,387.8 535.7,387.1 534.6,389.1 533.8,391.2 533.2,393.4 531.1,395.4 527.7,397.1 525.4,398.5 527.0,399.5 529.4,401.8" fill="#d7dae5"/>
<polygon points="602.0,464.0 605.5,463.4 606.9,464.0 609.1,465.0 613.1,465.2 615.6,464.2 617.8,462.4 622.2,460.7 626.1,459.7 628.2,459.4 627.8,457.7 627.2,455.6 623.1,451.4 620.1,448.0 618.5,447.0 618.4,445.6 618.7,443.4 618.5,442.9 615.1,444.5 611.2,445.3 609.1,445.7 605.1,446.5 600.2,448.2 597.6,450.7 598.0,452.2 599.2,453.6 600.2,456.2 600.2,459.2 599.1,461.3 600.6,461.5 602.0,464.0" fill="#b3c7da"/>
<polygon points="626.6,248.1 626.5,249.6 625.0,251.0 623.8,252.4 623.4,254.1 620.9,256.7 616.6,260.0 614.1,263.8 615.2,266.2 617.1,267.6 619.2,270.8 620.3,273.7 620.2,274.6 619.7,276.1 621.3,278.1 625.2,277.0 629.1,275.4 630.7,273.4 632.2,271.0 634.6,268.5 635.7,266.2 635.9,264.4 638.3,262.8 642.2,261.3 640.5,259.4 638.4,257.1 635.8,256.7 632.9,256.3 630.2,253.4 628.0,250.1 626.6,248.1" fill="#d7dae5"/>
<polygon points="620.5,362.3 622.6,360.2 626.3,359.3 629.7,359.1 631.0,359.1 631.2,357.5 630.0,355.8 628.4,352.4 627.6,349.8 628.3,348.1 629.5,344.7 629.8,339.9 628.4,336.6 625.9,334.4 622.8,334.7 619.6,336.4 618.8,339.2 616.6,342.0 613.4,343.4 612.1,343.1 611.1,345.3 609.2,346.3 607.5,347.4 606.9,350.1 607.5,354.0 610.6,357.1 613.9,358.2 616.9,360.2 619.2,362.2 620.5,362.3" fill="#d7dae5"/>
<polygon points="726.3,403.7 727.7,402.3 728.8,400.1 731.8,397.1 736.1,393.6 738.5,390.3 739.5,387.8 736.8,384.8 733.9,383.4 732.4,380.4 732.6,377.9 733.7,377.2 732.1,377.9 731.2,377.2 728.8,375.5 724.5,374.0 722.7,374.2 721.2,375.3 719.2,377.8 716.5,381.1 714.8,384.7 715.3,387.6 716.1,389.8 718.6,390.1 719.9,392.6 720.3,395.0 720.6,396.3 721.4,398.7 723.3,402.1 726.3,403.7" fill="#d7dae5"/>
<polygon points="442.8,487.7 442.6,491.0 442.9,493.5 441.7,494.9 439.2,495.3 440.0,496.7 440.3,500.0 441.4,502.6 443.6,503.6 446.4,506.5 449.5,507.0 452.2,507.1 451.7,504.2 450.6,501.7 451.8,499.8 454.9,498.6 457.4,497.5 458.5,495.9 457.6,493.2 455.6,489.5 452.0,487.7 447.3,488.1 442.8,487.7" fill="#9dbbd4"/>
<polygon points="647.6,679.0 649.8,678.9 652.9,678.4 654.7,675.7 654.8,673.1 655.6,671.1 658.4,669.9 661.2,669.3 661.3,667.3 661.4,663.4 660.2,660.6 657.9,662.1 654.5,663.5 651.4,663.3 649.9,661.7 650.2,663.4 647.9,664.7 644.5,665.7 642.5,667.0 642.7,668.6 643.6,672.0 645.4,676.3 647.6,679.0" fill="#9dbbd4"/>
<polygon points="570.7,253.5 568.5,249.9 566.5,247.9 565.4,245.7 565.3,241.4 565.1,237.9 564.0,236.1 561.7,233.4 559.6,234.5 558.3,235.6 555.6,236.2 552.8,236.1 551.6,235.8 550.2,235.9 546.7,236.6 545.7,238.5 544.5,239.9 543.2,242.0 541.5,245.2 543.6,245.8 544.8,245.7 546.6,246.5 549.8,249.4 553.8,252.6 557.3,253.8 560.2,253.1 563.2,252.8 566.5,254.0 569.4,255.7 571.0,254.6 570.7,253.5" fill="#b3c7da"/>
<polygon points="454.7,442.9 454.2,446.5 453.9,450.5 454.4,452.8 456.2,454.3 458.9,457.0 463.1,456.9 467.2,455.6 469.1,454.0 471.6,453.1 475.1,453.1 474.0,450.3 474.2,445.6 474.8,442.0 474.2,440.7 471.8,438.2 468.6,434.9 465.9,434.7 463.4,436.6 461.2,438.3 461.0,439.7 459.8,440.8 456.6,441.8 454.7,442.9" fill="#d7dae5"/>
<polygon points="656.8,697.4 654.4,700.1 651.2,704.1 654.3,703.1 656.8,701.7 657.9,700.4 659.0,698.8 661.3,697.9 659.6,696.1 658.7,695.7 657.5,696.7 656.8,697.4" fill="#d7dae5"/>
<polygon points="558.2,387.2 558.5,387.6 560.7,387.5 562.4,388.9 563.7,390.6 564.7,391.0 565.6,392.1 567.0,395.4 572.1,396.9 575.0,397.6 578.5,396.8 581.0,393.2 581.5,388.7 580.2,384.9 579.1,382.1 576.8,383.7 574.1,384.1 570.3,382.8 567.1,381.0 565.8,379.7 564.9,379.7 562.6,380.7 559.8,383.2 558.4,385.5 558.2,387.2" fill="#b3c7da"/>
<polygon points="572.4,280.3 575.7,281.6 579.1,283.2 581.9,283.3 583.9,282.9 585.7,284.9 587.8,288.4 590.3,288.7 592.3,288.7 592.6,287.8 593.7,285.7 596.7,282.8 595.8,279.1 596.1,276.8 596.7,275.4 596.5,272.5 595.3,269.5 593.5,268.4 591.1,268.2 588.4,267.5 587.5,267.2 585.4,268.1 581.4,270.1 578.7,272.3 576.8,273.8 576.4,277.4 574.5,279.4 572.4,280.3" fill="#d7dae5"/>
<polygon points="474.1,553.8 475.3,552.1 475.0,548.9 474.3,544.3 472.7,541.2 470.5,542.1 468.7,544.1 465.3,546.7 462.3,548.8 461.3,549.6 459.3,549.0 456.6,550.5 454.3,551.2 454.0,552.8 455.3,556.1 457.0,559.8 458.5,561.8 460.2,562.0 462.8,562.1 466.4,559.2 467.7,556.5 468.6,554.7 471.3,553.9 473.4,553.8 474.1,553.8" fill="#c8d2df"/>
<polygon points="418.1,344.2 416.9,344.4 416.0,344.8 416.3,347.7 416.9,346.5 418.3,345.2 418.1,344.2" fill="#d7dae5"/>
<polygon points="503.7,393.1 503.7,393.2 503.8,395.2 504.7,398.0 507.0,399.5 510.4,401.7 514.4,405.8 516.1,404.8 517.6,402.9 521.3,400.3 523.7,397.8 523.3,395.4 523.0,395.0 521.9,394.3 519.6,391.3 516.6,389.1 514.1,387.5 512.1,387.9 509.9,387.8 509.8,387.7 508.9,388.5 505.9,390.4 503.7,393.1" fill="#b3c7da"/>
<polygon points="652.5,504.4 652.0,502.0 652.4,500.4 653.3,498.3 654.0,494.5 652.5,493.7 651.5,492.8 649.4,491.9 646.0,490.5 642.5,488.6 639.6,487.2 641.5,491.4 641.9,494.5 640.0,495.8 637.3,497.1 636.0,500.1 636.8,504.1 638.6,507.4 640.4,506.8 641.6,507.5 644.0,505.9 646.6,505.5 647.0,505.7 649.0,505.6 652.5,504.4" fill="#b3c7da"/>
<polygon points="673.3,676.5 672.5,677.7 671.3,679.2 670.4,681.3 669.2,684.0 666.9,687.0 666.8,690.5 668.4,692.5 671.3,696.1 674.5,695.7 677.1,694.2 681.4,692.9 685.5,693.0 687.3,694.3 685.3,691.0 684.3,688.9 685.3,685.7 687.3,682.6 684.4,680.8 681.2,679.3 678.4,677.0 676.0,675.5 673.7,676.0 673.3,676.5" fill="#c8d2df"/>
<polygon points="493.9,617.7 495.9,618.8 498.7,620.1 501.9,621.2 504.2,621.2 505.6,620.5 507.3,621.0 509.0,621.0 511.6,621.3 513.2,621.2 513.6,619.3 514.4,615.3 514.3,610.4 513.2,607.5 510.7,605.5 508.8,602.0 508.5,603.7 506.7,606.7 504.2,610.3 503.5,613.5 501.4,615.5 497.0,616.2 494.0,615.9 493.9,617.7" fill="#9dbbd4"/>
<polygon points="506.7,566.0 509.1,563.1 509.9,559.2 509.4,555.7 508.8,553.5 508.4,553.2 506.5,553.5 504.9,554.6 501.3,555.1 496.8,554.6 493.6,553.4 491.1,552.4 491.2,554.4 491.1,557.2 490.9,560.1 490.4,562.5 491.6,564.2 492.5,565.8 493.7,569.2 497.4,570.3 500.2,570.5 501.4,569.5 503.3,567.7 506.7,566.0" fill="#b3c7da"/>
<polygon points="399.6,539.8 399.3,539.6 397.1,539.7 396.5,539.8 398.8,541.1 400.3,544.0 400.9,546.8 402.2,548.3 402.7,546.3 401.6,542.5 399.6,539.8" fill="#c8d2df"/>
<polygon points="430.5,320.8 430.7,322.6 430.0,323.8 428.7,326.1 427.8,329.0 427.9,331.0 429.1,332.7 427.3,335.2 427.4,335.3 430.7,334.2 432.9,334.6 435.1,336.1 438.8,337.9 442.9,338.7 443.0,337.4 442.3,335.7 443.2,333.4 442.6,330.9 442.6,329.7 442.3,328.2 441.1,324.7 439.0,320.8 436.1,320.3 434.9,319.9 433.4,320.0 430.5,320.8" fill="#c8d2df"/>
<polygon points="511.1,501.6 515.1,501.9 518.3,501.0 520.5,499.2 521.3,495.1 521.8,492.9 521.4,491.6 520.1,489.2 519.0,486.4 519.1,485.1 520.3,483.7 517.4,484.8 514.0,484.3 512.4,482.9 510.4,481.4 506.3,480.9 502.9,481.8 501.0,483.6 500.4,486.7 504.1,489.2 507.4,490.2 509.6,490.7 510.5,493.4 510.4,497.0 510.3,499.2 511.1,501.6" fill="#d7dae5"/>
<polygon points="378.2,458.5 380.0,458.9 383.6,459.0 386.8,458.1 388.0,456.1 389.6,453.6 392.5,451.5 395.1,452.1 397.1,455.0 398.7,458.3 400.0,460.2 401.5,461.8 399.9,465.2 398.8,469.0 397.6,471.6 397.0,472.6 393.9,471.7 392.1,471.3 389.0,471.6 385.8,471.9 384.5,471.8 382.6,470.5 381.3,469.0 380.8,465.6 380.6,462.6 379.9,461.1 378.2,458.5" fill="#1d5fa8"/>
<polygon points="535.2,590.8 536.4,588.6 538.4,586.7 540.0,584.5 541.9,581.4 546.4,578.5 549.8,576.5 551.1,575.8 553.8,576.1 555.1,578.1 555.8,581.2 556.2,583.7 556.8,584.4 555.3,586.9 554.7,590.5 555.3,594.3 556.4,596.9 557.0,598.0 554.4,598.0 550.2,597.3 547.4,596.8 545.9,597.4 542.8,599.3 542.9,596.8 542.4,594.8 540.9,594.3 538.3,593.4 535.2,590.8" fill="#0c4f97"/>
<polygon points="546.3,596.0 547.5,594.1 548.9,593.0 551.1,592.4 551.9,591.7 551.5,590.3 553.0,588.0 556.3,585.2 559.1,584.5 561.6,585.3 565.2,586.6 569.7,587.7 573.0,589.3 574.5,593.8 574.6,598.3 572.8,600.6 570.7,603.1 570.1,606.7 571.5,608.8 573.8,609.9 572.3,609.6 569.4,609.2 566.5,609.3 565.4,610.5 563.9,612.3 560.3,614.0 557.5,611.1 553.9,609.4 550.4,607.2 547.7,602.9 546.4,599.3 546.1,597.8 546.3,596.0" fill="#8db0d0"/>
<polygon points="649.8,530.1 652.0,529.8 655.7,528.8 658.3,527.0 658.7,524.6 660.2,522.4 663.6,524.3 666.0,525.8 667.7,526.8 670.7,527.7 675.0,528.5 679.0,528.4 678.7,530.5 677.8,532.8 677.8,536.5 679.0,538.4 680.4,539.3 680.6,542.4 678.4,544.9 676.6,548.6 673.2,552.6 670.3,556.0 668.9,556.2 666.7,554.6 662.4,552.2 658.6,550.8 656.3,551.1 653.5,552.6 649.7,553.8 647.4,553.5 647.8,550.2 648.6,548.0 648.8,546.8 647.6,543.8 645.3,539.7 644.9,537.2 646.2,535.2 648.2,532.9 649.8,530.1" fill="#4a86c2"/>
<polygon points="554.8,268.4 558.0,266.5 561.3,263.6 562.6,260.8 564.7,259.0 566.2,261.7 568.3,265.5 570.9,267.9 573.8,269.2 576.7,271.2 578.4,275.5 578.5,278.1 577.6,279.4 577.1,281.8 577.8,284.6 579.2,286.0 576.9,287.6 575.8,288.6 573.1,289.0 569.2,289.2 566.6,289.8 564.5,286.6 562.1,284.5 559.6,284.4 557.4,283.1 555.6,280.1 557.4,277.3 559.0,275.9 558.9,273.5 557.0,270.4 554.8,268.4" fill="#5b98cc"/>
<polygon points="632.9,640.8 635.0,638.9 635.7,637.2 637.4,636.0 641.1,635.4 644.2,635.2 645.8,636.8 648.1,639.0 651.4,641.5 655.3,642.0 655.4,643.4 655.6,644.9 655.4,647.6 654.3,650.9 652.7,653.6 651.1,656.0 648.2,657.7 647.2,658.4 646.2,658.4 643.2,658.4 640.6,659.1 637.1,658.6 634.0,656.6 631.9,655.7 630.9,655.4 632.4,652.7 633.3,648.8 633.3,645.1 633.0,642.6 632.9,640.8" fill="#3f7fbf"/>
<polygon points="640.0,682.4 641.3,681.1 644.6,680.8 647.6,681.4 649.2,681.8 652.4,681.3 652.8,685.8 652.5,688.0 653.0,689.1 655.0,692.0 657.5,694.0 659.0,694.7 658.7,697.7 657.4,699.6 654.1,701.6 650.3,703.1 648.1,703.6 645.5,703.4 641.1,703.3 641.7,701.5 642.5,697.5 642.1,693.1 640.4,690.8 638.7,688.5 638.1,685.0 639.0,682.9 640.0,682.4" fill="#4a86c0"/>
<polygon points="678.8,635.3 682.0,635.8 685.9,636.9 687.6,637.5 689.0,637.1 692.5,635.9 695.6,635.0 697.5,635.1 698.7,637.9 701.2,639.9 704.5,643.8 707.1,647.0 708.3,648.2 708.0,650.4 706.2,651.6 704.3,652.8 701.1,654.3 699.3,656.2 699.3,658.4 698.1,660.8 693.0,660.2 688.7,659.6 685.9,659.2 683.3,657.9 680.0,655.1 681.0,651.6 682.8,649.2 684.1,647.0 683.9,643.3 682.2,639.1 680.1,636.5 678.8,635.3" fill="#89aed0"/>
<polygon points="644.7,675.8 645.5,676.6 647.5,676.9 651.1,676.1 653.7,674.1 655.6,671.9 659.3,670.8 662.2,674.0 664.2,677.8 664.7,680.0 663.8,683.6 662.9,688.6 663.4,691.7 662.8,691.9 662.6,692.0 660.3,692.7 658.5,694.4 657.7,696.8 654.4,699.4 651.9,698.5 648.6,695.6 645.1,691.7 642.0,689.5 639.7,688.2 639.4,685.4 641.2,682.6 643.9,681.0 645.3,679.3 644.7,675.8" fill="#7fa8cf"/>
<polygon points="411.6,519.4 414.5,517.7 415.5,516.9 418.0,516.3 421.9,515.5 423.9,514.0 426.3,512.1 430.8,510.4 432.7,511.9 434.3,514.8 435.6,516.8 437.1,518.2 438.9,520.7 441.2,523.5 441.9,525.7 442.6,527.6 441.3,530.2 438.2,533.7 435.5,537.0 435.0,539.0 436.3,539.5 434.2,538.5 430.5,538.0 427.5,538.1 425.2,538.3 421.2,538.3 416.4,537.9 413.6,537.0 412.3,533.6 412.5,529.9 413.7,528.3 414.6,527.3 414.2,524.5 412.9,521.3 411.6,519.4" fill="#8fb2d2"/>
</g>
<polygon points="714.0,214.5 716.2,217.9 717.9,220.8 718.4,222.4 717.9,224.1 717.0,226.9 716.9,227.1 716.9,227.2 716.9,227.4 716.9,227.6 717.0,227.8 717.0,227.9 717.1,228.0 717.2,228.2 718.7,229.9 719.9,231.1 721.1,232.6 722.9,235.2 723.1,235.3 723.2,235.5 723.4,235.6 723.5,235.8 723.6,235.9 723.8,235.9 723.9,236.0 724.0,236.0 724.1,236.0 726.7,235.6 729.5,234.3 731.3,232.4 732.5,230.6 735.0,229.2 738.3,228.4 738.6,228.3 738.8,228.3 739.0,228.2 739.2,228.1 739.3,228.0 739.5,227.9 739.6,227.8 739.7,227.6 739.8,227.5 739.9,227.3 740.0,227.1 740.1,226.9 740.1,226.7 740.1,226.5 740.7,222.7 740.8,220.2 739.8,219.3 737.7,217.8 735.3,214.9 735.2,214.7 735.0,214.5 734.9,214.3 734.7,214.1 734.6,214.0 734.4,213.8 734.3,213.6 734.1,213.5 734.0,213.4 733.8,213.3 733.7,213.2 732.2,213.0 730.8,213.9 728.9,214.8 726.8,214.8 725.0,213.6 723.9,211.7 723.9,211.5 723.8,211.4 723.8,211.3 723.7,211.2 723.6,211.1 723.6,211.1 723.5,211.0 723.4,211.0 721.6,210.2 718.1,209.8 714.9,210.3 713.5,212.0 713.4,212.1 713.3,212.2 713.3,212.4 713.3,212.6 713.3,212.8 713.3,212.9 713.3,213.1 713.4,213.3 713.4,213.5 713.5,213.7 713.6,213.9 713.7,214.1 713.8,214.3 714.0,214.5" fill="#1c1f22"/>
<polygon points="736.1,248.0 737.0,251.0 737.6,253.0 737.6,254.7 737.6,254.8 737.6,255.0 737.6,255.1 737.6,255.3 737.7,255.4 737.7,255.5 737.8,255.7 738.6,258.0 739.8,261.0 741.2,263.3 743.0,264.5 743.1,264.6 743.3,264.6 743.5,264.7 743.7,264.7 743.9,264.7 744.1,264.7 746.5,264.4 748.1,263.7 750.2,263.0 753.1,262.5 755.7,262.5 756.9,262.9 757.0,263.0 757.0,263.0 757.1,263.0 757.1,262.9 757.1,262.9 757.2,262.9 757.2,262.8 757.2,262.7 757.3,262.6 757.3,262.5 757.4,262.4 757.4,262.3 757.5,262.2 757.5,262.0 757.6,261.8 757.6,261.7 757.7,261.5 757.7,261.3 757.8,261.1 757.8,260.9 758.7,257.1 759.2,254.1 758.9,252.8 757.3,251.6 755.1,249.1 754.9,248.9 754.8,248.7 754.6,248.6 754.4,248.4 754.2,248.3 754.0,248.1 753.9,248.0 753.7,247.9 753.5,247.9 753.3,247.8 753.1,247.8 752.9,247.7 750.9,248.1 748.7,249.2 745.4,250.2 742.0,250.4 740.0,249.3 739.1,247.5 737.6,245.8 737.5,245.7 737.3,245.7 737.2,245.7 737.0,245.7 736.9,245.7 736.7,245.7 736.6,245.8 736.5,245.9 736.3,246.1 736.2,246.2 736.1,246.4 736.1,246.6 736.0,246.8 736.0,247.0 736.0,247.2 736.0,247.5 736.0,247.7 736.1,248.0" fill="#1c1f22"/>
<polygon points="705.1,199.3 706.6,202.5 707.7,205.4 707.8,206.6 706.8,207.8 705.5,210.8 705.5,211.0 705.5,211.2 705.5,211.5 705.5,211.7 705.6,211.8 705.6,212.0 705.8,212.2 705.9,212.3 706.0,212.4 706.2,212.5 706.4,212.6 706.6,212.6 706.8,212.6 707.0,212.6 707.3,212.6 707.5,212.5 707.7,212.4 707.9,212.4 710.4,210.8 712.1,209.2 715.0,208.0 715.3,207.9 715.5,207.8 715.7,207.7 716.0,207.6 716.2,207.5 716.4,207.4 716.6,207.3 716.8,207.2 717.0,207.1 717.1,206.9 717.2,206.8 717.3,206.6 717.3,206.4 717.4,206.3 717.1,203.3 715.7,201.3 713.8,199.9 712.3,197.1 712.0,193.2 712.0,193.0 712.0,192.9 712.0,192.7 712.0,192.6 712.0,192.5 712.0,192.4 712.0,192.4 711.9,192.3 711.8,192.3 711.8,192.4 711.7,192.4 711.5,192.5 711.4,192.6 711.3,192.7 711.1,192.8 711.0,193.0 710.8,193.1 710.6,193.3 707.5,195.6 705.6,197.3 705.0,198.1 705.0,198.1 705.0,198.1 704.9,198.2 704.9,198.2 704.9,198.3 704.8,198.4 704.8,198.5 704.8,198.6 704.9,198.7 704.9,198.8 704.9,198.9 705.0,199.0 705.0,199.2 705.1,199.3" fill="#1c1f22"/>
<polygon points="671.4,213.1 671.6,212.9 672.4,212.7 673.8,213.7 676.0,215.4 676.2,215.6 676.3,215.7 676.5,215.7 676.7,215.8 676.9,215.8 677.2,215.9 677.4,215.9 677.6,215.9 677.8,215.9 681.0,216.1 683.5,216.9 685.0,217.7 687.0,218.2 690.2,217.9 693.1,216.9 694.5,215.6 694.6,215.5 694.6,215.4 694.6,215.2 694.6,215.1 694.7,214.9 694.6,214.8 694.6,214.6 694.6,214.4 694.6,214.2 694.9,211.7 696.6,209.5 699.1,207.6 699.3,207.5 699.5,207.4 699.6,207.2 699.8,207.1 699.9,207.0 700.0,206.9 700.1,206.8 700.2,206.7 700.3,206.6 700.3,206.5 700.3,206.4 700.3,206.3 700.3,206.2 700.3,206.1 700.2,206.0 700.1,206.0 700.0,205.9 699.9,205.9 699.7,205.9 696.5,205.7 693.5,205.6 691.4,205.8 689.3,205.9 686.3,205.3 686.1,205.3 685.9,205.2 685.7,205.2 685.5,205.2 685.3,205.2 685.1,205.2 682.3,205.4 680.8,205.9 679.9,206.8 677.9,208.2 674.9,209.6 672.7,210.9 672.6,210.9 672.5,211.0 672.4,211.1 672.3,211.2 672.2,211.3 672.1,211.4 672.0,211.6 671.9,211.7 671.9,211.8 671.8,212.0 671.7,212.1 671.7,212.2 671.6,212.4 671.5,212.5 671.5,212.6 671.5,212.7 671.4,212.8 671.4,212.9 671.4,213.0 671.4,213.0 671.4,213.1" fill="#1c1f22"/>
<polyline points="500,250 512,249.5 525,251.5 534,255.5 541.5,264.5 545.5,273.5 549,278" fill="none" stroke="#1c1f22" stroke-width="2" stroke-linejoin="round"/>
<g fill="none" stroke="#5f6674" stroke-width="1.3" stroke-linejoin="round">
<polyline points="599.0,246.0 596.0,258.0 606.0,271.0 599.0,287.0 612.0,294.0 624.0,307.0 637.0,312.0"/>
<polyline points="637.0,307.0 658.0,292.0 673.0,294.0 694.0,305.0 710.0,300.0 725.0,289.0 738.0,279.0 756.0,289.0 766.0,294.0"/>
<polyline points="598.0,328.0 627.0,318.0 663.0,330.0 666.0,354.0 668.0,385.0 681.0,392.0 702.0,400.0 710.0,416.0 704.0,434.0 715.0,436.0 735.0,436.0 756.0,428.0 780.0,421.0"/>
<polyline points="598.0,328.0 609.0,354.0 612.0,385.0 591.0,392.0 594.0,416.0 586.0,426.0"/>
<polyline points="705.0,434.0 690.0,428.0 663.0,426.0 661.0,432.0 666.0,460.0 652.0,472.0"/>
<polyline points="560.0,439.0 586.0,444.0 625.0,437.5 631.0,457.0 649.0,464.6 652.0,472.0 651.0,500.7 663.0,519.0"/>
<polyline points="432.0,375.0 455.0,359.0 470.0,372.0 478.0,377.0 488.0,357.0 504.0,357.0 509.0,364.0 524.0,357.0 527.0,385.0 535.0,403.0 548.0,419.0 560.0,429.0 591.0,421.0 598.0,408.0"/>
<polyline points="535.0,403.0 501.0,442.0 493.0,465.0 478.0,480.0 462.0,475.0 447.0,486.0 424.0,496.0 401.0,509.0"/>
<polyline points="478.0,480.0 468.0,506.0 465.0,527.0 470.0,540.0 490.0,572.0"/>
<polyline points="556.0,430.0 560.6,439.0 571.0,457.0 563.6,472.0 560.6,493.0 568.0,499.0"/>
<polyline points="560.6,493.0 551.6,509.7 542.6,526.0 532.0,536.0 535.0,553.0 552.0,558.0 568.0,583.0 580.0,611.0 582.0,625.0 566.0,636.0 568.0,659.0 571.0,676.0 568.0,695.0 570.0,712.0"/>
<polyline points="532.0,553.0 521.0,564.0 490.0,572.0 493.0,592.0 485.0,608.0 470.0,624.0"/>
<polyline points="568.0,499.0 583.0,508.0 593.7,520.0 604.0,511.0 617.7,514.0 625.0,503.7 634.0,509.7 649.0,511.0 663.0,519.0 672.0,522.0"/>
<polyline points="439.6,570.0 445.4,581.8 457.0,599.0"/>
</g>
<polygon points="501.9,174.7 501.8,174.8 501.5,174.8 500.0,177.3 500.4,180.7 501.8,183.5 502.5,186.0 501.4,189.7 499.3,194.2 501.1,195.4 504.0,195.1 507.6,197.0 511.1,199.9 513.9,201.4 515.5,203.8 516.1,207.7 514.4,208.3 510.6,209.0 507.5,210.5 506.9,212.9 505.8,215.8 508.2,217.2 510.0,220.6 510.9,223.0 511.1,224.2 511.6,227.3 513.0,231.0 515.7,232.6 515.7,233.5 514.8,235.3 513.7,237.9 512.7,240.8 513.5,244.4 514.1,246.2 515.0,248.7 516.5,252.0 518.7,253.4 516.6,253.7 515.5,252.0 512.2,249.5 507.9,247.9 505.2,248.1 503.1,250.0 499.3,252.1 496.5,253.4 495.5,253.8 495.8,256.0 493.8,258.4 491.0,261.4 489.3,263.8 489.9,265.0 491.5,265.9 492.1,268.2 490.5,271.9 488.1,275.8 486.4,278.6 486.0,280.3 486.2,281.9 481.8,282.6 478.4,283.2 476.9,281.3 477.9,278.5 479.0,276.9 479.1,274.3 477.8,269.8 474.3,267.3 471.4,266.4 467.4,266.7 462.7,266.9 459.3,266.5 458.4,267.5 456.3,267.2 453.3,266.2 452.3,265.8 450.7,266.7 446.8,268.6 444.1,270.7 442.2,272.0 438.1,272.3 434.7,272.1 433.2,272.6 432.0,275.8 429.6,277.3 427.7,278.4 427.6,280.6 429.1,283.7 430.8,286.5 433.2,287.1 434.9,289.9 436.1,294.4 437.2,297.1 435.9,299.1 436.8,301.3 437.6,303.6 436.5,305.5 434.1,306.9 432.1,308.2 430.9,310.5 429.7,314.2 430.1,318.8 430.7,321.9 430.4,323.3 429.1,325.3 427.9,328.5 427.9,330.9 429.1,332.7 427.1,335.6 425.3,338.7 424.9,341.3 423.7,342.8 420.4,343.8 417.5,344.3 416.0,344.8 416.4,348.5 417.5,350.3 419.9,351.4 423.7,353.4 428.1,354.8 429.3,356.5 428.9,359.2 428.0,363.7 428.0,366.7 429.5,368.1 429.9,370.5 428.7,372.9 425.3,375.4 423.1,378.0 421.6,381.3 419.6,384.0 417.9,385.8 417.8,387.0 418.8,388.5 419.3,390.3 415.8,389.9 411.5,390.8 409.1,392.9 405.9,395.5 401.1,397.5 398.3,398.5 396.6,398.5 393.3,398.3 390.7,398.7 390.2,400.0 388.4,401.7 386.4,404.1 386.2,406.7 385.0,409.3 381.0,411.5 380.0,415.8 379.4,417.6 380.3,419.8 382.2,423.4 383.7,425.6 383.8,427.1 383.1,431.0 382.9,435.2 383.7,437.8 385.2,440.5 386.1,444.2 385.5,446.9 384.1,447.8 383.5,449.7 384.7,453.6 384.8,456.9 383.3,459.6 381.4,461.1 380.1,461.8 377.4,462.2 379.2,465.4 381.0,469.1 383.0,470.7 385.0,472.2 386.8,475.4 387.6,477.4 387.7,478.3 387.6,481.0 388.3,484.4 390.4,486.0 393.4,487.7 396.3,491.7 397.6,494.4 397.2,495.5 396.5,498.8 397.1,502.6 399.1,504.8 398.7,506.1 396.7,508.1 394.9,510.5 393.7,513.0 391.4,515.5 389.2,518.0 388.2,519.4 388.9,521.1 390.1,524.5 390.3,529.1 388.6,532.8 388.6,533.3 389.5,534.9 391.7,537.8 394.8,539.4 397.9,540.4 400.1,543.3 400.9,546.8 402.1,548.3 404.3,548.5 407.0,548.1 408.5,547.7 409.7,548.1 412.2,549.1 410.0,550.5 409.9,551.5 410.0,553.8 409.0,557.8 407.5,562.1 406.5,566.0 403.9,568.9 400.1,570.4 397.8,570.9 399.6,571.8 402.3,574.0 405.3,576.5 407.8,577.5 410.3,577.3 411.9,578.7 412.8,581.2 413.3,582.7 414.2,584.3 415.7,588.0 418.0,592.0 420.8,593.2 424.7,592.9 429.3,592.9 432.9,593.7 434.7,594.4 435.7,594.5 438.0,595.3 440.9,596.6 443.0,597.7 444.7,597.8 447.6,596.8 451.5,595.9 454.6,596.2 455.9,598.5 457.0,601.4 459.1,603.0 461.7,602.6 463.6,601.3 465.4,601.9 468.5,604.0 473.0,605.8 477.7,607.3 481.2,609.7 483.0,612.0 482.3,614.2 479.1,616.3 475.6,618.0 474.0,619.5 472.9,620.8 471.0,622.1 470.5,623.9 471.0,626.2 470.3,629.0 467.4,632.0 464.0,635.1 462.2,637.9 461.6,640.2 460.5,641.8 460.5,644.3 460.5,646.9 460.0,648.6 458.8,650.1 457.0,652.8 455.7,656.8 455.9,660.6 456.8,662.3 456.9,663.3 455.7,665.6 453.6,668.8 452.2,671.5 452.4,674.1 453.3,678.2 453.3,682.3 451.8,684.3 450.0,685.3 449.7,687.4 450.4,690.6 451.5,693.2 452.0,695.2 453.3,698.3 454.0,703.1 455.1,706.2 457.1,708.4 460.6,708.2 462.7,706.7 463.6,704.6 466.4,702.8 469.4,702.6 471.1,703.2 472.9,704.0 476.4,704.5 480.5,704.0 482.9,702.9 484.7,701.5 487.7,700.7 491.0,700.9 493.4,698.6 494.1,696.6 493.9,694.1 494.2,690.8 497.1,691.9 497.9,691.9 499.9,690.6 502.5,690.0 505.5,690.5 508.6,692.4 511.3,694.4 513.4,695.1 516.7,696.0 520.8,696.2 522.7,696.1 523.7,695.9 524.7,696.1 527.0,697.2 530.0,698.0 532.5,699.7 534.2,702.8 536.6,705.2 539.9,705.0 543.1,703.8 544.9,704.0 545.8,705.9 548.0,708.2 551.7,709.6 555.4,710.1 558.6,710.9 562.1,711.8 566.3,711.7 568.8,712.9 569.6,716.5 569.6,719.9 570.0,721.5 571.9,723.4 573.9,725.5 574.9,723.4 577.8,720.9 581.2,718.0 583.2,715.1 583.6,712.3 583.4,710.0 583.2,707.4 583.3,704.6 586.8,706.8 589.3,708.9 592.8,709.7 596.5,709.7 599.2,709.9 600.7,710.5 602.1,711.1 604.7,711.6 608.4,712.7 612.0,714.2 614.2,715.3 617.4,715.3 621.6,714.3 624.1,713.0 625.2,712.2 627.5,712.3 630.2,711.4 630.5,710.2 631.3,708.6 634.4,706.7 636.1,705.3 637.2,704.0 640.3,703.3 644.8,703.6 647.8,704.3 649.7,704.4 652.9,703.6 656.4,702.0 657.9,700.4 659.9,698.3 664.0,697.8 666.6,698.4 668.0,699.0 671.4,700.0 675.4,699.2 678.4,698.4 680.0,699.1 681.6,701.1 683.9,702.9 685.0,704.4 686.4,706.9 688.2,709.5 690.7,709.9 694.0,709.2 697.5,710.4 701.2,710.1 703.9,710.8 704.6,711.6 702.9,707.4 702.4,704.2 703.1,701.9 704.0,698.3 704.0,694.3 702.7,692.0 699.1,690.8 696.1,688.4 694.3,685.8 693.6,685.3 693.7,685.2 694.6,682.5 694.2,679.4 692.4,677.8 690.3,675.3 689.0,671.1 688.9,668.2 693.1,666.3 695.5,664.1 699.4,662.4 702.5,661.2 702.9,660.6 704.0,659.4 705.8,657.7 706.3,655.5 708.1,653.2 712.4,650.6 715.0,647.9 715.7,645.1 717.0,642.2 718.6,639.6 718.7,637.6 719.0,636.5 722.2,637.1 726.1,637.1 728.7,636.7 730.9,636.3 733.9,634.2 737.6,632.4 739.8,630.8 739.6,628.8 737.9,626.3 735.3,622.1 733.1,618.5 732.3,616.9 730.5,616.8 729.9,615.6 729.8,614.4 729.0,614.1 727.1,612.8 724.0,609.5 720.4,606.3 717.0,605.1 713.9,604.5 711.7,602.7 710.7,601.3 710.4,601.5 710.3,601.0 709.6,598.3 707.3,595.3 703.9,593.5 699.9,590.7 696.2,587.3 693.6,586.2 692.0,586.4 691.1,584.6 691.2,581.8 690.8,580.4 689.4,578.3 686.9,574.3 683.7,570.7 681.0,568.7 679.5,565.9 679.0,562.4 678.5,561.2 677.2,560.2 675.1,557.3 675.3,554.0 676.0,551.2 677.2,548.4 678.6,544.9 678.7,541.4 677.4,540.3 674.9,539.7 672.3,537.2 670.4,535.8 669.3,535.3 668.6,532.1 667.6,528.2 665.7,525.9 663.4,522.4 663.5,521.3 663.6,520.2 665.5,519.2 668.9,517.5 670.9,515.5 673.3,513.4 677.6,511.1 680.4,508.8 681.2,506.8 684.3,506.4 688.1,506.3 689.6,505.8 691.2,504.6 694.4,502.9 696.2,501.7 696.9,501.4 699.6,502.1 702.8,503.0 704.1,503.7 705.6,503.3 708.8,501.9 713.0,498.5 715.6,495.2 718.2,492.8 722.1,491.7 724.1,491.4 724.9,492.0 727.4,491.6 729.8,489.7 730.2,486.6 732.6,483.1 736.2,480.6 737.9,479.6 740.6,479.8 745.0,480.2 747.3,479.7 749.1,477.8 752.8,474.9 754.0,471.4 753.8,468.3 754.9,465.8 757.8,464.4 760.5,463.9 762.1,467.2 763.7,470.1 765.6,470.7 768.2,470.5 771.7,471.3 775.1,472.6 777.7,473.5 780.1,475.1 782.9,478.2 785.6,476.3 786.9,475.0 786.3,473.9 785.6,472.2 786.9,469.6 789.4,465.1 791.7,460.0 792.2,456.7 791.2,455.1 790.7,453.2 791.6,449.8 791.8,446.7 792.4,444.8 792.4,442.2 791.0,438.1 788.8,434.9 786.9,434.7 785.9,433.7 785.9,431.2 786.3,429.7 785.9,429.0 784.3,426.2 781.4,422.6 778.5,420.4 776.5,417.5 776.2,412.3 776.7,408.6 776.5,406.2 774.8,402.2 773.4,399.4 773.5,398.3 775.7,397.2 778.4,394.2 779.7,390.1 778.9,386.8 777.2,384.7 775.4,381.4 775.0,377.5 775.3,375.9 775.3,374.8 773.8,371.7 771.4,369.0 769.3,367.5 768.7,364.6 771.2,360.0 773.0,356.4 773.2,354.5 772.4,353.1 772.1,350.9 770.7,347.8 770.8,346.6 771.5,344.9 771.3,341.1 768.3,339.8 764.4,338.7 760.7,334.9 758.0,330.9 757.0,328.8 757.0,325.8 757.0,322.4 756.0,321.7 756.9,320.3 756.1,319.1 756.2,317.5 758.1,315.3 760.0,312.7 761.5,309.2 762.9,307.2 763.9,305.5 764.2,303.2 763.9,300.7 763.8,298.8 765.0,296.9 765.8,293.7 765.4,288.9 763.7,285.7 761.6,283.9 760.5,280.9 761.0,277.6 761.9,276.0 761.9,274.2 760.5,270.0 758.5,266.1 757.2,263.6 757.5,260.0 758.6,255.6 759.1,253.2 758.2,252.0 756.2,249.4 754.7,246.2 750.7,246.3 748.2,247.3 746.5,246.6 744.5,244.6 743.8,242.7 742.7,240.7 740.6,236.8 737.7,233.7 734.4,232.9 731.4,231.6 729.3,231.9 726.3,232.0 723.1,231.8 720.9,231.3 723.6,229.5 727.5,226.6 729.2,222.9 729.4,219.3 730.4,216.3 731.4,214.1 730.9,213.2 731.8,210.3 732.8,206.2 732.6,203.5 731.0,201.3 729.1,197.7 726.6,196.0 724.6,195.1 722.7,192.5 720.6,188.4 718.2,186.4 715.0,187.5 713.6,189.7 711.3,192.4 707.8,195.2 706.0,198.1 706.5,200.9 707.1,203.2 706.0,204.6 704.0,205.4 702.6,204.5 700.7,204.6 696.6,205.8 693.1,206.8 691.0,207.5 687.9,207.7 683.7,207.3 681.1,207.0 680.0,207.2 677.0,209.5 673.2,211.4 671.7,213.1 671.8,215.0 670.6,217.4 669.0,220.1 668.7,222.5 666.2,224.4 661.8,225.9 659.4,227.4 657.9,227.4 655.0,227.6 651.4,227.7 648.5,229.2 647.2,230.5 644.8,231.7 642.2,232.9 641.6,234.5 641.1,236.4 638.5,238.5 636.2,240.5 635.0,242.4 632.9,243.8 629.2,245.0 626.7,243.4 625.1,241.7 621.1,241.6 616.5,243.4 613.9,245.9 611.0,247.7 606.9,248.1 604.4,247.5 603.4,246.8 603.5,243.5 604.3,240.7 604.5,239.6 603.1,236.9 602.3,232.6 602.3,228.8 604.4,226.6 606.8,225.8 608.4,225.8 610.7,225.3 612.4,222.6 612.7,218.8 611.7,215.4 611.0,213.2 613.4,211.9 617.1,210.2 619.4,208.4 620.8,207.0 620.9,206.8 620.3,205.2 618.7,203.3 616.3,202.7 615.8,204.0 614.0,204.7 612.4,205.6 610.6,207.1 609.2,209.3 606.1,209.8 601.6,211.2 599.4,213.7 598.3,216.7 595.5,219.4 592.1,218.0 590.1,216.3 589.1,215.1 587.6,213.2 585.2,210.5 581.6,209.7 579.0,210.1 577.1,211.2 574.6,212.1 571.2,211.8 568.3,212.1 567.4,212.4 567.2,213.1 566.1,214.5 566.2,212.6 566.5,211.1 567.3,209.1 568.8,206.9 570.6,205.1 569.3,203.5 567.5,201.9 565.3,198.9 563.1,196.2 561.9,197.7 559.6,199.4 555.9,200.9 552.9,201.5 555.0,200.5 558.0,198.5 559.9,195.7 561.8,192.6 562.0,189.9 562.0,186.9 561.4,185.0 558.3,185.9 556.1,185.7 554.2,183.5 552.1,180.7 549.5,179.0 546.6,177.8 543.9,176.7 541.9,176.0 539.5,176.2 535.9,176.9 532.5,177.0 530.6,175.9 529.7,174.0 528.1,172.5 525.4,172.5 523.1,173.9 521.7,175.8 519.3,176.7 515.0,175.7 511.3,173.4 509.3,171.7 507.4,171.7 504.3,173.2 501.9,174.7" fill="none" stroke="#6b7180" stroke-width="0.8"/>
<g font-family="Liberation Sans, sans-serif">
<text x="493" y="131" font-size="12" fill="#cfcfcf" font-weight="normal" text-anchor="middle" letter-spacing="0">Esbjerg</text>
<text x="957" y="219" font-size="12" fill="#cfcfcf" font-weight="normal" text-anchor="middle" letter-spacing="0">Danzig</text>
<text x="928" y="314" font-size="12" fill="#cfcfcf" font-weight="normal" text-anchor="middle" letter-spacing="0">Bydgoszcz</text>
<text x="880" y="367" font-size="12" fill="#cfcfcf" font-weight="normal" text-anchor="middle" letter-spacing="0">Posen</text>
<text x="348" y="370" font-size="12" fill="#cfcfcf" font-weight="normal" text-anchor="middle" letter-spacing="0">rdam</text>
<text x="883" y="463" font-size="12" fill="#cfcfcf" font-weight="normal" text-anchor="middle" letter-spacing="0">Breslau</text>
<text x="970" y="524" font-size="12" fill="#cfcfcf" font-weight="normal" text-anchor="middle" letter-spacing="0">Katowi</text>
<text x="765" y="537" font-size="12" fill="#cfcfcf" font-weight="normal" text-anchor="middle" letter-spacing="0">Prag</text>
<text x="388" y="570" font-size="12" fill="#cfcfcf" font-weight="normal" text-anchor="middle" letter-spacing="0">Luxemburg</text>
<text x="853" y="667" font-size="12" fill="#cfcfcf" font-weight="normal" text-anchor="middle" letter-spacing="0">Wien</text>
<text x="855" y="699" font-size="12" fill="#cfcfcf" font-weight="normal" text-anchor="middle" letter-spacing="0">Mattersburg</text>
<text x="968" y="715" font-size="12" fill="#cfcfcf" font-weight="normal" text-anchor="middle" letter-spacing="0">Budap</text>
<text x="497" y="723" font-size="12" fill="#cfcfcf" font-weight="normal" text-anchor="middle" letter-spacing="0">Zürich</text>
<text x="541" y="739" font-size="12" fill="#cfcfcf" font-weight="normal" text-anchor="middle" letter-spacing="0">Vaduz</text>
<text x="447" y="752" font-size="12" fill="#cfcfcf" font-weight="normal" text-anchor="middle" letter-spacing="0">Bern</text>
<text x="811" y="744" font-size="12" fill="#cfcfcf" font-weight="normal" text-anchor="middle" letter-spacing="0">Graz</text>
<text x="795" y="204" font-size="11.5" fill="#777" font-weight="normal" text-anchor="middle" letter-spacing="2.2">Ostsee</text>
<text x="386" y="335" font-size="11.5" fill="#777" font-weight="normal" text-anchor="middle" letter-spacing="2.2">DERLANDE</text>
<text x="351" y="508" font-size="11.5" fill="#777" font-weight="normal" text-anchor="middle" letter-spacing="2.2">IEN</text>
<text x="383" y="558" font-size="11.5" fill="#777" font-weight="normal" text-anchor="middle" letter-spacing="2.2">LUXEMBURG</text>
<text x="824" y="570" font-size="11.5" fill="#777" font-weight="normal" text-anchor="middle" letter-spacing="2.2">TSCHECHIEN</text>
<text x="960" y="626" font-size="11.5" fill="#777" font-weight="normal" text-anchor="middle" letter-spacing="2.2">SLOWA</text>
<text x="970" y="639" font-size="11.5" fill="#777" font-weight="normal" text-anchor="middle" letter-spacing="2.2">REP</text>
<text x="754" y="729" font-size="11.5" fill="#777" font-weight="normal" text-anchor="middle" letter-spacing="2.2">ÖSTERREICH</text>
<text x="483" y="761" font-size="11.5" fill="#777" font-weight="normal" text-anchor="middle" letter-spacing="2.2">SCHWEIZ</text>
<text x="967" y="758" font-size="11.5" fill="#777" font-weight="normal" text-anchor="middle" letter-spacing="2.2">UNGA</text>
<text x="779" y="795" font-size="11.5" fill="#777" font-weight="normal" text-anchor="middle" letter-spacing="2.2">SLOWENIEN</text>
</g>
<g font-family="Liberation Sans, sans-serif">
<text x="565" y="281" font-size="12.2" fill="#dcdcdc" font-weight="normal" text-anchor="middle" letter-spacing="0" stroke="#5a5a5a" stroke-width="2" paint-order="stroke">Hamburg</text>
<text x="509" y="317" font-size="12.2" fill="#dcdcdc" font-weight="normal" text-anchor="middle" letter-spacing="0" stroke="#5a5a5a" stroke-width="2" paint-order="stroke">Bremen</text>
<text x="717" y="359" font-size="12.2" fill="#dcdcdc" font-weight="normal" text-anchor="middle" letter-spacing="0" stroke="#5a5a5a" stroke-width="2" paint-order="stroke">Berlin</text>
<text x="551" y="370" font-size="12.2" fill="#dcdcdc" font-weight="normal" text-anchor="middle" letter-spacing="0" stroke="#5a5a5a" stroke-width="2" paint-order="stroke">Hannover</text>
<text x="496" y="397" font-size="12.2" fill="#dcdcdc" font-weight="normal" text-anchor="middle" letter-spacing="0" stroke="#5a5a5a" stroke-width="2" paint-order="stroke">Bielefeld</text>
<text x="672" y="445" font-size="12.2" fill="#dcdcdc" font-weight="normal" text-anchor="middle" letter-spacing="0" stroke="#5a5a5a" stroke-width="2" paint-order="stroke">Leipzig</text>
<text x="427" y="438" font-size="12.2" fill="#dcdcdc" font-weight="normal" text-anchor="middle" letter-spacing="0" stroke="#5a5a5a" stroke-width="2" paint-order="stroke">Essen</text>
<text x="423" y="455" font-size="12.2" fill="#dcdcdc" font-weight="normal" text-anchor="middle" letter-spacing="0" stroke="#5a5a5a" stroke-width="2" paint-order="stroke">Düsseldorf</text>
<text x="424" y="475" font-size="12.2" fill="#dcdcdc" font-weight="normal" text-anchor="middle" letter-spacing="0" stroke="#5a5a5a" stroke-width="2" paint-order="stroke">Köln</text>
<text x="733" y="467" font-size="12.2" fill="#dcdcdc" font-weight="normal" text-anchor="middle" letter-spacing="0" stroke="#5a5a5a" stroke-width="2" paint-order="stroke">Dresden</text>
<text x="697" y="482" font-size="12.2" fill="#dcdcdc" font-weight="normal" text-anchor="middle" letter-spacing="0" stroke="#5a5a5a" stroke-width="2" paint-order="stroke">Chemnitz</text>
<text x="502" y="528" font-size="12.2" fill="#dcdcdc" font-weight="normal" text-anchor="middle" letter-spacing="0" stroke="#5a5a5a" stroke-width="2" paint-order="stroke">Frankfurt</text>
<text x="502" y="541" font-size="12.2" fill="#dcdcdc" font-weight="normal" text-anchor="middle" letter-spacing="0" stroke="#5a5a5a" stroke-width="2" paint-order="stroke">am Main</text>
<text x="612" y="581" font-size="12.2" fill="#dcdcdc" font-weight="normal" text-anchor="middle" letter-spacing="0" stroke="#5a5a5a" stroke-width="2" paint-order="stroke">Nürnberg</text>
<text x="494" y="579" font-size="12.2" fill="#dcdcdc" font-weight="normal" text-anchor="middle" letter-spacing="0" stroke="#5a5a5a" stroke-width="2" paint-order="stroke">Mannheim</text>
<text x="525" y="629" font-size="12.2" fill="#dcdcdc" font-weight="normal" text-anchor="middle" letter-spacing="0" stroke="#5a5a5a" stroke-width="2" paint-order="stroke">Stuttgart</text>
<text x="635" y="672" font-size="12.2" fill="#dcdcdc" font-weight="normal" text-anchor="middle" letter-spacing="0" stroke="#5a5a5a" stroke-width="2" paint-order="stroke">München</text>
<text x="427" y="596" font-size="12.2" fill="#dcdcdc" font-weight="normal" text-anchor="middle" letter-spacing="0" stroke="#5a5a5a" stroke-width="2" paint-order="stroke">Saarbrücken</text>
<text x="770" y="290.5" font-size="12.2" fill="#dcdcdc" font-weight="normal" text-anchor="middle" letter-spacing="0" stroke="#5a5a5a" stroke-width="2" paint-order="stroke">Stettin</text>
<text x="567" y="436.5" font-size="14" fill="#5a5a5a" font-weight="bold" text-anchor="middle" letter-spacing="2.9" stroke="#c8ccd6" stroke-width="2" paint-order="stroke">DEUTSCHLAND</text>
</g>
<g stroke="#666" stroke-width="1" fill="none"><path d="M362 787 V795 M362 791 H480"/></g>
<text x="490" y="785" font-size="11" fill="#777" font-weight="normal" text-anchor="middle" letter-spacing="0">200km</text>
<text x="469" y="805" font-size="11" fill="#777" font-weight="normal" text-anchor="middle" letter-spacing="0">100mi</text>
<text x="835" y="826" font-size="11" fill="#bbb" font-weight="normal" text-anchor="middle" letter-spacing="0">Zagreb</text>
<text x="955" y="352" font-size="14.5" fill="#777" font-weight="normal" text-anchor="start" letter-spacing="2.6">POL</text>
<text x="984" y="414" font-size="12" fill="#cfcfcf" font-weight="normal" text-anchor="start" letter-spacing="0">Ł</text>
</svg>
</div>

<!-- logos panel -->
<div class="p" style="left:336px;top:833px;width:653px;height:90px"></div>

<!-- cases -->
<div class="p" style="left:999px;top:81px;width:328px;height:73px"></div>
<div class="t" style="left:999px;width:328px;right:auto;top:82px;font-size:15px;color:#f0f0f0">COVID-19-Fälle</div>
<div class="t" style="left:999px;width:328px;right:auto;top:102px;font-size:29.5px;font-weight:bold;color:#20b8ee">22</div>
<div class="t" style="left:999px;width:328px;right:auto;top:135px;font-size:15px;color:#1b84a8">aus total 18.610</div>
<!-- deaths -->
<div class="p" style="left:999px;top:164px;width:328px;height:73px"></div>
<div class="t" style="left:999px;width:328px;right:auto;top:165px;font-size:15px;color:#f0f0f0">COVID-19-Todesfälle</div>
<div class="t" style="left:999px;width:328px;right:auto;top:185px;font-size:29.5px;font-weight:bold;color:#d2d2d2">0</div>
<div class="t" style="left:999px;width:328px;right:auto;top:218px;font-size:15px;color:#8c8c8c">aus total 55</div>
<!-- info -->
<div class="p" style="left:1337px;top:81px;width:328px;height:156px"></div>
<div class="t" style="left:1337px;width:328px;right:auto;top:88px;font-size:12.3px;color:#eee">Kombination, Analyse &amp; Kommunikation relevanter Daten</div>
<div class="t" style="left:1337px;width:328px;right:auto;top:105px;font-size:12.3px;color:#eee">zum Coronavirus</div>
<div class="t" style="left:1337px;width:328px;right:auto;top:122px;font-size:12px;color:#3a8fdc">Erkunden Sie den NPGEO Corona Hub</div>
<svg class="a" style="left:1394px;top:155px" width="214" height="35" viewBox="0 0 214 35">
<rect x="0.00" y="0" width="35.9" height="35" fill="#1a73d2"/>
<rect x="35.67" y="0" width="35.9" height="35" fill="#7e7e7e"/>
<rect x="71.34" y="0" width="35.9" height="35" fill="#008a8a"/>
<rect x="107.01" y="0" width="35.9" height="35" fill="#f5a300"/>
<rect x="142.68" y="0" width="35.9" height="35" fill="#6b6b6b"/>
<rect x="178.35" y="0" width="35.9" height="35" fill="#9a68c6"/>
<g fill="#fff"><path d="M3 31 L10 25 Q14 22 20 24 L26 24 Q28 25 26 27 L18 27 L27 27 L33 21 Q35 20 35 22 L28 31 Z"/><path d="M17 22 V12" stroke="#fff" stroke-width="1.8"/><path d="M17 13 Q8 13 5 4 Q14 4 17 13Z"/><path d="M18 16 Q22 8 31 9 Q28 17 18 16Z"/></g>
<g fill="#fff" transform="translate(35.67,0)"><path d="M18 3 Q24 3 24 9 Q24 13 18 18 Q12 13 12 9 Q12 3 18 3Z"/><circle cx="18" cy="8.5" r="2" fill="#7e7e7e"/><path d="M11 33 V25 L18 19 L25 25 V33Z"/><rect x="15" y="27" width="3" height="3" fill="#7e7e7e"/><rect x="19" y="27" width="3" height="3" fill="#7e7e7e"/><path d="M0 33 V26 L5 22 L7 24 V33Z"/><path d="M29 33 V26 L34 22 L36 23 V33Z"/></g>
<g transform="translate(71.34,0)"><path d="M18 31 L6 19 Q1 13 5 8 Q10 3 18 10 Q26 3 31 8 Q35 13 30 19 Z" fill="#fff"/><path d="M0 19 H10 L13 14 L16 24 L19 12 L22 19 H27" fill="none" stroke="#008a8a" stroke-width="1.6"/><circle cx="27" cy="19" r="2" fill="#008a8a"/><path d="M0 19 H6" stroke="#fff" stroke-width="1.5"/></g>
<g transform="translate(107.01,0)" stroke="#fff" fill="none" stroke-width="1.3"><path d="M27 0 V4 H31 V9 H27 V14 H22 V19 H18 V25 H22 V32 H36"/><path d="M0 22 L10 12 M0 28 L16 12 M2 33 L20 15 M8 33 L20 21 M14 33 L20 27 M0 16 L4 12"/><path d="M0 12 H20 V33"/></g>
<g fill="#fff" transform="translate(142.68,0)"><path d="M12 4 H28 L31 11 H34 V21 H31 V25 H28 V20 H14 V11 L12 11Z"/><rect x="15" y="7" width="12" height="4" fill="#6b6b6b"/><path d="M6 13 H22 L25 20 H28 V30 H25 V34 H22 V30 H6 V34 H3 V30 H1 V20 H3Z"/><rect x="8" y="15" width="12" height="5" fill="#6b6b6b"/><circle cx="6" cy="25" r="2" fill="#6b6b6b"/><circle cx="23" cy="25" r="2" fill="#6b6b6b"/></g>
<g fill="#fff" transform="translate(178.35000000000002,0)"><path d="M18 2 L30 9 H6Z"/><rect x="8" y="9" width="2.5" height="14"/><rect x="25.5" y="9" width="2.5" height="14"/><path d="M13 19 Q13 11 18 11 Q23 11 23 19 L24 21 H12Z"/><rect x="6" y="23" width="24" height="3"/><rect x="7" y="27" width="22" height="8"/><rect x="7" y="29" width="22" height="1" fill="#9a68c6"/></g>
</svg>
<div class="a" style="left:849px;top:119px;width:132px;height:34px;background:#333;border:1px solid #484848"></div>
<svg class="a" style="left:849px;top:119px" width="132" height="34" viewBox="849 119 132 34" fill="none" stroke="#d8d8d8" stroke-width="1.5"><circle cx="863.8" cy="133.3" r="5.3"/><path d="M867.6 137.2 L873.6 143"/><path d="M895.5 128.5 H904.8 V143 L900.1 139 L895.5 143 Z" stroke-width="1.3"/><g stroke-width="0.9"><rect x="925.3" y="128.3" width="2.4" height="2.4"/><circle cx="926.5" cy="133.5" r="1.3"/><rect x="925.3" y="136.3" width="2.4" height="2.4"/><path d="M925 142.8 L926.5 140.2 L928 142.8Z"/><path d="M930 129.5 H939 M930 133.5 H939 M930 137.5 H939 M930 141.6 H939" stroke-width="1.2"/></g><g stroke-width="1"><rect x="956.5" y="128.5" width="6.5" height="6.5"/><rect x="965.5" y="128.5" width="6.5" height="6.5"/><rect x="956.5" y="137.5" width="6.5" height="6.5"/><rect x="965.5" y="137.5" width="6.5" height="6.5"/><path d="M958.5 130.5 L961 133 M970 130.5 L967.5 133 M958.5 142 L961 139.5 M970 142 L967.5 139.5" stroke-width="0.7" opacity="0.7"/></g></svg>
<div class="a" style="left:685px;top:802px;width:292px;height:15px;background:rgba(215,215,215,0.88)"></div>
<div class="a" style="left:689px;top:802px;font-size:12.7px;line-height:15px;color:#333">GDI-TH, Esri, HERE, Garmin, FAO, NOAA, US...</div>
<div class="a" style="left:399px;top:839px;width:172px;height:50px;background:#fff"></div>
<div class="a" style="left:403.5px;top:840px;font-family:'Liberation Serif',serif;font-size:11.9px;letter-spacing:1.25px;color:#1f67b0;-webkit-text-stroke:0.1px #1f67b0">ROBERT KOCH INSTITUT</div>
<svg class="a" style="left:488px;top:856px" width="72" height="30" viewBox="488 856 72 30"><path d="M494 866 L556 882 M494 881 L556 865" stroke="#dde3ee" stroke-width="2" fill="none"/><path d="M507 859 V881 M539 859 V881" stroke="#1f6fc4" stroke-width="1.2"/><path d="M507 866 Q522 857 539 870 M507 877 Q522 887 539 862" stroke="#1f6fc4" stroke-width="2" fill="none"/></svg>
<div class="a" style="left:574px;top:839px;width:175px;height:50px;background:#fff"></div>
<svg class="a" style="left:574px;top:839px" width="175" height="50" viewBox="574 839 175 50"><rect x="647.7" y="841.2" width="44.8" height="30.3" fill="#8f8e86"/><path d="M647.7 841.2 H675.5 Q670 864 647.7 868.5 Z" fill="#1e5aad"/><path d="M676 841.2 Q671 865 647.7 869" stroke="#fff" stroke-width="1" fill="none"/><rect x="647.7" y="873.7" width="44.8" height="12" fill="#f2b600"/><text x="650" y="884.5" font-family="Liberation Sans, sans-serif" font-size="11.5" fill="#fff">BONN</text><text x="576" y="884" font-family="Liberation Sans, sans-serif" font-size="10.6" fill="#999">UNIVERSITÄT</text><circle cx="714.8" cy="857.5" r="16" fill="#aab6e0"/><path d="M699 855 Q707 850 714 854 Q722 858 730 852 V862 Q722 866 714 862 Q706 858 699 863Z" fill="#7f90d0"/><text x="709.5" y="872" font-family="Liberation Sans, sans-serif" font-size="14" fill="#fff">ih</text><text x="723.5" y="872" font-family="Liberation Sans, sans-serif" font-size="14" fill="#111">ph</text><g font-family="Liberation Sans, sans-serif" font-size="5.2" fill="#777"><text x="697.5" y="880">Institut für Hygiene und</text><text x="697.5" y="886">Öffentliche Gesundheit</text></g></svg>
<div class="a" style="left:753px;top:839px;width:174px;height:50px;background:#fff"></div>
<svg class="a" style="left:753px;top:839px" width="174" height="50" viewBox="753 839 174 50"><circle cx="780" cy="864" r="16.5" fill="#fff" stroke="#111" stroke-width="1.6"/><path d="M772 851 Q766 856 766 862 Q770 866 776 864 Q779 860 777 855Z M782 853 Q790 852 793 858 Q795 868 789 876 Q784 872 786 866 Q781 862 782 853Z M770 868 Q775 870 777 876 Q773 880 769 874Z" fill="#111"/><path d="M764 858 Q780 852 796 864 M766 872 Q782 866 795 873 M774 849 Q784 864 777 880 M786 849 Q790 864 786 880" stroke="#111" stroke-width="0.9" fill="none"/><text x="0" y="0" transform="translate(802.5 874.5) scale(0.86 1)" font-family="Liberation Sans, sans-serif" font-size="39" font-weight="bold" fill="#111" letter-spacing="-0.5">esri</text><rect x="875.3" y="845" width="1" height="31" fill="#333"/><g font-family="Liberation Sans, sans-serif" font-size="7.5" font-weight="bold" font-style="italic" fill="#111"><text x="885" y="852">THE</text><text x="885" y="859.5">SCIENCE</text><text x="885" y="867">OF</text><text x="885" y="874.5">WHERE</text></g></svg>

<!-- age chart -->
<div class="p" style="left:999px;top:247px;width:666px;height:220px"></div>
<svg class="a" style="left:0;top:0" width="1672" height="931" viewBox="0 0 1672 931" font-family="Liberation Sans, sans-serif">
<text x="1332" y="268" font-size="13.6" font-weight="bold" fill="#fff" text-anchor="middle">COVID-19 Fälle nach Altersgruppe und Geschlecht</text>
<g stroke="#3e3e3e" stroke-width="1" stroke-dasharray="4,4" fill="none">
<path d="M1051 352.1 H1527.8"/>
<path d="M1051 300.3 H1527.8"/>
<path d="M1170.2 300.3 V404"/>
<path d="M1289.4 300.3 V404"/>
<path d="M1408.6 300.3 V404"/>
<path d="M1527.8 300.3 V404"/>
</g>
<rect x="1062.0" y="393.6" width="46" height="10.4" fill="#0689b3"/>
<rect x="1113.0" y="393.6" width="46" height="10.4" fill="#045483"/>
<path d="M1110.6 404 V410" stroke="#8a8a8a" stroke-width="1"/>
<text x="1110.6" y="428" font-size="11.5" fill="#e6e6e6" text-anchor="middle">5-14</text>
<rect x="1181.2" y="352.1" width="46" height="51.8" fill="#0689b3"/>
<rect x="1232.2" y="393.6" width="46" height="10.4" fill="#045483"/>
<path d="M1229.8 404 V410" stroke="#8a8a8a" stroke-width="1"/>
<text x="1229.8" y="428" font-size="11.5" fill="#e6e6e6" text-anchor="middle">15-34</text>
<rect x="1300.4" y="362.5" width="46" height="41.5" fill="#0689b3"/>
<rect x="1351.4" y="310.7" width="46" height="93.3" fill="#045483"/>
<path d="M1349.0 404 V410" stroke="#8a8a8a" stroke-width="1"/>
<text x="1349.0" y="428" font-size="11.5" fill="#e6e6e6" text-anchor="middle">35-59</text>
<rect x="1419.6" y="393.6" width="46" height="10.4" fill="#0689b3"/>
<path d="M1468.2 404 V410" stroke="#8a8a8a" stroke-width="1"/>
<text x="1468.2" y="428" font-size="11.5" fill="#e6e6e6" text-anchor="middle">60-79</text>
<path d="M1051 300.3 V404 M1045 404 H1527.8" stroke="#8a8a8a" stroke-width="1" fill="none"/>
<path d="M1045 404.0 H1051" stroke="#8a8a8a" stroke-width="1"/>
<text x="1038" y="408.0" font-size="11.5" fill="#e6e6e6" text-anchor="end">0</text>
<path d="M1045 352.1 H1051" stroke="#8a8a8a" stroke-width="1"/>
<text x="1038" y="356.1" font-size="11.5" fill="#e6e6e6" text-anchor="end">5</text>
<path d="M1045 300.3 H1051" stroke="#8a8a8a" stroke-width="1"/>
<text x="1038" y="304.3" font-size="11.5" fill="#e6e6e6" text-anchor="end">10</text>
<text x="1289" y="453.5" font-size="12" font-weight="bold" fill="#fff" text-anchor="middle">Altersgruppe</text>
<circle cx="1575" cy="369" r="8" fill="#0689b3"/><circle cx="1575" cy="397.3" r="8" fill="#045483"/>
<text x="1587" y="374" font-size="11.5" fill="#e6e6e6">Männlich</text>
<text x="1587" y="402" font-size="11.5" fill="#e6e6e6">Weiblich</text>
</svg>

<!-- daily chart -->
<div class="p" style="left:999px;top:477px;width:666px;height:416px"></div>
<svg class="a" style="left:0;top:0" width="1672" height="931" viewBox="0 0 1672 931" font-family="Liberation Sans, sans-serif">
<text x="1332" y="499" font-size="16.2" font-weight="bold" fill="#fff" text-anchor="middle">Neue COVID-19-Fälle/Tag</text>
<g stroke="#3e3e3e" stroke-width="1" stroke-dasharray="4,4" fill="none">
<path d="M1053.5 828.3 H1631.5"/>
<path d="M1053.5 795.2 H1631.5"/>
<path d="M1053.5 762.1 H1631.5"/>
<path d="M1053.5 729.0 H1631.5"/>
<path d="M1053.5 695.9 H1631.5"/>
<path d="M1053.5 662.8 H1631.5"/>
<path d="M1053.5 629.7 H1631.5"/>
<path d="M1053.5 596.6 H1631.5"/>
<path d="M1053.5 563.5 H1631.5"/>
<path d="M1053.5 530.4 H1631.5"/>
<path d="M1154.0 530.4 V861.4"/>
<path d="M1254.5 530.4 V861.4"/>
<path d="M1355.1 530.4 V861.4"/>
<path d="M1455.6 530.4 V861.4"/>
<path d="M1556.1 530.4 V861.4"/>
</g>
<rect x="1056.1" y="828.3" width="20.9" height="33.1" fill="#00bfff"/>
<rect x="1282.3" y="828.3" width="20.9" height="33.1" fill="#00bfff"/>
<rect x="1332.5" y="629.7" width="20.9" height="231.7" fill="#00bfff"/>
<rect x="1407.9" y="828.3" width="20.9" height="33.1" fill="#00bfff"/>
<rect x="1433.0" y="828.3" width="20.9" height="33.1" fill="#00bfff"/>
<rect x="1458.2" y="828.3" width="20.9" height="33.1" fill="#00bfff"/>
<rect x="1483.3" y="762.1" width="20.9" height="99.3" fill="#00bfff"/>
<rect x="1508.4" y="762.1" width="20.9" height="99.3" fill="#00bfff"/>
<rect x="1533.6" y="563.5" width="20.9" height="297.9" fill="#00bfff"/>
<rect x="1583.8" y="828.3" width="20.9" height="33.1" fill="#00bfff"/>
<rect x="1609.0" y="695.9" width="20.9" height="165.5" fill="#00bfff"/>
<path d="M1053.5 530.4 V861.4 M1048 861.4 H1631.5" stroke="#8a8a8a" stroke-width="1" fill="none"/>
<path d="M1048 861.4 H1053.5" stroke="#8a8a8a" stroke-width="1"/>
<text x="1040.5" y="865.4" font-size="11.5" fill="#e6e6e6" text-anchor="end">0,5</text>
<path d="M1048 828.3 H1053.5" stroke="#8a8a8a" stroke-width="1"/>
<text x="1040.5" y="832.3" font-size="11.5" fill="#e6e6e6" text-anchor="end">1</text>
<path d="M1048 795.2 H1053.5" stroke="#8a8a8a" stroke-width="1"/>
<text x="1040.5" y="799.2" font-size="11.5" fill="#e6e6e6" text-anchor="end">1,5</text>
<path d="M1048 762.1 H1053.5" stroke="#8a8a8a" stroke-width="1"/>
<text x="1040.5" y="766.1" font-size="11.5" fill="#e6e6e6" text-anchor="end">2</text>
<path d="M1048 729.0 H1053.5" stroke="#8a8a8a" stroke-width="1"/>
<text x="1040.5" y="733.0" font-size="11.5" fill="#e6e6e6" text-anchor="end">2,5</text>
<path d="M1048 695.9 H1053.5" stroke="#8a8a8a" stroke-width="1"/>
<text x="1040.5" y="699.9" font-size="11.5" fill="#e6e6e6" text-anchor="end">3</text>
<path d="M1048 662.8 H1053.5" stroke="#8a8a8a" stroke-width="1"/>
<text x="1040.5" y="666.8" font-size="11.5" fill="#e6e6e6" text-anchor="end">3,5</text>
<path d="M1048 629.7 H1053.5" stroke="#8a8a8a" stroke-width="1"/>
<text x="1040.5" y="633.7" font-size="11.5" fill="#e6e6e6" text-anchor="end">4</text>
<path d="M1048 596.6 H1053.5" stroke="#8a8a8a" stroke-width="1"/>
<text x="1040.5" y="600.6" font-size="11.5" fill="#e6e6e6" text-anchor="end">4,5</text>
<path d="M1048 563.5 H1053.5" stroke="#8a8a8a" stroke-width="1"/>
<text x="1040.5" y="567.5" font-size="11.5" fill="#e6e6e6" text-anchor="end">5</text>
<path d="M1048 530.4 H1053.5" stroke="#8a8a8a" stroke-width="1"/>
<text x="1040.5" y="534.4" font-size="11.5" fill="#e6e6e6" text-anchor="end">5,5</text>
<path d="M1053.5 861.4 V866.5" stroke="#8a8a8a" stroke-width="1"/>
<text x="1056.5" y="880" font-size="11.5" fill="#e6e6e6">28. Feb</text>
<path d="M1154.0 861.4 V866.5" stroke="#8a8a8a" stroke-width="1"/>
<text x="1157.0" y="880" font-size="11.5" fill="#e6e6e6" font-weight="bold">Mär</text>
<path d="M1254.5 861.4 V866.5" stroke="#8a8a8a" stroke-width="1"/>
<text x="1257.5" y="880" font-size="11.5" fill="#e6e6e6">7. Mär</text>
<path d="M1355.1 861.4 V866.5" stroke="#8a8a8a" stroke-width="1"/>
<text x="1358.1" y="880" font-size="11.5" fill="#e6e6e6">11. Mär</text>
<path d="M1455.6 861.4 V866.5" stroke="#8a8a8a" stroke-width="1"/>
<text x="1458.6" y="880" font-size="11.5" fill="#e6e6e6">15. Mär</text>
<path d="M1556.1 861.4 V866.5" stroke="#8a8a8a" stroke-width="1"/>
<text x="1559.1" y="880" font-size="11.5" fill="#e6e6e6">19. Mär</text>
</svg>
<div class="a" style="left:1012px;top:893px;width:169px;height:28px;background:#222;border-bottom:2px solid #3a78c8"></div>
<div class="a" style="left:1024px;top:900px;font-size:12.5px;color:#eee">Neue COVID-19 Fälle/Tag</div>
<div class="a" style="left:1186px;top:893px;width:326px;height:28px;background:#0c0c0c;border:1px solid #363636;border-top:none"></div>
<div class="a" style="left:1199px;top:900px;font-size:12.5px;color:#eee">Stark betroffene Kreise COVID-19/100.000 Einwohner</div>

</body></html>
